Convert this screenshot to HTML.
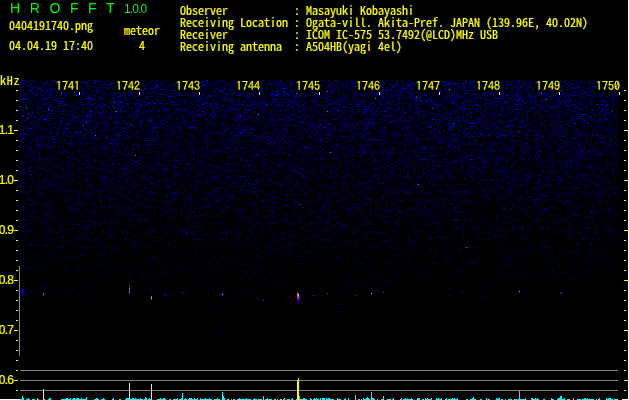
<!DOCTYPE html>
<html><head><meta charset="utf-8"><title>HROFFT 1.0.0</title>
<style>
html,body{margin:0;padding:0;background:#000;}
body{width:629px;height:400px;position:relative;overflow:hidden;color:#ffff00;
font-family:"Noto Sans CJK JP","IPAGothic",monospace;font-feature-settings:"hwid";font-size:12px;line-height:12px;}
div{position:absolute;white-space:pre;transform:translateZ(0);-webkit-text-stroke:0.2px #ffff00;}
.g{color:#00ff00;-webkit-text-stroke:0 #00ff00;font-feature-settings:normal;font-family:"Liberation Sans",sans-serif;}
.t{top:79px;width:24px;height:13px;font-family:"IPAGothic","Noto Sans CJK JP",monospace;font-feature-settings:"hwid";-webkit-text-stroke:0.15px #ffff00;}
.f{left:-1.2px;font-family:"Liberation Sans",sans-serif;font-feature-settings:normal;letter-spacing:-0.75px}
svg{position:absolute;left:0;top:0;}
</style></head><body>
<svg width="629" height="400" viewBox="0 0 629 400" shape-rendering="crispEdges" fill="none" stroke-width="1">
<defs><filter id="b1" filterUnits="userSpaceOnUse" x="0" y="0" width="629" height="400"><feConvolveMatrix order="3" kernelMatrix="0.012 0.038 0.012 0.038 0.8 0.038 0.012 0.038 0.012" divisor="1" edgeMode="none"/></filter><filter id="b2" filterUnits="userSpaceOnUse" x="0" y="0" width="629" height="400"><feConvolveMatrix order="3" kernelMatrix="0.0025 0.0125 0.0025 0.0125 0.94 0.0125 0.0025 0.0125 0.0025" divisor="1" edgeMode="none"/></filter></defs><g transform="translate(0,.5)"><g filter="url(#b1)"><path stroke="rgb(0,0,70)" d="M32 80h1m8 0h1m13 0h1m5 0h1m9 0h1m1 0h2m1 0h1m6 0h1m5 0h1m8 0h2m7 0h1m24 0h1m9 0h1m10 0h5m22 0h1m7 0h1m6 0h1m4 0h1m13 0h1m7 0h1m8 0h1m1 0h1m5 0h1m2 0h1m2 0h1m19 0h1m3 0h2m3 0h1m3 0h1m1 0h1m9 0h1m4 0h1m13 0h1m26 0h1m9 0h1m9 0h1m28 0h2m27 0h1m9 0h1m2 0h1m1 0h1m4 0h2m13 0h1m11 0h2m3 0h1m1 0h1m7 0h1m1 0h1m1 0h1m2 0h1m6 0h1m1 0h1m9 0h1m7 0h1m3 0h1m6 0h1m6 0h1m11 0h1m8 0h2m5 0h1m6 0h1m2 0h1m2 0h1m4 0h1m9 0h1m13 0h1m5 0h1m1 0h1m3 0h1m4 0h2M31 81h1m25 0h1m1 0h1m7 0h1m7 0h1m8 0h1m4 0h1m7 0h2m1 0h1m3 0h1m19 0h1m11 0h2m12 0h1m13 0h1m6 0h1m12 0h1m3 0h1m7 0h1m2 0h1m11 0h1m1 0h1m11 0h1m4 0h1m7 0h1m5 0h1m2 0h1m9 0h1m2 0h1m12 0h1m12 0h3m10 0h1m5 0h1m12 0h1m7 0h1m21 0h1m13 0h1m4 0h1m1 0h1m4 0h1m16 0h1m18 0h2m15 0h2m5 0h1m15 0h1m19 0h1m2 0h1m4 0h1m3 0h1m6 0h1m4 0h1m17 0h1m1 0h1m10 0h1m24 0h1m2 0h1m3 0h2m3 0h2m5 0h1m29 0h1m2 0h1M44 82h1m1 0h1m14 0h1m2 0h1m17 0h1m1 0h1m25 0h2m4 0h1m5 0h1m15 0h1m8 0h1m27 0h1m19 0h1m2 0h1m8 0h1m1 0h1m2 0h1m2 0h1m4 0h2m9 0h2m4 0h1m8 0h1m2 0h1m10 0h1m9 0h1m10 0h1m3 0h1m7 0h1m16 0h1m3 0h1m7 0h1m13 0h1m4 0h1m14 0h1m13 0h1m3 0h1m24 0h1m18 0h1m10 0h1m17 0h1m2 0h1m8 0h1m1 0h1m1 0h1m26 0h1m2 0h1m13 0h1m1 0h1m9 0h1m7 0h1m4 0h2m3 0h1m6 0h2m8 0h1m8 0h1m1 0h1m1 0h1m21 0h1m2 0h1m2 0h1m14 0h1M26 83h1m4 0h1m11 0h1m11 0h1m5 0h1m9 0h1m1 0h1m3 0h1m8 0h1m3 0h1m2 0h1m5 0h2m6 0h1m4 0h1m9 0h1m4 0h1m6 0h1m8 0h1m7 0h1m3 0h2m5 0h2m8 0h3m3 0h1m12 0h1m2 0h1m9 0h1m10 0h1m2 0h1m3 0h1m4 0h2m11 0h1m7 0h2m4 0h1m10 0h1m3 0h1m10 0h1m8 0h1m6 0h1m12 0h1m6 0h1m1 0h1m8 0h1m2 0h1m1 0h2m21 0h1m4 0h1m5 0h1m13 0h2m5 0h2m15 0h1m12 0h1m1 0h1m6 0h1m3 0h2m7 0h1m4 0h1m8 0h1m10 0h1m5 0h1m3 0h3m26 0h1m22 0h1m4 0h1m1 0h1m2 0h1m6 0h1m1 0h1m4 0h1m4 0h1m12 0h1m1 0h1m6 0h1m3 0h1m7 0h1m5 0h2m3 0h1m4 0h1m3 0h1m6 0h1M24 84h2m17 0h3m12 0h1m1 0h2m5 0h1m4 0h1m2 0h1m20 0h1m2 0h1m3 0h1m9 0h1m10 0h1m10 0h1m3 0h1m5 0h1m11 0h2m22 0h1m15 0h1m6 0h3m19 0h1m12 0h1m3 0h1m4 0h1m9 0h1m5 0h2m7 0h1m10 0h1m8 0h1m3 0h1m2 0h2m5 0h1m6 0h1m3 0h1m8 0h1m6 0h1m3 0h1m1 0h1m5 0h2m6 0h2m5 0h1m1 0h1m5 0h1m9 0h1m5 0h1m1 0h2m9 0h1m8 0h1m36 0h1m6 0h1m6 0h1m2 0h1m1 0h1m4 0h2m3 0h1m5 0h2m11 0h1m1 0h2m2 0h1m7 0h1m9 0h2m4 0h1m5 0h1m3 0h2m3 0h1m1 0h1m15 0h1m9 0h1m4 0h1m13 0h1m12 0h2M22 85h1m12 0h1m15 0h1m6 0h2m14 0h1m5 0h1m15 0h1m5 0h1m1 0h1m1 0h2m8 0h2m1 0h1m11 0h1m6 0h1m6 0h1m12 0h1m6 0h1m8 0h1m3 0h1m13 0h1m9 0h1m13 0h1m2 0h1m19 0h1m2 0h1m29 0h1m2 0h1m5 0h1m16 0h1m3 0h1m7 0h2m2 0h3m8 0h1m3 0h1m21 0h1m3 0h2m7 0h1m4 0h1m12 0h1m8 0h1m2 0h1m5 0h2m5 0h1m10 0h1m5 0h1m12 0h1m3 0h1m2 0h1m2 0h1m4 0h3m9 0h1m2 0h1m1 0h1m5 0h2m5 0h1m9 0h1m7 0h1m7 0h1m8 0h1m1 0h2m2 0h1m4 0h1m14 0h1m32 0h1m1 0h1m4 0h1m4 0h1m9 0h1m3 0h1m8 0h1M20 86h1m11 0h1m4 0h1m10 0h1m4 0h1m20 0h1m8 0h1m4 0h2m5 0h1m6 0h2m22 0h1m4 0h1m11 0h1m1 0h1m19 0h1m5 0h1m8 0h1m8 0h1m3 0h1m21 0h1m1 0h1m1 0h1m1 0h1m12 0h1m2 0h1m2 0h1m1 0h1m17 0h1m11 0h1m1 0h1m1 0h1m1 0h3m1 0h1m3 0h1m10 0h1m14 0h1m7 0h1m6 0h1m6 0h1m2 0h1m8 0h1m1 0h1m3 0h1m6 0h2m15 0h1m19 0h1m10 0h1m14 0h1m5 0h1m1 0h1m4 0h3m1 0h1m5 0h1m7 0h3m6 0h1m5 0h1m6 0h1m15 0h1m2 0h1m12 0h2m6 0h1m4 0h1m13 0h2m8 0h1m3 0h1m1 0h1m2 0h1m4 0h1m3 0h1m20 0h1m3 0h1m6 0h2m2 0h1m1 0h1m3 0h1m1 0h1m2 0h1M25 87h1m18 0h1m13 0h2m1 0h1m8 0h1m15 0h2m10 0h1m1 0h1m1 0h1m18 0h1m6 0h1m6 0h1m8 0h1m2 0h1m1 0h1m6 0h1m10 0h1m3 0h1m6 0h1m10 0h1m11 0h1m4 0h1m2 0h1m8 0h1m10 0h1m11 0h1m13 0h1m3 0h1m17 0h1m6 0h1m15 0h1m20 0h1m11 0h2m10 0h1m26 0h1m13 0h1m17 0h2m10 0h1m1 0h1m3 0h1m1 0h1m4 0h1m8 0h2m8 0h1m6 0h1m6 0h1m2 0h1m2 0h1m1 0h1m1 0h1m1 0h1m2 0h1m34 0h1m8 0h1m9 0h1m1 0h1m7 0h1m3 0h1m5 0h1m2 0h1m11 0h1m20 0h1m7 0h1m2 0h1m1 0h1M43 88h2m1 0h1m5 0h1m26 0h3m1 0h2m3 0h1m3 0h1m3 0h1m7 0h1m8 0h1m5 0h1m3 0h1m4 0h1m5 0h1m15 0h1m4 0h1m4 0h1m1 0h2m11 0h1m11 0h1m2 0h1m11 0h1m4 0h1m22 0h2m5 0h1m9 0h1m19 0h1m5 0h1m1 0h1m1 0h1m11 0h1m9 0h1m14 0h1m20 0h1m6 0h1m9 0h1m25 0h1m21 0h1m6 0h2m10 0h2m10 0h1m5 0h1m9 0h2m1 0h2m8 0h1m13 0h1m6 0h1m4 0h1m6 0h1m2 0h1m2 0h1m9 0h1m9 0h1m2 0h1m3 0h1m11 0h1m5 0h1m4 0h1m19 0h1m1 0h1m1 0h2m1 0h1m6 0h1m1 0h1m7 0h1m9 0h1m1 0h2m7 0h2m1 0h1M20 89h1m1 0h1m7 0h1m4 0h1m11 0h1m7 0h1m3 0h3m17 0h1m13 0h1m8 0h1m6 0h1m16 0h1m6 0h1m5 0h1m6 0h1m1 0h1m2 0h1m9 0h1m11 0h1m8 0h1m8 0h2m4 0h1m7 0h1m9 0h1m7 0h1m4 0h1m7 0h2m14 0h1m9 0h1m8 0h1m2 0h1m21 0h1m3 0h1m13 0h1m12 0h1m6 0h1m2 0h1m7 0h1m28 0h1m1 0h2m2 0h1m3 0h1m6 0h1m8 0h2m20 0h1m5 0h1m6 0h1m8 0h1m3 0h1m4 0h1m10 0h1m24 0h1m3 0h1m13 0h1m8 0h1m20 0h1m7 0h1m9 0h1m8 0h2m2 0h1m1 0h1m3 0h1m1 0h1m4 0h1m4 0h1m13 0h2m8 0h1M20 90h3m43 0h1m5 0h1m4 0h1m11 0h2m5 0h1m1 0h1m7 0h1m7 0h1m1 0h1m4 0h1m3 0h1m2 0h1m22 0h1m4 0h1m1 0h1m3 0h1m26 0h1m1 0h1m14 0h1m4 0h1m11 0h1m3 0h1m12 0h2m3 0h1m3 0h2m3 0h1m26 0h2m6 0h2m1 0h1m14 0h1m17 0h1m22 0h1m2 0h1m16 0h2m5 0h1m8 0h2m1 0h2m6 0h1m6 0h2m3 0h1m5 0h1m3 0h1m9 0h1m2 0h2m3 0h1m1 0h1m17 0h1m10 0h1m1 0h1m1 0h1m10 0h1m24 0h2m5 0h1m15 0h1m8 0h1m4 0h1m5 0h1m7 0h1m4 0h1m12 0h1m4 0h1m5 0h1m8 0h1m3 0h1m4 0h1M24 91h1m5 0h1m1 0h1m4 0h2m5 0h1m16 0h2m23 0h1m5 0h1m5 0h1m3 0h1m16 0h1m6 0h1m9 0h1m4 0h1m3 0h1m4 0h1m13 0h1m10 0h1m6 0h1m3 0h1m2 0h1m1 0h1m11 0h1m9 0h1m9 0h1m3 0h1m7 0h1m27 0h1m1 0h1m16 0h2m7 0h1m3 0h1m1 0h1m2 0h1m4 0h1m7 0h1m2 0h1m5 0h1m8 0h1m1 0h1m11 0h1m5 0h1m4 0h1m25 0h1m11 0h1m5 0h1m10 0h1m6 0h1m4 0h2m10 0h1m4 0h1m1 0h3m1 0h1m2 0h1m2 0h1m8 0h2m14 0h3m5 0h2m5 0h1m12 0h1m7 0h1m4 0h1m5 0h1m2 0h1m13 0h1m14 0h2m17 0h1m5 0h2m7 0h1m6 0h1m5 0h1M21 92h1m3 0h1m4 0h1m8 0h1m4 0h1m3 0h1m2 0h1m3 0h2m10 0h1m6 0h1m20 0h1m4 0h1m7 0h2m3 0h1m3 0h1m1 0h1m1 0h1m8 0h1m3 0h1m12 0h2m2 0h1m1 0h1m2 0h1m16 0h1m8 0h1m7 0h1m14 0h1m4 0h1m14 0h1m18 0h1m2 0h1m11 0h1m9 0h2m1 0h2m2 0h1m4 0h2m4 0h1m7 0h1m6 0h2m2 0h1m3 0h1m17 0h1m2 0h1m1 0h1m6 0h1m11 0h1m2 0h2m6 0h1m4 0h1m3 0h1m3 0h1m4 0h1m4 0h1m2 0h1m14 0h1m4 0h1m1 0h3m11 0h1m13 0h1m15 0h1m9 0h1m3 0h1m3 0h1m12 0h1m10 0h3m30 0h3m15 0h2m1 0h1m19 0h1m5 0h1m1 0h1m1 0h2m4 0h2m2 0h1m6 0h2M33 93h1m4 0h1m2 0h1m1 0h1m4 0h1m8 0h3m1 0h2m8 0h1m4 0h1m1 0h1m3 0h1m1 0h1m12 0h1m4 0h1m5 0h2m27 0h3m9 0h1m11 0h1m24 0h2m1 0h1m10 0h2m14 0h1m4 0h1m6 0h1m4 0h1m5 0h1m15 0h1m4 0h1m2 0h1m4 0h1m9 0h1m3 0h1m2 0h1m2 0h1m15 0h1m3 0h1m1 0h2m2 0h1m11 0h1m1 0h1m3 0h1m19 0h1m5 0h1m2 0h1m1 0h1m7 0h1m15 0h2m8 0h1m1 0h2m7 0h1m5 0h1m8 0h2m1 0h1m10 0h1m4 0h1m5 0h2m2 0h1m3 0h1m9 0h1m10 0h1m1 0h1m3 0h1m12 0h1m3 0h1m3 0h2m4 0h1m1 0h1m6 0h2m17 0h1m4 0h1m8 0h1m6 0h1m35 0h1m3 0h1m1 0h1m3 0h1m1 0h1M25 94h1m10 0h1m3 0h1m7 0h1m5 0h1m6 0h1m5 0h1m3 0h1m3 0h1m7 0h1m6 0h1m10 0h1m3 0h1m5 0h1m1 0h1m13 0h1m1 0h1m8 0h1m1 0h1m15 0h1m27 0h1m37 0h1m18 0h1m2 0h1m5 0h1m3 0h1m4 0h2m2 0h1m20 0h1m4 0h1m13 0h1m8 0h1m8 0h1m1 0h1m7 0h1m7 0h1m7 0h1m4 0h1m4 0h1m4 0h1m4 0h1m1 0h1m17 0h1m24 0h1m5 0h1m5 0h1m8 0h1m3 0h2m7 0h1m14 0h1m3 0h1m10 0h1m15 0h1m20 0h2m2 0h1m5 0h1m2 0h1m8 0h1m1 0h1m4 0h1m9 0h1m6 0h1m17 0h1m7 0h1m1 0h1m1 0h1m7 0h2m6 0h1m9 0h1M21 95h1m2 0h1m3 0h1m5 0h1m7 0h1m18 0h1m23 0h1m1 0h1m6 0h1m2 0h2m5 0h3m4 0h1m17 0h1m1 0h2m35 0h3m4 0h1m3 0h1m5 0h1m13 0h1m2 0h1m4 0h1m8 0h1m31 0h1m14 0h1m14 0h1m9 0h1m4 0h2m3 0h1m4 0h1m12 0h1m2 0h1m11 0h1m32 0h1m1 0h1m9 0h1m2 0h1m4 0h1m5 0h1m8 0h1m1 0h1m3 0h1m20 0h1m22 0h1m13 0h1m5 0h1m18 0h1m1 0h1m9 0h1m7 0h1m29 0h1m5 0h2m1 0h1m18 0h1m5 0h1m3 0h1m3 0h1m8 0h1m3 0h1m10 0h1M21 96h2m2 0h1m2 0h1m2 0h1m9 0h1m21 0h1m11 0h1m1 0h1m2 0h1m9 0h1m4 0h1m4 0h1m29 0h1m2 0h1m2 0h1m4 0h1m16 0h1m7 0h1m18 0h1m8 0h3m18 0h1m9 0h1m4 0h1m15 0h1m21 0h2m2 0h1m3 0h2m5 0h1m3 0h1m7 0h1m2 0h1m7 0h1m16 0h1m3 0h1m13 0h1m19 0h1m1 0h1m7 0h1m2 0h1m20 0h1m1 0h1m2 0h1m1 0h1m5 0h1m6 0h1m15 0h1m6 0h1m3 0h1m5 0h1m3 0h1m1 0h1m2 0h1m1 0h1m7 0h1m22 0h1m9 0h1m10 0h1m3 0h1m12 0h1m2 0h1m8 0h1m6 0h2m8 0h1m3 0h2m18 0h1m7 0h1m2 0h1m1 0h2m3 0h1M25 97h1m7 0h1m2 0h1m12 0h2m13 0h1m23 0h1m10 0h1m2 0h1m2 0h1m3 0h1m2 0h1m1 0h1m2 0h1m1 0h1m3 0h1m4 0h1m32 0h2m16 0h1m22 0h2m2 0h1m2 0h3m6 0h1m2 0h1m11 0h1m5 0h1m6 0h1m4 0h1m7 0h2m2 0h1m3 0h1m1 0h1m6 0h1m9 0h1m4 0h2m3 0h2m2 0h1m2 0h1m3 0h1m8 0h1m5 0h1m21 0h1m4 0h1m6 0h1m7 0h1m3 0h1m8 0h1m2 0h1m3 0h1m7 0h1m5 0h1m3 0h1m7 0h1m13 0h1m27 0h1m1 0h1m12 0h1m5 0h1m5 0h1m7 0h1m19 0h1m10 0h1m5 0h1m3 0h1m3 0h1m3 0h1m10 0h1m2 0h1m1 0h1m8 0h1m1 0h1m27 0h2m6 0h1m1 0h1M25 98h1m9 0h1m6 0h1m3 0h1m2 0h1m7 0h1m1 0h1m1 0h1m4 0h1m12 0h1m1 0h1m4 0h1m2 0h1m14 0h1m6 0h1m2 0h1m19 0h2m35 0h1m4 0h2m14 0h2m2 0h1m1 0h1m2 0h1m3 0h1m13 0h1m6 0h1m26 0h1m1 0h1m3 0h1m2 0h1m14 0h1m2 0h2m1 0h1m2 0h2m2 0h1m4 0h1m4 0h1m13 0h1m6 0h1m1 0h1m1 0h2m2 0h1m6 0h3m5 0h1m8 0h1m7 0h1m15 0h1m7 0h1m10 0h1m1 0h1m11 0h1m3 0h1m3 0h1m1 0h2m4 0h1m17 0h1m7 0h1m11 0h1m4 0h2m7 0h1m1 0h1m6 0h2m7 0h1m2 0h1m3 0h1m3 0h1m8 0h1m7 0h1m1 0h1m2 0h1m8 0h1m1 0h1m15 0h1m14 0h1m4 0h1m12 0h1m2 0h1m2 0h1m8 0h1M22 99h1m2 0h2m1 0h1m6 0h1m3 0h1m18 0h2m3 0h1m14 0h1m2 0h1m8 0h1m7 0h1m1 0h1m23 0h1m2 0h1m33 0h1m3 0h1m3 0h1m13 0h1m23 0h1m20 0h1m22 0h1m20 0h1m14 0h1m2 0h4m3 0h2m8 0h1m32 0h1m9 0h1m3 0h1m8 0h1m14 0h1m13 0h1m3 0h1m2 0h1m14 0h1m6 0h1m8 0h1m4 0h1m11 0h1m31 0h1m5 0h1m2 0h1m6 0h1m8 0h1m2 0h1m4 0h1m10 0h2m7 0h2m32 0h1m4 0h1m5 0h1m5 0h1m6 0h1m1 0h1m16 0h2m3 0h1M22 100h1m8 0h1m4 0h2m2 0h2m3 0h1m5 0h1m8 0h1m17 0h1m5 0h1m4 0h1m17 0h1m1 0h1m2 0h1m1 0h1m1 0h1m1 0h1m12 0h1m3 0h2m8 0h1m4 0h1m15 0h1m5 0h1m5 0h1m17 0h2m18 0h1m2 0h1m2 0h1m13 0h1m4 0h1m6 0h1m5 0h1m3 0h1m7 0h2m4 0h1m24 0h1m1 0h1m15 0h1m12 0h2m2 0h1m4 0h1m20 0h1m1 0h1m1 0h1m8 0h1m8 0h1m6 0h1m4 0h1m2 0h1m9 0h2m12 0h1m3 0h3m3 0h1m1 0h2m7 0h2m6 0h1m6 0h2m14 0h1m3 0h1m13 0h1m2 0h1m4 0h1m3 0h1m14 0h1m2 0h1m1 0h1m10 0h1m1 0h1m10 0h1m22 0h1m4 0h1m4 0h1m14 0h1m20 0h1M43 101h1m1 0h1m5 0h1m12 0h1m10 0h1m21 0h1m3 0h1m10 0h1m3 0h1m1 0h1m11 0h1m6 0h1m2 0h1m2 0h1m24 0h1m2 0h1m7 0h1m6 0h1m9 0h1m26 0h1m5 0h1m5 0h1m3 0h1m3 0h1m6 0h1m2 0h1m10 0h2m8 0h1m6 0h1m8 0h1m19 0h2m2 0h1m7 0h1m10 0h1m9 0h1m5 0h1m7 0h1m3 0h1m3 0h1m4 0h1m4 0h1m1 0h1m6 0h1m3 0h1m12 0h1m2 0h1m9 0h1m1 0h1m5 0h1m3 0h1m6 0h1m2 0h1m6 0h1m2 0h1m16 0h1m1 0h1m2 0h1m7 0h1m3 0h1m5 0h1m5 0h1m7 0h1m8 0h1m13 0h2m8 0h1m8 0h1m12 0h1m2 0h1m3 0h1m2 0h1m3 0h2m6 0h1m4 0h1m5 0h1m10 0h1m14 0h3M25 102h2m6 0h1m10 0h1m33 0h1m14 0h1m7 0h1m9 0h1m9 0h2m15 0h1m1 0h1m13 0h1m4 0h1m7 0h1m31 0h1m29 0h1m4 0h1m3 0h2m4 0h1m1 0h1m2 0h1m4 0h1m3 0h1m4 0h1m7 0h1m8 0h1m3 0h1m1 0h1m7 0h1m1 0h1m32 0h1m2 0h1m9 0h1m1 0h1m11 0h1m2 0h1m12 0h1m12 0h1m3 0h1m3 0h1m12 0h1m1 0h2m13 0h1m5 0h1m39 0h1m10 0h1m27 0h1m7 0h1m20 0h1m11 0h1m2 0h2m2 0h1m1 0h1m17 0h1m26 0h1m3 0h1M43 103h2m8 0h1m1 0h1m3 0h1m1 0h1m8 0h2m1 0h1m13 0h1m11 0h2m7 0h1m2 0h1m1 0h1m3 0h1m11 0h1m22 0h1m3 0h2m1 0h1m1 0h1m1 0h1m1 0h1m15 0h1m1 0h1m2 0h1m9 0h1m2 0h1m1 0h1m2 0h1m12 0h1m7 0h1m9 0h1m7 0h1m12 0h1m3 0h3m16 0h1m7 0h1m8 0h2m7 0h1m11 0h1m7 0h1m4 0h1m8 0h1m6 0h1m7 0h1m2 0h1m2 0h1m3 0h2m8 0h1m5 0h1m10 0h1m5 0h1m1 0h2m12 0h1m6 0h1m13 0h1m9 0h1m7 0h1m12 0h1m10 0h1m8 0h1m9 0h1m20 0h1m10 0h1m2 0h1m1 0h1m17 0h1m3 0h2m5 0h1m23 0h1m1 0h1m2 0h1m2 0h1M52 104h1m8 0h1m3 0h2m9 0h2m5 0h1m12 0h1m12 0h1m1 0h1m10 0h2m2 0h1m10 0h1m14 0h1m2 0h1m8 0h1m4 0h1m15 0h1m14 0h1m13 0h1m1 0h1m1 0h2m10 0h1m6 0h2m4 0h1m2 0h4m2 0h1m1 0h2m2 0h1m2 0h1m9 0h1m3 0h1m3 0h1m10 0h1m5 0h3m19 0h1m10 0h1m8 0h1m4 0h1m5 0h1m23 0h1m6 0h1m3 0h1m14 0h1m10 0h2m4 0h1m5 0h2m1 0h1m7 0h1m3 0h1m6 0h1m2 0h1m2 0h2m1 0h1m7 0h1m8 0h1m7 0h1m10 0h2m1 0h1m1 0h1m6 0h1m9 0h2m1 0h1m21 0h1m8 0h1m26 0h1m1 0h2m6 0h1m2 0h1m5 0h1m6 0h1m8 0h1m2 0h1M23 105h1m6 0h1m4 0h1m6 0h1m1 0h2m7 0h1m13 0h2m6 0h2m13 0h1m30 0h1m2 0h1m9 0h1m15 0h1m2 0h1m23 0h2m1 0h1m9 0h1m1 0h1m13 0h1m1 0h1m5 0h3m6 0h1m17 0h1m1 0h1m1 0h1m11 0h1m2 0h1m1 0h2m21 0h1m6 0h1m7 0h2m13 0h1m1 0h2m7 0h1m3 0h1m13 0h2m1 0h1m9 0h1m14 0h1m2 0h1m5 0h2m1 0h1m1 0h1m17 0h1m2 0h1m7 0h2m4 0h1m6 0h1m24 0h1m6 0h1m3 0h1m6 0h1m16 0h1m6 0h1m3 0h1m25 0h1m5 0h1m3 0h1m6 0h1m11 0h1m2 0h1m14 0h1m8 0h1m3 0h1m1 0h1m25 0h1M20 106h1m4 0h1m12 0h3m22 0h1m26 0h1m1 0h1m2 0h1m3 0h1m15 0h1m1 0h1m7 0h1m2 0h1m12 0h1m7 0h1m3 0h1m4 0h1m8 0h1m1 0h1m10 0h1m6 0h1m11 0h1m4 0h1m11 0h1m1 0h1m13 0h1m11 0h1m11 0h1m4 0h1m16 0h3m8 0h1m13 0h1m14 0h1m7 0h2m11 0h1m12 0h1m6 0h2m36 0h1m5 0h1m4 0h1m20 0h1m9 0h1m3 0h2m8 0h1m4 0h1m1 0h1m3 0h2m35 0h2m6 0h1m14 0h2m3 0h1m9 0h1m1 0h1m6 0h1m38 0h1m13 0h1m3 0h1m2 0h1M24 107h1m1 0h1m9 0h2m4 0h1m7 0h1m2 0h1m59 0h1m5 0h2m50 0h1m8 0h1m12 0h1m1 0h1m5 0h1m22 0h1m1 0h1m2 0h1m4 0h1m1 0h1m15 0h1m5 0h2m1 0h1m2 0h1m2 0h1m14 0h1m5 0h1m9 0h1m5 0h1m1 0h1m7 0h1m7 0h1m1 0h1m6 0h1m2 0h1m4 0h1m1 0h1m12 0h1m2 0h1m5 0h2m17 0h2m7 0h1m4 0h2m14 0h1m3 0h1m8 0h1m10 0h1m31 0h2m3 0h1m10 0h1m4 0h2m6 0h1m13 0h1m3 0h1m9 0h1m33 0h1m11 0h1m2 0h1m6 0h1m1 0h1m18 0h1m4 0h1m3 0h1M27 108h2m2 0h1m3 0h1m13 0h3m8 0h1m1 0h1m10 0h1m1 0h1m5 0h1m6 0h1m4 0h1m2 0h1m9 0h1m3 0h1m3 0h1m5 0h1m1 0h1m4 0h1m2 0h1m31 0h1m3 0h1m4 0h1m5 0h1m5 0h2m1 0h1m12 0h1m1 0h2m10 0h1m2 0h1m15 0h2m28 0h1m8 0h1m6 0h1m7 0h2m14 0h1m5 0h1m11 0h1m10 0h1m4 0h1m6 0h1m6 0h1m26 0h2m4 0h1m3 0h1m9 0h1m12 0h1m15 0h1m3 0h1m4 0h1m11 0h1m11 0h1m5 0h1m6 0h1m1 0h1m1 0h1m10 0h1m15 0h1m13 0h1m6 0h1m14 0h1m2 0h1m4 0h1m3 0h2m10 0h1m7 0h1m10 0h1m21 0h1m7 0h1M38 109h1m2 0h1m2 0h1m2 0h1m8 0h1m20 0h1m3 0h1m4 0h1m10 0h1m34 0h1m5 0h1m6 0h1m6 0h2m3 0h2m4 0h1m2 0h1m4 0h1m2 0h1m5 0h1m10 0h1m1 0h1m6 0h1m10 0h2m7 0h1m9 0h1m19 0h1m6 0h1m1 0h1m2 0h1m9 0h1m1 0h1m21 0h1m10 0h1m2 0h1m1 0h1m2 0h2m7 0h1m10 0h1m16 0h1m3 0h1m5 0h1m6 0h1m5 0h1m2 0h1m14 0h1m7 0h1m6 0h1m5 0h1m4 0h1m6 0h1m5 0h1m1 0h1m2 0h1m11 0h1m5 0h2m5 0h1m4 0h1m1 0h1m4 0h1m19 0h1m13 0h1m5 0h3m1 0h2m6 0h1m13 0h2m2 0h1m5 0h1m15 0h2m4 0h2m4 0h2m3 0h1m1 0h1M35 110h1m6 0h3m45 0h1m4 0h1m1 0h1m11 0h1m4 0h1m4 0h1m4 0h1m13 0h1m13 0h2m2 0h1m11 0h2m5 0h1m7 0h2m9 0h1m1 0h1m16 0h1m8 0h1m4 0h1m17 0h1m8 0h1m4 0h1m9 0h1m2 0h1m20 0h1m9 0h1m25 0h1m1 0h1m12 0h2m36 0h1m13 0h1m6 0h1m6 0h1m10 0h2m30 0h3m5 0h1m17 0h1m2 0h1m28 0h1m8 0h1m8 0h2m5 0h1m17 0h1m2 0h1m20 0h1m8 0h1m2 0h1m2 0h1m2 0h1M21 111h1m9 0h1m7 0h2m2 0h1m1 0h1m9 0h1m6 0h1m11 0h1m1 0h1m16 0h1m6 0h1m1 0h1m1 0h1m13 0h1m15 0h1m29 0h1m3 0h2m10 0h1m3 0h1m3 0h1m1 0h1m4 0h1m5 0h1m2 0h1m18 0h1m6 0h1m16 0h1m1 0h1m5 0h1m7 0h1m2 0h1m15 0h1m6 0h2m4 0h1m15 0h1m37 0h1m44 0h2m5 0h1m9 0h1m3 0h1m10 0h1m10 0h1m12 0h1m1 0h1m19 0h1m24 0h1m7 0h1m21 0h1m16 0h1m26 0h1m31 0h1m8 0h1M23 112h1m1 0h1m2 0h1m7 0h1m1 0h1m2 0h1m12 0h1m4 0h1m5 0h1m1 0h1m21 0h1m9 0h1m2 0h1m2 0h1m7 0h1m2 0h1m3 0h1m10 0h1m9 0h1m11 0h2m8 0h1m13 0h1m11 0h1m2 0h1m6 0h1m1 0h1m2 0h1m25 0h1m25 0h1m6 0h2m3 0h1m16 0h1m1 0h1m1 0h1m26 0h1m1 0h1m7 0h1m17 0h1m1 0h1m1 0h1m3 0h1m4 0h1m25 0h1m2 0h1m8 0h1m1 0h1m1 0h1m11 0h1m9 0h1m18 0h1m4 0h1m19 0h2m23 0h1m22 0h2m1 0h1m4 0h1m4 0h1m7 0h1m21 0h1m2 0h1m1 0h1m13 0h1m5 0h1m17 0h1m2 0h1m5 0h1M27 113h2m2 0h1m13 0h1m13 0h1m15 0h1m4 0h1m7 0h1m5 0h1m12 0h1m3 0h1m1 0h1m1 0h1m1 0h1m1 0h1m2 0h1m11 0h3m2 0h1m8 0h1m19 0h1m2 0h1m3 0h2m4 0h1m3 0h1m6 0h1m2 0h2m1 0h2m15 0h1m4 0h1m4 0h1m3 0h1m5 0h1m6 0h1m16 0h1m3 0h1m10 0h1m26 0h1m16 0h2m21 0h1m12 0h1m10 0h1m4 0h1m3 0h1m3 0h3m14 0h2m7 0h2m1 0h1m8 0h1m7 0h1m8 0h1m2 0h1m2 0h1m8 0h1m6 0h1m13 0h1m1 0h2m2 0h1m1 0h1m1 0h1m2 0h1m10 0h1m2 0h1m18 0h1m25 0h1m11 0h1m7 0h1m6 0h1m3 0h1m6 0h1m10 0h1m13 0h2m2 0h1M24 114h1m8 0h1m19 0h2m1 0h2m1 0h1m9 0h1m2 0h2m5 0h1m7 0h1m4 0h1m14 0h1m7 0h2m12 0h2m11 0h1m1 0h1m7 0h1m3 0h1m7 0h1m2 0h1m2 0h1m8 0h1m14 0h1m26 0h2m6 0h1m2 0h1m4 0h1m15 0h1m8 0h1m5 0h1m9 0h1m3 0h1m12 0h1m9 0h1m7 0h1m3 0h1m8 0h1m12 0h2m12 0h2m5 0h1m11 0h1m16 0h1m1 0h1m2 0h1m20 0h1m4 0h1m15 0h2m12 0h1m5 0h1m2 0h1m4 0h2m16 0h1m3 0h1m7 0h1m5 0h1m4 0h1m11 0h2m6 0h1m8 0h1m3 0h1m23 0h1m2 0h1m17 0h1m8 0h2m8 0h1m6 0h1m3 0h1M22 115h1m21 0h1m4 0h1m1 0h1m4 0h1m21 0h1m2 0h1m6 0h1m1 0h1m3 0h1m5 0h1m5 0h1m2 0h2m4 0h1m1 0h2m6 0h1m6 0h1m4 0h2m1 0h1m3 0h1m13 0h1m5 0h3m12 0h1m2 0h1m7 0h1m7 0h2m3 0h1m13 0h1m3 0h1m2 0h1m11 0h1m1 0h1m8 0h1m16 0h1m4 0h1m13 0h2m5 0h1m10 0h1m29 0h1m10 0h1m3 0h1m6 0h1m10 0h1m1 0h1m16 0h1m4 0h3m4 0h2m13 0h1m6 0h1m4 0h1m12 0h1m20 0h1m3 0h1m1 0h1m12 0h1m8 0h1m6 0h2m4 0h1m2 0h1m4 0h1m15 0h1m4 0h2m12 0h2m1 0h1m15 0h1m2 0h2m7 0h1m2 0h1m7 0h1m20 0h1m10 0h1M20 116h1m13 0h1m5 0h1m5 0h1m5 0h3m18 0h1m3 0h1m1 0h1m11 0h1m10 0h1m3 0h1m3 0h1m3 0h1m12 0h1m2 0h1m6 0h1m1 0h1m7 0h1m9 0h1m4 0h2m1 0h1m9 0h1m17 0h1m3 0h1m12 0h1m15 0h1m5 0h2m2 0h3m8 0h2m2 0h1m4 0h1m8 0h1m4 0h1m3 0h1m13 0h2m8 0h1m4 0h1m12 0h1m3 0h1m2 0h1m21 0h1m2 0h1m2 0h1m3 0h1m1 0h1m5 0h2m2 0h1m4 0h1m16 0h2m15 0h1m5 0h1m5 0h1m4 0h2m15 0h1m12 0h1m3 0h1m11 0h1m10 0h1m10 0h1m4 0h3m22 0h1m9 0h1m8 0h1m5 0h1m18 0h1m5 0h1m4 0h1m5 0h2m12 0h1M44 117h1m1 0h2m2 0h1m30 0h1m11 0h1m2 0h1m5 0h1m1 0h2m2 0h5m1 0h1m7 0h1m7 0h1m8 0h1m22 0h1m20 0h2m2 0h2m2 0h1m3 0h1m10 0h1m7 0h1m13 0h1m2 0h1m8 0h1m1 0h1m9 0h1m4 0h1m21 0h1m8 0h1m1 0h1m1 0h1m18 0h1m3 0h1m4 0h1m2 0h1m1 0h1m11 0h1m11 0h1m2 0h1m12 0h1m11 0h1m43 0h1m26 0h1m2 0h1m3 0h1m5 0h1m7 0h1m4 0h1m2 0h1m3 0h1m5 0h1m6 0h1m11 0h2m1 0h1m14 0h1m2 0h1m6 0h1m24 0h2m8 0h2m5 0h1m2 0h1m7 0h1m20 0h2m5 0h1M20 118h1m17 0h1m3 0h2m3 0h1m3 0h1m10 0h1m2 0h1m4 0h1m24 0h1m6 0h1m7 0h1m4 0h1m2 0h1m2 0h1m3 0h2m1 0h1m2 0h1m5 0h1m4 0h1m5 0h1m7 0h1m11 0h1m7 0h1m5 0h1m8 0h1m1 0h2m12 0h1m16 0h1m5 0h1m11 0h1m2 0h1m6 0h1m3 0h2m12 0h1m7 0h1m2 0h2m2 0h1m6 0h2m6 0h1m7 0h1m2 0h1m2 0h2m2 0h2m13 0h2m2 0h1m8 0h1m1 0h1m6 0h1m15 0h1m2 0h1m2 0h1m2 0h1m21 0h1m4 0h2m6 0h1m1 0h1m12 0h1m1 0h1m21 0h1m9 0h1m23 0h1m12 0h1m8 0h1m15 0h1m2 0h1m10 0h1m6 0h1m13 0h1m7 0h1m11 0h1m2 0h1m21 0h1M29 119h1m7 0h1m3 0h1m9 0h1m1 0h1m14 0h1m1 0h1m1 0h1m4 0h1m4 0h3m9 0h2m3 0h1m15 0h2m10 0h1m1 0h1m9 0h1m3 0h1m2 0h2m13 0h3m1 0h3m16 0h2m10 0h1m5 0h1m11 0h1m17 0h1m17 0h1m7 0h2m4 0h1m8 0h1m9 0h1m2 0h1m7 0h1m5 0h2m4 0h1m15 0h1m2 0h1m11 0h1m5 0h1m10 0h2m7 0h1m4 0h1m6 0h1m2 0h1m9 0h3m3 0h1m39 0h1m9 0h1m7 0h1m2 0h1m4 0h1m8 0h1m12 0h1m2 0h1m2 0h1m12 0h1m1 0h1m8 0h1m3 0h3m3 0h2m2 0h1m12 0h1m8 0h1m9 0h2m38 0h1m5 0h1m9 0h1m2 0h1M28 120h1m4 0h1m7 0h1m4 0h1m4 0h2m5 0h1m20 0h1m2 0h1m3 0h1m7 0h1m9 0h1m1 0h2m1 0h1m5 0h1m2 0h1m3 0h1m1 0h1m8 0h2m3 0h1m6 0h1m3 0h1m12 0h2m3 0h1m19 0h1m3 0h1m2 0h1m1 0h1m3 0h1m5 0h1m5 0h1m6 0h1m5 0h1m16 0h1m9 0h1m2 0h1m6 0h1m5 0h2m6 0h1m12 0h1m2 0h1m42 0h1m6 0h1m13 0h1m2 0h1m3 0h1m6 0h1m10 0h1m13 0h2m1 0h1m8 0h2m3 0h1m23 0h1m2 0h1m1 0h1m3 0h1m2 0h1m2 0h1m2 0h1m1 0h1m11 0h1m9 0h1m1 0h2m7 0h1m1 0h1m5 0h1m21 0h1m6 0h1m6 0h1m5 0h1m7 0h2m3 0h1m19 0h1m5 0h1m3 0h1m1 0h2m16 0h1m1 0h1M20 121h1m2 0h1m2 0h1m9 0h1m7 0h1m1 0h1m20 0h2m1 0h1m1 0h1m3 0h1m4 0h1m1 0h1m1 0h1m14 0h1m4 0h1m3 0h1m15 0h1m6 0h1m17 0h2m20 0h2m1 0h1m4 0h1m8 0h1m3 0h3m18 0h1m8 0h1m11 0h1m5 0h1m4 0h1m4 0h2m3 0h1m2 0h1m4 0h2m5 0h1m3 0h1m7 0h1m3 0h1m12 0h1m14 0h1m2 0h2m1 0h1m12 0h1m16 0h1m5 0h1m2 0h1m4 0h1m4 0h1m27 0h1m17 0h1m10 0h1m8 0h1m6 0h1m16 0h1m5 0h1m2 0h1m8 0h1m11 0h1m14 0h1m1 0h1m21 0h1m10 0h1m4 0h1m3 0h1m4 0h3m23 0h2m11 0h1m3 0h1m5 0h1m2 0h1m6 0h1M20 122h1m2 0h1m16 0h1m1 0h1m22 0h2m5 0h1m9 0h1m8 0h1m12 0h3m13 0h1m5 0h2m13 0h1m7 0h1m3 0h1m4 0h1m2 0h1m4 0h1m6 0h1m1 0h1m6 0h1m3 0h1m14 0h1m6 0h1m2 0h1m7 0h1m12 0h1m3 0h1m7 0h1m7 0h1m20 0h1m17 0h1m11 0h2m14 0h3m3 0h1m12 0h1m2 0h1m24 0h1m2 0h1m13 0h1m17 0h3m5 0h1m16 0h1m5 0h1m2 0h2m7 0h1m7 0h1m2 0h1m3 0h1m14 0h1m19 0h1m7 0h1m14 0h1m1 0h1m6 0h1m3 0h1m20 0h1m2 0h2m9 0h1m4 0h1m4 0h1m2 0h1m2 0h2m2 0h1m9 0h1m6 0h1m1 0h1m3 0h1m1 0h1M34 123h1m17 0h1m7 0h1m7 0h1m16 0h1m2 0h1m9 0h1m1 0h1m5 0h1m10 0h1m1 0h2m14 0h1m14 0h1m2 0h1m19 0h1m3 0h4m1 0h1m6 0h1m6 0h1m15 0h1m4 0h3m4 0h2m4 0h1m7 0h1m12 0h1m20 0h2m9 0h1m6 0h1m8 0h1m3 0h1m27 0h1m13 0h1m6 0h1m7 0h1m1 0h1m8 0h1m10 0h2m2 0h1m1 0h1m6 0h1m8 0h1m7 0h1m4 0h1m29 0h1m3 0h2m36 0h4m1 0h1m21 0h1m4 0h1m5 0h1m3 0h1m6 0h1m3 0h1m5 0h1m3 0h2m7 0h1m8 0h1m4 0h1m10 0h1m17 0h1m12 0h1M38 124h3m10 0h1m10 0h1m11 0h1m12 0h1m20 0h2m6 0h1m3 0h1m5 0h1m14 0h1m1 0h1m3 0h1m2 0h1m4 0h1m15 0h1m5 0h2m1 0h1m27 0h1m6 0h1m14 0h1m9 0h2m5 0h2m11 0h1m20 0h1m28 0h1m12 0h1m6 0h1m7 0h1m4 0h2m2 0h2m3 0h2m3 0h1m12 0h1m5 0h1m13 0h1m17 0h1m2 0h1m2 0h1m12 0h1m8 0h1m3 0h1m3 0h1m1 0h1m2 0h1m4 0h1m4 0h1m5 0h2m27 0h2m2 0h1m4 0h1m2 0h1m7 0h1m2 0h1m3 0h1m11 0h1m19 0h1m7 0h1m5 0h3m12 0h1m1 0h1m1 0h1m12 0h1m16 0h1M20 125h1m2 0h2m3 0h1m4 0h1m6 0h1m1 0h1m2 0h1m2 0h1m2 0h1m1 0h1m7 0h1m3 0h1m20 0h1m29 0h1m11 0h1m7 0h1m2 0h2m40 0h1m17 0h1m31 0h1m3 0h1m9 0h1m18 0h1m15 0h1m1 0h1m1 0h3m14 0h1m6 0h4m8 0h1m3 0h1m3 0h1m1 0h1m1 0h1m7 0h1m4 0h1m8 0h1m2 0h1m10 0h1m19 0h1m5 0h1m9 0h1m15 0h1m5 0h1m10 0h1m5 0h1m7 0h1m15 0h1m7 0h1m6 0h1m3 0h2m6 0h2m1 0h1m1 0h1m10 0h1m14 0h1m43 0h1m16 0h1m3 0h1M27 126h1m8 0h1m8 0h1m19 0h1m1 0h1m5 0h1m10 0h1m2 0h1m9 0h1m12 0h1m3 0h1m6 0h1m2 0h1m15 0h1m4 0h1m3 0h1m1 0h1m5 0h1m5 0h2m8 0h1m2 0h1m2 0h2m1 0h1m3 0h1m17 0h1m4 0h2m1 0h1m1 0h1m12 0h1m10 0h1m6 0h1m2 0h1m12 0h1m3 0h1m3 0h2m1 0h1m10 0h1m2 0h1m2 0h1m7 0h1m21 0h1m3 0h1m11 0h1m4 0h1m9 0h1m4 0h1m10 0h1m1 0h1m11 0h1m2 0h1m10 0h1m4 0h1m8 0h2m9 0h1m6 0h1m3 0h1m11 0h1m1 0h1m15 0h1m2 0h1m4 0h1m3 0h2m3 0h1m1 0h1m2 0h1m1 0h1m4 0h1m2 0h2m9 0h1m6 0h1m6 0h1m2 0h1m8 0h1m17 0h2m9 0h1m16 0h1m7 0h1m1 0h1m5 0h1m6 0h3m7 0h1m7 0h1M28 127h1m4 0h2m8 0h1m15 0h1m3 0h1m14 0h1m4 0h1m10 0h1m1 0h1m6 0h2m8 0h1m2 0h2m3 0h1m2 0h1m4 0h1m2 0h1m11 0h1m4 0h1m2 0h2m12 0h1m11 0h1m13 0h1m8 0h1m2 0h1m18 0h1m3 0h1m8 0h1m6 0h1m1 0h1m2 0h1m1 0h1m14 0h1m1 0h1m13 0h1m12 0h1m4 0h1m12 0h1m18 0h1m6 0h1m5 0h1m2 0h1m3 0h1m24 0h1m1 0h1m1 0h1m2 0h1m11 0h1m5 0h1m21 0h1m14 0h1m3 0h1m10 0h1m15 0h1m1 0h1m6 0h1m4 0h1m1 0h1m3 0h1m3 0h1m9 0h1m1 0h1m7 0h1m8 0h1m2 0h1m19 0h1m6 0h2m1 0h1m1 0h1m2 0h1m35 0h1m1 0h1m5 0h1m8 0h1M23 128h1m32 0h1m11 0h1m24 0h1m7 0h1m7 0h1m4 0h1m12 0h1m3 0h1m1 0h1m1 0h1m6 0h1m1 0h1m6 0h2m2 0h1m5 0h2m2 0h1m5 0h2m1 0h1m2 0h2m1 0h1m1 0h1m2 0h1m2 0h1m16 0h2m14 0h1m6 0h2m5 0h4m2 0h1m1 0h1m6 0h1m1 0h2m6 0h1m12 0h1m3 0h2m16 0h1m11 0h2m9 0h1m1 0h2m12 0h1m23 0h1m15 0h1m5 0h1m1 0h1m3 0h1m14 0h2m7 0h1m16 0h1m9 0h1m2 0h1m6 0h1m4 0h1m22 0h1m5 0h1m6 0h1m9 0h1m12 0h1m16 0h1m9 0h2m17 0h1m5 0h2m39 0h1m4 0h1m1 0h1m5 0h1M25 129h2m16 0h1m2 0h1m6 0h1m1 0h1m8 0h1m9 0h1m4 0h1m2 0h1m1 0h1m9 0h1m8 0h1m17 0h1m9 0h1m6 0h2m10 0h1m2 0h1m9 0h1m2 0h1m1 0h1m8 0h1m12 0h1m6 0h1m5 0h1m1 0h1m4 0h1m12 0h1m3 0h1m12 0h1m5 0h1m2 0h1m3 0h1m8 0h1m3 0h1m11 0h1m2 0h1m1 0h1m8 0h2m2 0h1m7 0h1m1 0h1m11 0h1m4 0h1m6 0h3m7 0h1m5 0h1m18 0h1m5 0h1m9 0h1m2 0h2m16 0h2m2 0h1m2 0h1m7 0h2m8 0h1m5 0h1m5 0h1m3 0h2m2 0h1m5 0h1m9 0h1m6 0h1m1 0h1m2 0h1m4 0h2m4 0h1m8 0h1m14 0h1m14 0h1m32 0h1m17 0h1m19 0h1m3 0h1m3 0h1m5 0h1M26 130h1m10 0h1m2 0h1m5 0h1m1 0h1m9 0h1m28 0h2m9 0h1m1 0h2m23 0h1m2 0h1m1 0h1m14 0h2m4 0h1m14 0h1m1 0h1m2 0h1m1 0h1m22 0h1m22 0h1m3 0h1m5 0h1m8 0h1m1 0h1m31 0h1m5 0h1m5 0h1m26 0h1m4 0h1m5 0h1m1 0h1m17 0h1m18 0h1m12 0h1m3 0h1m1 0h1m2 0h2m6 0h1m10 0h1m5 0h1m10 0h1m33 0h1m5 0h1m11 0h1m17 0h1m37 0h1m8 0h1m6 0h1m2 0h1m20 0h1m3 0h1m4 0h1m13 0h1m3 0h1m7 0h1m2 0h1m1 0h2m3 0h1m1 0h1M24 131h2m2 0h1m2 0h1m5 0h2m10 0h1m1 0h1m6 0h1m10 0h1m7 0h1m3 0h1m6 0h1m2 0h1m1 0h1m6 0h1m1 0h1m6 0h1m32 0h1m1 0h1m22 0h1m8 0h1m2 0h1m12 0h1m4 0h2m11 0h1m2 0h1m6 0h1m11 0h1m1 0h1m2 0h1m33 0h2m11 0h1m15 0h1m3 0h2m1 0h1m7 0h2m1 0h2m1 0h1m12 0h1m3 0h1m5 0h1m1 0h1m3 0h1m15 0h1m5 0h1m2 0h1m15 0h1m13 0h1m6 0h1m8 0h1m11 0h2m27 0h1m1 0h2m4 0h1m6 0h1m3 0h1m1 0h1m5 0h1m6 0h1m18 0h3m2 0h1m4 0h1m4 0h1m1 0h2m1 0h1m8 0h1m13 0h1m11 0h1m2 0h1m5 0h1m5 0h1m6 0h1m4 0h2m17 0h1M22 132h1m14 0h1m11 0h1m7 0h2m4 0h2m3 0h1m46 0h1m8 0h1m1 0h1m4 0h2m9 0h1m10 0h1m2 0h1m3 0h2m4 0h1m2 0h1m2 0h1m2 0h1m5 0h1m20 0h1m18 0h1m2 0h2m1 0h1m4 0h1m10 0h1m4 0h1m5 0h1m2 0h1m3 0h1m6 0h1m5 0h1m2 0h1m1 0h1m2 0h1m6 0h1m2 0h1m1 0h1m6 0h1m11 0h1m1 0h1m1 0h1m6 0h3m1 0h1m2 0h1m11 0h1m11 0h1m4 0h1m1 0h1m5 0h1m9 0h1m12 0h2m4 0h1m5 0h1m5 0h1m4 0h1m13 0h1m16 0h2m5 0h1m9 0h1m10 0h1m16 0h1m8 0h1m3 0h1m1 0h1m1 0h1m7 0h1m24 0h1m7 0h1m2 0h1m1 0h1m1 0h1m6 0h3m11 0h1m3 0h1m7 0h1m11 0h2M21 133h1m15 0h1m4 0h2m1 0h1m1 0h1m2 0h1m2 0h1m4 0h1m4 0h1m25 0h1m12 0h1m2 0h1m3 0h1m2 0h1m5 0h1m4 0h1m12 0h1m9 0h1m2 0h1m11 0h1m2 0h1m6 0h1m2 0h2m21 0h1m6 0h1m7 0h1m5 0h1m3 0h1m7 0h1m1 0h1m3 0h1m13 0h1m1 0h1m16 0h2m2 0h1m4 0h1m5 0h1m1 0h1m2 0h1m5 0h1m10 0h2m2 0h1m5 0h1m4 0h2m6 0h1m19 0h1m1 0h1m8 0h1m14 0h1m1 0h1m4 0h1m9 0h1m2 0h1m17 0h1m3 0h1m21 0h1m6 0h1m8 0h1m5 0h1m1 0h2m26 0h1m7 0h3m9 0h1m1 0h1m3 0h2m2 0h1m14 0h3m9 0h1m9 0h1m22 0h2m19 0h1m5 0h1m2 0h1m4 0h1M25 134h1m3 0h1m14 0h2m8 0h1m7 0h1m4 0h2m11 0h1m8 0h1m1 0h1m6 0h1m1 0h2m1 0h1m2 0h2m1 0h1m8 0h1m3 0h1m1 0h1m20 0h2m13 0h1m26 0h1m3 0h1m12 0h1m5 0h1m9 0h1m5 0h1m12 0h1m7 0h1m11 0h1m23 0h1m9 0h1m19 0h1m1 0h1m4 0h2m1 0h1m4 0h1m15 0h1m45 0h2m10 0h1m3 0h1m13 0h4m2 0h1m2 0h1m5 0h1m3 0h1m11 0h1m13 0h1m3 0h1m7 0h1m9 0h1m3 0h1m6 0h1m2 0h2m14 0h1m2 0h2m9 0h1m2 0h1m14 0h1m8 0h2m1 0h1m3 0h1m16 0h1m15 0h1m9 0h1m1 0h1m2 0h1m2 0h1M20 135h1m12 0h1m1 0h1m2 0h2m2 0h1m7 0h1m16 0h1m1 0h1m2 0h1m12 0h1m4 0h1m4 0h1m14 0h1m5 0h1m1 0h1m11 0h2m9 0h1m17 0h1m4 0h1m1 0h4m1 0h1m51 0h1m14 0h1m1 0h1m3 0h1m3 0h1m5 0h1m1 0h3m5 0h1m8 0h1m9 0h2m5 0h1m3 0h1m13 0h1m5 0h1m7 0h1m17 0h1m6 0h1m3 0h1m1 0h1m2 0h1m5 0h1m19 0h2m5 0h1m11 0h1m5 0h2m5 0h1m17 0h1m1 0h1m5 0h1m1 0h1m3 0h1m7 0h1m7 0h1m1 0h1m5 0h1m8 0h2m1 0h1m3 0h1m13 0h1m2 0h1m5 0h1m2 0h1m15 0h1m3 0h1m4 0h1m5 0h1m21 0h1m5 0h1m4 0h1m2 0h3m2 0h1m3 0h1m9 0h1m3 0h1m1 0h1m8 0h1m3 0h1M21 136h1m16 0h1m2 0h3m5 0h2m6 0h1m11 0h1m10 0h1m4 0h1m30 0h1m4 0h1m9 0h1m15 0h1m10 0h1m10 0h1m11 0h1m1 0h1m4 0h1m2 0h1m1 0h3m1 0h1m5 0h2m1 0h1m13 0h1m14 0h1m8 0h1m4 0h1m9 0h1m6 0h1m12 0h1m5 0h1m4 0h1m7 0h1m8 0h2m25 0h1m20 0h1m7 0h1m1 0h1m12 0h1m2 0h1m1 0h1m14 0h2m5 0h1m13 0h1m15 0h2m3 0h1m3 0h1m4 0h1m1 0h1m7 0h1m16 0h2m5 0h1m54 0h1m2 0h1m4 0h1m4 0h1m4 0h1m17 0h1m1 0h1m1 0h1m12 0h1m5 0h1m4 0h1m5 0h1m5 0h2M28 137h1m14 0h1m10 0h1m6 0h1m1 0h1m2 0h1m9 0h1m1 0h1m6 0h2m2 0h1m2 0h1m6 0h1m2 0h1m2 0h1m12 0h1m3 0h1m7 0h1m5 0h1m5 0h1m2 0h1m7 0h1m25 0h1m23 0h2m1 0h1m2 0h1m9 0h1m2 0h1m4 0h2m6 0h1m1 0h1m2 0h1m18 0h1m2 0h2m4 0h1m12 0h1m2 0h1m3 0h2m2 0h1m6 0h1m1 0h1m14 0h1m10 0h1m1 0h1m1 0h2m6 0h4m7 0h3m9 0h1m2 0h1m7 0h1m11 0h1m5 0h1m6 0h2m9 0h1m6 0h1m15 0h1m1 0h1m1 0h1m4 0h1m1 0h1m3 0h1m23 0h1m2 0h1m1 0h2m4 0h1m6 0h1m1 0h1m1 0h1m2 0h1m3 0h1m18 0h1m7 0h1m4 0h2m19 0h1m3 0h1m14 0h2m5 0h1m2 0h1m4 0h1m4 0h1m7 0h1m9 0h1m3 0h1M22 138h1m7 0h1m7 0h1m6 0h1m5 0h1m4 0h1m2 0h1m4 0h1m25 0h1m10 0h1m3 0h2m3 0h2m11 0h1m3 0h1m18 0h1m6 0h1m1 0h1m1 0h1m4 0h1m2 0h1m2 0h1m13 0h1m10 0h1m15 0h1m5 0h1m5 0h1m5 0h1m8 0h2m3 0h1m5 0h1m9 0h1m28 0h1m2 0h1m10 0h1m11 0h1m6 0h3m8 0h1m9 0h1m10 0h1m17 0h1m5 0h1m10 0h1m9 0h1m9 0h1m2 0h2m17 0h1m3 0h1m6 0h1m8 0h1m1 0h1m2 0h1m1 0h2m10 0h1m6 0h2m7 0h1m1 0h1m5 0h1m5 0h1m15 0h1m29 0h1m9 0h1m9 0h1m1 0h1m7 0h1m3 0h2m4 0h1m2 0h1m3 0h1m15 0h1M23 139h2m18 0h1m2 0h1m8 0h2m2 0h1m8 0h1m11 0h1m11 0h1m5 0h1m1 0h1m6 0h1m1 0h1m2 0h1m2 0h1m11 0h1m1 0h1m1 0h1m9 0h1m5 0h1m5 0h2m32 0h1m6 0h1m2 0h1m4 0h1m4 0h1m16 0h2m9 0h1m16 0h1m3 0h1m2 0h1m8 0h1m5 0h1m10 0h3m1 0h1m5 0h1m2 0h2m15 0h1m3 0h1m4 0h1m25 0h1m18 0h3m1 0h2m11 0h3m4 0h2m1 0h1m9 0h1m4 0h1m4 0h1m7 0h2m10 0h2m2 0h1m9 0h2m2 0h1m2 0h1m23 0h1m10 0h1m48 0h2m2 0h2m16 0h1m4 0h1m22 0h1m3 0h1m3 0h1m9 0h1m4 0h1M54 140h1m10 0h1m11 0h4m4 0h1m1 0h1m2 0h1m9 0h2m9 0h1m8 0h1m52 0h1m18 0h1m7 0h1m11 0h1m5 0h1m11 0h2m7 0h1m14 0h1m8 0h1m1 0h1m3 0h1m14 0h1m17 0h1m11 0h3m3 0h1m11 0h1m10 0h1m6 0h2m3 0h1m11 0h1m4 0h2m8 0h1m13 0h1m5 0h1m4 0h1m37 0h1m2 0h1m3 0h1m10 0h1m4 0h1m1 0h1m2 0h1m9 0h1m9 0h1m7 0h1m2 0h1m2 0h2m20 0h1m2 0h1m15 0h2m2 0h1m5 0h3m3 0h1m2 0h1m1 0h1m23 0h1m2 0h1m2 0h1m9 0h1m1 0h2m3 0h1M28 141h1m3 0h1m2 0h1m3 0h2m1 0h1m8 0h1m8 0h1m4 0h1m1 0h1m1 0h1m6 0h1m10 0h1m5 0h1m3 0h2m6 0h1m17 0h2m10 0h1m11 0h1m14 0h1m1 0h1m6 0h1m8 0h1m6 0h3m3 0h1m14 0h1m1 0h1m5 0h1m35 0h3m2 0h1m1 0h1m10 0h1m4 0h1m1 0h1m6 0h2m15 0h1m1 0h1m7 0h1m6 0h1m1 0h1m16 0h1m12 0h1m4 0h1m3 0h1m1 0h1m1 0h1m27 0h1m4 0h1m8 0h1m2 0h1m3 0h2m5 0h1m13 0h1m2 0h3m21 0h1m3 0h1m2 0h1m5 0h2m12 0h1m1 0h1m3 0h1m4 0h1m7 0h1m1 0h1m1 0h1m34 0h1m9 0h1m7 0h1m1 0h1m10 0h2m6 0h1m11 0h1m8 0h1m8 0h2M42 142h1m3 0h1m5 0h1m27 0h2m4 0h1m6 0h1m9 0h1m3 0h2m3 0h1m3 0h1m1 0h1m3 0h1m15 0h1m2 0h1m7 0h1m1 0h2m3 0h1m2 0h1m7 0h1m1 0h2m13 0h2m7 0h2m2 0h1m2 0h1m4 0h2m1 0h1m6 0h1m5 0h1m2 0h1m6 0h1m1 0h1m1 0h1m6 0h1m2 0h1m10 0h2m7 0h1m1 0h1m6 0h1m3 0h1m4 0h1m9 0h1m20 0h1m4 0h1m2 0h1m14 0h1m1 0h1m4 0h1m5 0h1m10 0h1m1 0h1m8 0h1m8 0h1m2 0h1m9 0h1m2 0h1m4 0h1m5 0h1m5 0h2m3 0h1m11 0h1m2 0h1m3 0h1m8 0h1m2 0h1m9 0h1m3 0h1m1 0h1m3 0h1m4 0h1m4 0h2m1 0h1m5 0h1m35 0h1m10 0h1m7 0h1m6 0h1m12 0h1m1 0h1m14 0h1m2 0h1m10 0h3m14 0h1m1 0h2M25 143h1m2 0h1m5 0h1m10 0h1m7 0h1m4 0h1m7 0h1m4 0h1m10 0h1m6 0h1m9 0h1m8 0h1m16 0h1m3 0h1m5 0h1m12 0h1m1 0h1m24 0h1m2 0h1m1 0h1m8 0h1m14 0h1m6 0h1m8 0h2m7 0h1m2 0h1m2 0h1m15 0h1m5 0h1m17 0h1m3 0h1m7 0h1m4 0h1m5 0h1m1 0h2m13 0h2m28 0h1m2 0h1m8 0h1m2 0h1m4 0h1m7 0h1m7 0h2m5 0h1m7 0h1m1 0h1m2 0h1m3 0h1m6 0h1m10 0h1m4 0h1m15 0h2m3 0h1m2 0h1m8 0h1m16 0h1m9 0h1m8 0h1m7 0h1m9 0h2m8 0h3m8 0h1m7 0h1m8 0h1m11 0h2m9 0h1m1 0h1m6 0h1m1 0h1m5 0h1m6 0h1m7 0h1m2 0h1m3 0h1M20 144h1m2 0h1m22 0h2m1 0h1m5 0h1m6 0h1m7 0h1m1 0h1m4 0h1m4 0h1m9 0h1m2 0h1m31 0h1m20 0h2m2 0h1m3 0h1m25 0h1m2 0h1m23 0h1m19 0h1m16 0h1m4 0h1m1 0h1m2 0h1m2 0h1m12 0h1m40 0h1m9 0h1m5 0h1m15 0h1m11 0h1m11 0h1m12 0h2m17 0h1m1 0h4m4 0h1m4 0h2m8 0h1m18 0h1m6 0h2m3 0h1m10 0h1m5 0h1m41 0h1m2 0h1m3 0h1m13 0h2m5 0h2m1 0h1m2 0h1m11 0h1m3 0h1m3 0h1m5 0h1m9 0h2m8 0h1m4 0h1M28 145h1m1 0h1m12 0h1m4 0h1m6 0h1m12 0h1m21 0h1m4 0h1m16 0h1m3 0h1m3 0h1m5 0h1m3 0h1m5 0h1m5 0h2m4 0h1m6 0h1m8 0h1m2 0h1m7 0h1m2 0h1m15 0h1m4 0h1m24 0h1m36 0h1m2 0h1m1 0h1m7 0h1m5 0h1m2 0h1m2 0h1m2 0h1m3 0h1m22 0h1m2 0h1m8 0h2m3 0h2m3 0h1m10 0h1m19 0h1m15 0h2m11 0h1m3 0h1m25 0h1m3 0h1m6 0h2m6 0h1m7 0h1m4 0h1m4 0h1m4 0h1m2 0h1m11 0h1m4 0h1m2 0h1m4 0h1m5 0h1m1 0h1m2 0h1m20 0h1m25 0h1m4 0h1m3 0h1m4 0h2m17 0h1m1 0h1m2 0h1m8 0h1m6 0h3m1 0h1M21 146h1m16 0h2m6 0h1m16 0h1m2 0h1m5 0h1m2 0h1m9 0h1m26 0h1m6 0h1m6 0h1m4 0h1m26 0h1m1 0h1m6 0h1m2 0h1m11 0h1m5 0h2m12 0h1m4 0h1m2 0h1m10 0h1m4 0h2m2 0h1m12 0h1m4 0h1m5 0h1m2 0h1m1 0h1m12 0h1m18 0h1m10 0h1m2 0h1m1 0h1m1 0h1m27 0h1m4 0h1m11 0h1m10 0h1m2 0h1m2 0h1m11 0h1m5 0h1m3 0h1m4 0h1m6 0h1m14 0h3m2 0h2m7 0h1m3 0h1m1 0h1m4 0h1m8 0h1m2 0h1m2 0h1m2 0h1m26 0h1m3 0h1m2 0h1m3 0h1m3 0h1m6 0h2m3 0h1m13 0h1m1 0h1m14 0h1m6 0h1m4 0h1m3 0h1m15 0h2m10 0h1m16 0h1M28 147h1m4 0h1m8 0h1m3 0h1m6 0h1m1 0h1m1 0h1m2 0h1m2 0h1m2 0h1m15 0h1m4 0h1m5 0h1m2 0h1m4 0h2m12 0h1m10 0h1m2 0h1m9 0h1m5 0h1m1 0h1m16 0h1m27 0h1m11 0h1m2 0h1m15 0h1m4 0h1m5 0h1m18 0h1m2 0h1m15 0h1m9 0h1m2 0h1m17 0h1m1 0h1m17 0h1m4 0h1m8 0h1m5 0h1m7 0h2m4 0h1m26 0h1m5 0h1m23 0h1m5 0h1m1 0h1m8 0h1m7 0h1m2 0h1m25 0h1m16 0h1m3 0h3m1 0h1m8 0h1m2 0h1m9 0h1m11 0h1m8 0h1m17 0h1m2 0h1m1 0h1m11 0h1m9 0h2m11 0h1m2 0h1m2 0h1m8 0h1m3 0h1M26 148h2m3 0h1m3 0h4m9 0h1m11 0h1m4 0h1m4 0h1m11 0h1m5 0h1m11 0h1m5 0h1m2 0h1m2 0h1m10 0h1m24 0h1m4 0h1m1 0h1m11 0h1m35 0h1m1 0h1m11 0h1m7 0h1m1 0h1m3 0h1m20 0h2m8 0h1m2 0h1m12 0h1m12 0h1m5 0h1m7 0h1m1 0h1m7 0h1m13 0h1m3 0h1m18 0h1m1 0h1m2 0h1m10 0h1m4 0h1m2 0h1m3 0h1m23 0h1m5 0h1m6 0h1m8 0h2m3 0h1m2 0h1m1 0h1m2 0h1m13 0h1m11 0h1m7 0h1m10 0h2m4 0h1m2 0h1m2 0h1m4 0h1m10 0h2m1 0h1m8 0h1m6 0h3m3 0h1m19 0h1m1 0h1m15 0h1m16 0h1m15 0h1m5 0h1M24 149h2m1 0h1m3 0h1m7 0h2m3 0h2m6 0h1m4 0h2m7 0h1m31 0h1m10 0h1m1 0h1m9 0h1m19 0h1m5 0h1m20 0h1m1 0h2m19 0h1m10 0h1m2 0h1m1 0h1m14 0h1m5 0h1m1 0h1m2 0h1m2 0h1m36 0h1m14 0h1m1 0h1m6 0h1m5 0h1m2 0h1m8 0h1m2 0h1m3 0h2m12 0h1m10 0h1m1 0h2m30 0h2m2 0h2m34 0h1m12 0h2m3 0h2m4 0h1m18 0h2m15 0h1m7 0h1m2 0h2m7 0h1m6 0h1m15 0h1m6 0h1m1 0h1m2 0h1m1 0h1m1 0h1m1 0h3m17 0h1m15 0h1m1 0h2m29 0h1m4 0h1M29 150h1m2 0h1m2 0h1m12 0h1m2 0h1m7 0h1m21 0h2m8 0h1m14 0h1m14 0h1m3 0h1m1 0h1m24 0h1m5 0h1m7 0h1m4 0h1m19 0h1m1 0h1m8 0h1m6 0h1m4 0h1m2 0h1m4 0h1m2 0h1m9 0h1m20 0h1m7 0h1m21 0h1m12 0h1m10 0h1m1 0h1m3 0h1m19 0h2m14 0h1m17 0h3m5 0h1m3 0h1m1 0h2m14 0h1m1 0h1m2 0h1m3 0h1m1 0h1m8 0h1m3 0h2m2 0h1m25 0h1m20 0h2m3 0h1m3 0h1m7 0h2m1 0h1m4 0h1m8 0h1m1 0h1m6 0h1m2 0h1m1 0h1m5 0h1m17 0h2m10 0h1m20 0h1m1 0h1m3 0h2m11 0h1m7 0h1m4 0h1m2 0h1M28 151h1m1 0h1m2 0h1m1 0h1m1 0h1m14 0h1m13 0h1m8 0h1m2 0h1m10 0h1m2 0h1m14 0h1m16 0h1m12 0h2m16 0h1m2 0h1m2 0h1m8 0h1m2 0h1m1 0h2m3 0h1m43 0h1m6 0h1m28 0h2m16 0h1m10 0h1m1 0h1m6 0h1m20 0h1m18 0h1m4 0h1m11 0h1m8 0h1m9 0h1m4 0h1m4 0h1m11 0h1m8 0h1m4 0h1m14 0h1m5 0h1m2 0h1m12 0h1m9 0h2m1 0h1m1 0h1m9 0h2m3 0h1m12 0h1m8 0h1m15 0h1m43 0h1m3 0h1m3 0h1m5 0h1m2 0h1m5 0h1m6 0h1m18 0h1m1 0h1m3 0h1M23 152h1m10 0h1m2 0h1m12 0h1m2 0h1m5 0h1m2 0h1m8 0h1m7 0h1m7 0h1m5 0h1m9 0h1m3 0h1m11 0h1m19 0h3m4 0h1m4 0h2m5 0h1m4 0h1m8 0h1m4 0h1m34 0h1m12 0h4m18 0h1m3 0h1m3 0h1m16 0h1m39 0h2m5 0h1m1 0h1m4 0h1m15 0h1m1 0h1m3 0h1m3 0h1m3 0h1m1 0h1m10 0h1m1 0h1m12 0h1m3 0h1m9 0h1m10 0h1m36 0h1m4 0h1m1 0h1m4 0h1m18 0h1m1 0h2m1 0h1m3 0h1m9 0h1m2 0h1m1 0h1m10 0h1m13 0h1m4 0h1m4 0h1m32 0h1m7 0h2m5 0h1m9 0h1M28 153h1m20 0h1m31 0h2m3 0h1m5 0h1m3 0h1m7 0h1m6 0h1m8 0h1m7 0h1m6 0h1m8 0h1m3 0h1m2 0h1m3 0h1m1 0h1m1 0h1m4 0h1m16 0h1m13 0h1m5 0h1m4 0h1m11 0h1m4 0h2m3 0h1m11 0h1m2 0h1m8 0h1m3 0h1m2 0h1m11 0h1m2 0h1m1 0h2m11 0h1m6 0h1m17 0h1m4 0h1m4 0h1m14 0h1m1 0h1m4 0h2m3 0h1m6 0h2m2 0h1m11 0h1m5 0h1m4 0h1m1 0h1m4 0h1m1 0h1m5 0h1m3 0h1m2 0h1m19 0h1m3 0h1m7 0h1m5 0h1m16 0h1m26 0h2m2 0h1m11 0h1m3 0h1m8 0h1m2 0h1m6 0h2m2 0h1m6 0h1m24 0h1m3 0h1m5 0h1m6 0h2m4 0h2m1 0h1m23 0h1M58 154h1m13 0h1m10 0h1m27 0h2m11 0h1m1 0h1m3 0h1m18 0h1m13 0h1m2 0h1m3 0h1m4 0h3m15 0h1m5 0h1m45 0h1m2 0h1m17 0h1m6 0h1m4 0h1m5 0h1m36 0h1m22 0h1m15 0h1m9 0h1m1 0h1m5 0h1m15 0h1m21 0h1m3 0h1m22 0h1m17 0h1m2 0h2m16 0h1m1 0h1m15 0h1m4 0h2m2 0h1m17 0h1m11 0h1m6 0h1m12 0h1m22 0h1m7 0h1m9 0h1m1 0h1m2 0h1m5 0h1M27 155h1m2 0h1m4 0h1m2 0h1m20 0h1m6 0h1m11 0h1m9 0h1m8 0h1m10 0h2m6 0h2m21 0h1m13 0h1m5 0h1m6 0h1m3 0h1m2 0h1m2 0h1m7 0h1m24 0h1m2 0h1m2 0h1m6 0h1m3 0h1m3 0h1m3 0h1m8 0h1m1 0h1m12 0h1m3 0h1m26 0h1m11 0h1m8 0h1m2 0h1m19 0h1m6 0h2m18 0h2m1 0h1m16 0h1m28 0h1m14 0h1m1 0h1m1 0h1m1 0h1m8 0h1m14 0h2m13 0h1m11 0h1m10 0h1m16 0h1m23 0h1m19 0h1m8 0h1m17 0h1m12 0h1m7 0h2m2 0h1m8 0h1M20 156h1m7 0h1m5 0h1m2 0h1m2 0h1m3 0h1m9 0h1m9 0h1m2 0h1m46 0h1m9 0h1m12 0h1m3 0h1m17 0h1m3 0h1m2 0h1m1 0h1m4 0h1m16 0h1m21 0h1m4 0h1m24 0h1m8 0h2m8 0h1m1 0h1m5 0h1m38 0h1m6 0h1m7 0h1m12 0h1m43 0h1m18 0h2m1 0h2m10 0h1m1 0h2m7 0h1m16 0h1m16 0h1m2 0h1m1 0h1m2 0h1m1 0h1m4 0h1m1 0h1m8 0h1m5 0h1m5 0h1m5 0h1m5 0h1m9 0h1m8 0h1m20 0h1m7 0h1m3 0h1m3 0h1m31 0h1m15 0h1m1 0h1M32 157h1m2 0h1m6 0h1m2 0h1m2 0h1m10 0h1m6 0h3m1 0h1m13 0h1m8 0h1m4 0h2m8 0h1m2 0h1m12 0h1m13 0h1m3 0h1m4 0h1m1 0h1m1 0h1m2 0h1m4 0h1m14 0h1m3 0h1m3 0h1m13 0h1m3 0h2m7 0h1m17 0h1m2 0h2m16 0h2m6 0h1m4 0h2m12 0h1m31 0h1m3 0h1m5 0h1m2 0h1m23 0h1m3 0h1m11 0h1m4 0h1m2 0h1m12 0h1m3 0h1m9 0h1m4 0h1m6 0h1m25 0h1m5 0h1m3 0h1m18 0h2m1 0h1m3 0h1m6 0h1m7 0h1m9 0h3m1 0h1m7 0h1m20 0h1m3 0h1m14 0h1m16 0h1m6 0h1m3 0h1m3 0h1m38 0h1M36 158h1m12 0h1m6 0h1m6 0h1m6 0h1m17 0h1m4 0h2m13 0h2m12 0h1m8 0h1m3 0h1m1 0h1m4 0h1m13 0h1m14 0h1m5 0h1m2 0h1m18 0h1m4 0h1m5 0h1m9 0h1m8 0h1m6 0h1m11 0h1m6 0h1m9 0h1m6 0h1m10 0h1m1 0h1m3 0h1m6 0h1m11 0h1m6 0h1m5 0h1m2 0h1m8 0h1m6 0h1m26 0h1m20 0h1m1 0h1m11 0h1m4 0h1m17 0h1m6 0h1m9 0h1m3 0h1m12 0h1m4 0h1m5 0h1m7 0h2m1 0h1m10 0h3m18 0h1m9 0h1m1 0h1m19 0h1m2 0h2m9 0h1m1 0h1m13 0h1m2 0h1m2 0h1m6 0h1m3 0h1m19 0h1M22 159h1m8 0h1m4 0h1m12 0h1m9 0h1m10 0h1m2 0h2m17 0h1m8 0h1m8 0h1m1 0h1m11 0h1m1 0h1m2 0h2m11 0h1m18 0h1m1 0h1m5 0h1m5 0h1m14 0h1m4 0h1m1 0h1m10 0h1m20 0h1m15 0h1m5 0h1m8 0h1m2 0h1m1 0h1m9 0h1m11 0h1m1 0h1m10 0h1m1 0h1m2 0h1m10 0h1m4 0h1m1 0h1m15 0h1m5 0h1m3 0h1m4 0h1m2 0h1m5 0h1m6 0h1m2 0h2m11 0h1m1 0h1m8 0h1m8 0h3m1 0h1m5 0h1m10 0h2m9 0h1m14 0h1m8 0h1m1 0h1m22 0h1m1 0h2m7 0h1m6 0h1m14 0h1m4 0h1m3 0h1m8 0h1m2 0h1m1 0h2m7 0h1m8 0h1m4 0h2m4 0h1m3 0h1m3 0h1m7 0h1m1 0h1m10 0h1m9 0h1M28 160h1m11 0h1m2 0h1m11 0h1m11 0h1m9 0h1m8 0h2m5 0h2m21 0h1m3 0h1m3 0h1m7 0h1m4 0h3m1 0h1m7 0h1m6 0h1m12 0h1m8 0h1m30 0h1m6 0h1m2 0h1m20 0h1m4 0h1m5 0h2m4 0h1m2 0h1m8 0h1m18 0h1m12 0h1m1 0h1m5 0h1m1 0h2m21 0h1m3 0h1m4 0h1m6 0h1m10 0h1m1 0h1m4 0h1m15 0h1m11 0h1m6 0h1m21 0h1m8 0h1m4 0h2m5 0h1m5 0h1m4 0h1m3 0h2m19 0h1m2 0h1m5 0h1m1 0h1m13 0h1m2 0h2m3 0h1m34 0h1m23 0h1m1 0h1m6 0h2m2 0h1m10 0h1m5 0h1M20 161h1m11 0h1m6 0h1m3 0h1m2 0h1m20 0h1m3 0h1m7 0h1m8 0h1m12 0h2m10 0h1m1 0h1m7 0h1m19 0h1m24 0h1m1 0h1m19 0h1m6 0h1m2 0h1m1 0h1m2 0h1m15 0h1m19 0h1m7 0h1m4 0h1m13 0h1m12 0h1m21 0h1m7 0h1m11 0h2m8 0h1m12 0h1m10 0h1m11 0h1m13 0h1m15 0h2m7 0h1m4 0h1m4 0h1m3 0h1m1 0h1m5 0h1m19 0h2m1 0h1m2 0h1m5 0h1m17 0h1m5 0h1m8 0h1m8 0h1m11 0h1m7 0h2m7 0h1m8 0h1m12 0h1m1 0h1m2 0h1m9 0h1m12 0h1m11 0h1M25 162h1m13 0h1m32 0h1m12 0h1m9 0h4m4 0h1m1 0h2m18 0h1m10 0h1m22 0h1m14 0h1m1 0h2m4 0h1m8 0h1m28 0h1m7 0h1m4 0h1m15 0h1m2 0h2m4 0h1m7 0h1m2 0h1m1 0h1m3 0h1m1 0h1m11 0h1m7 0h1m11 0h1m5 0h1m9 0h2m6 0h1m1 0h1m8 0h1m5 0h1m3 0h1m1 0h1m1 0h1m4 0h1m5 0h1m4 0h1m9 0h1m18 0h1m4 0h1m30 0h1m26 0h1m2 0h1m32 0h1m9 0h1m4 0h1m15 0h1m11 0h1m3 0h1m6 0h1m1 0h1m5 0h1m15 0h1m2 0h1M25 163h1m9 0h1m7 0h1m1 0h1m1 0h1m10 0h1m11 0h1m14 0h1m12 0h1m11 0h1m3 0h1m3 0h2m11 0h1m26 0h1m2 0h1m3 0h2m2 0h1m11 0h1m6 0h1m12 0h1m10 0h1m14 0h1m6 0h2m3 0h2m1 0h1m26 0h1m15 0h1m39 0h1m1 0h1m3 0h1m9 0h1m9 0h1m17 0h1m20 0h1m6 0h1m17 0h1m26 0h1m11 0h1m5 0h2m17 0h1m11 0h1m4 0h1m15 0h1m9 0h1m4 0h1m5 0h1m7 0h1m1 0h1m2 0h1m8 0h1m5 0h1m28 0h3m1 0h1M28 164h1m15 0h2m13 0h1m9 0h1m2 0h1m6 0h1m2 0h1m14 0h1m10 0h1m1 0h1m1 0h1m12 0h1m12 0h2m5 0h1m12 0h1m9 0h1m1 0h1m8 0h1m8 0h2m5 0h1m5 0h1m9 0h1m12 0h1m2 0h1m2 0h1m1 0h1m19 0h1m20 0h1m3 0h2m12 0h1m6 0h1m5 0h2m3 0h1m63 0h1m5 0h1m25 0h1m10 0h1m9 0h2m1 0h2m19 0h1m10 0h1m8 0h1m9 0h1m27 0h1m2 0h1m7 0h1m4 0h2m9 0h1m13 0h1m5 0h1m1 0h1m12 0h1m1 0h1m10 0h1m7 0h1m12 0h1m9 0h1M54 165h1m11 0h1m8 0h2m7 0h1m19 0h1m8 0h1m1 0h1m3 0h1m3 0h1m4 0h1m5 0h1m1 0h2m7 0h1m27 0h2m10 0h1m25 0h1m4 0h1m1 0h1m2 0h1m3 0h2m11 0h2m23 0h1m6 0h1m19 0h1m18 0h1m12 0h1m1 0h1m6 0h1m7 0h2m21 0h1m4 0h1m9 0h1m25 0h1m24 0h1m4 0h1m3 0h1m2 0h2m6 0h1m19 0h1m1 0h1m31 0h1m1 0h1m6 0h1m7 0h1m16 0h1m33 0h1m6 0h1m8 0h1m6 0h1M26 166h1m2 0h1m36 0h1m24 0h1m15 0h1m16 0h1m6 0h1m10 0h1m1 0h1m10 0h1m7 0h1m54 0h2m3 0h1m3 0h1m21 0h1m9 0h1m30 0h1m19 0h1m1 0h1m14 0h1m2 0h1m2 0h1m4 0h1m5 0h1m13 0h1m16 0h1m3 0h1m2 0h1m10 0h1m7 0h1m4 0h1m1 0h2m12 0h1m14 0h1m22 0h2m8 0h1m8 0h1m4 0h1m4 0h2m5 0h1m11 0h1m8 0h2m18 0h1m3 0h1m2 0h1m21 0h1m2 0h1m2 0h1m6 0h1m7 0h1m7 0h1m1 0h1m8 0h1m9 0h2M22 167h1m2 0h1m8 0h1m3 0h2m4 0h1m25 0h1m12 0h1m6 0h1m1 0h1m21 0h1m7 0h1m5 0h1m2 0h1m14 0h2m15 0h1m12 0h1m13 0h1m3 0h1m2 0h1m3 0h1m3 0h1m16 0h1m3 0h1m7 0h1m8 0h2m13 0h1m15 0h2m12 0h1m20 0h1m4 0h1m25 0h1m11 0h1m18 0h2m19 0h1m13 0h1m10 0h1m20 0h1m12 0h1m3 0h1m14 0h1m4 0h1m2 0h2m3 0h1m11 0h1m48 0h1m3 0h1m9 0h1m21 0h1m3 0h1m6 0h2m4 0h1m7 0h1M30 168h1m4 0h2m33 0h1m8 0h1m21 0h1m8 0h1m10 0h2m21 0h1m6 0h1m3 0h1m34 0h1m21 0h1m4 0h1m23 0h1m28 0h1m14 0h1m44 0h1m6 0h1m9 0h2m5 0h1m28 0h1m12 0h1m4 0h1m4 0h1m5 0h1m27 0h1m29 0h1m29 0h1m13 0h1m11 0h1m14 0h1m22 0h1m6 0h1m11 0h1m26 0h1m1 0h1m4 0h1M42 169h1m1 0h1m5 0h1m28 0h1m13 0h1m11 0h1m2 0h1m24 0h1m6 0h2m20 0h1m5 0h1m9 0h1m6 0h1m25 0h1m7 0h1m33 0h1m10 0h1m16 0h1m1 0h1m1 0h1m3 0h2m11 0h1m26 0h1m4 0h1m21 0h1m2 0h1m20 0h1m4 0h1m6 0h1m5 0h1m15 0h1m13 0h1m3 0h1m9 0h1m1 0h1m11 0h1m12 0h2m11 0h1m35 0h1m5 0h1m3 0h1m11 0h1m1 0h1m4 0h1m15 0h1m12 0h1m4 0h1m8 0h1m1 0h1m6 0h2m1 0h1m3 0h1M25 170h1m32 0h1m4 0h1m95 0h1m68 0h1m3 0h1m2 0h1m15 0h1m12 0h1m4 0h1m13 0h1m5 0h1m5 0h1m7 0h1m10 0h1m19 0h1m6 0h1m24 0h1m8 0h1m22 0h1m29 0h1m7 0h1m7 0h1m3 0h1m24 0h1m28 0h1m18 0h1m2 0h1m26 0h1m45 0h1M52 171h1m8 0h1m2 0h1m7 0h1m4 0h1m26 0h1m7 0h1m64 0h1m7 0h1m38 0h1m1 0h1m17 0h2m8 0h1m4 0h1m17 0h1m7 0h1m59 0h1m16 0h1m44 0h1m6 0h1m105 0h1m43 0h2m8 0h1m39 0h1M32 172h1m9 0h1m67 0h1m15 0h1m18 0h1m18 0h1m19 0h1m11 0h1m4 0h1m13 0h2m31 0h1m135 0h1m6 0h1m7 0h1m6 0h1m42 0h1m26 0h1m7 0h2m16 0h1m9 0h1m9 0h1m1 0h1m48 0h1m3 0h1m31 0h1M26 173h1m35 0h1m34 0h1m49 0h1m30 0h1m1 0h1m9 0h1m5 0h1m5 0h2m11 0h1m2 0h1m7 0h1m21 0h1m7 0h1m53 0h1m14 0h1m22 0h1m13 0h1m16 0h1m58 0h1m57 0h1m4 0h1m29 0h1m8 0h1M47 174h1m26 0h1m45 0h1m37 0h1m6 0h1m22 0h1m97 0h1m14 0h1m70 0h1m12 0h1m115 0h1m4 0h1m33 0h2M39 175h1m35 0h1m8 0h1m51 0h1m9 0h1m30 0h1m9 0h1m115 0h1m44 0h1m29 0h1m13 0h1m219 0h1M90 176h1m6 0h1m75 0h1m35 0h1m23 0h1m11 0h1m73 0h1m21 0h1m165 0h1m2 0h1m13 0h1m50 0h1M86 177h1m165 0h1m98 0h1m50 0h1m6 0h1m40 0h1m41 0h1m120 0h1M30 178h1m234 0h1m210 0h1m55 0h1m51 0h1"/><path stroke="rgb(0,0,81)" d="M25 80h2m2 0h1m4 0h1m15 0h1m2 0h2m26 0h1m3 0h1m5 0h1m19 0h1m13 0h1m4 0h1m5 0h2m23 0h1m17 0h1m4 0h1m53 0h1m5 0h1m8 0h1m1 0h1m8 0h1m3 0h1m3 0h1m12 0h1m5 0h1m1 0h1m8 0h1m14 0h1m4 0h1m2 0h1m2 0h1m18 0h1m2 0h1m15 0h1m6 0h1m2 0h1m7 0h1m17 0h1m5 0h1m8 0h1m4 0h1m3 0h1m1 0h1m15 0h1m22 0h1m5 0h1m5 0h1m8 0h1m40 0h2m17 0h1m4 0h1m7 0h1m10 0h1m3 0h1m6 0h1m5 0h1m3 0h1m11 0h1m5 0h1M40 81h1m15 0h1m1 0h1m3 0h1m8 0h1m2 0h1m7 0h1m19 0h1m8 0h1m8 0h1m7 0h2m3 0h1m5 0h1m2 0h1m2 0h1m1 0h1m18 0h1m5 0h1m3 0h1m4 0h1m1 0h1m3 0h1m15 0h1m8 0h1m20 0h1m5 0h1m2 0h1m3 0h1m29 0h1m1 0h1m19 0h1m4 0h1m13 0h1m4 0h2m4 0h1m4 0h1m5 0h1m5 0h1m12 0h1m7 0h1m3 0h1m5 0h1m5 0h1m12 0h1m1 0h1m3 0h1m10 0h1m4 0h1m1 0h1m5 0h1m4 0h1m9 0h2m4 0h1m6 0h1m11 0h1m11 0h1m8 0h1m5 0h1m6 0h1m3 0h1m18 0h1m11 0h1m4 0h1m7 0h1m7 0h1m4 0h1m14 0h1m4 0h1m9 0h1m4 0h1m14 0h1m6 0h1M20 82h1m1 0h1m5 0h2m2 0h1m3 0h1m5 0h1m7 0h1m16 0h1m4 0h2m21 0h1m2 0h1m19 0h1m16 0h1m8 0h1m10 0h1m8 0h1m14 0h2m4 0h1m4 0h1m8 0h1m4 0h1m6 0h1m11 0h1m1 0h1m8 0h1m12 0h1m14 0h1m8 0h1m15 0h1m3 0h2m4 0h2m9 0h1m7 0h1m10 0h1m4 0h1m5 0h3m13 0h2m7 0h1m5 0h1m7 0h1m35 0h1m8 0h1m4 0h1m8 0h1m12 0h1m2 0h2m19 0h1m5 0h1m6 0h1m1 0h1m5 0h2m5 0h1m11 0h1m6 0h1m1 0h1m5 0h1m6 0h1m4 0h1m12 0h1m2 0h1m4 0h1m13 0h1m37 0h1m3 0h1M23 83h1m3 0h1m7 0h1m1 0h1m10 0h1m21 0h1m1 0h1m9 0h1m1 0h2m8 0h2m8 0h1m20 0h2m5 0h1m6 0h2m13 0h1m14 0h1m1 0h1m10 0h1m17 0h1m6 0h1m24 0h1m13 0h1m6 0h1m2 0h1m14 0h2m5 0h1m12 0h2m8 0h1m17 0h1m9 0h1m1 0h1m6 0h1m4 0h1m39 0h2m5 0h1m6 0h1m7 0h1m15 0h1m14 0h1m13 0h1m3 0h1m1 0h1m14 0h1m11 0h1m2 0h1m1 0h1m7 0h1m4 0h1m6 0h1m4 0h1m1 0h1m7 0h1m1 0h1m12 0h1m12 0h1m14 0h1m9 0h1m3 0h1m2 0h1m8 0h1m14 0h1m4 0h1M30 84h2m1 0h1m17 0h1m1 0h1m14 0h1m1 0h1m3 0h1m4 0h1m4 0h1m4 0h1m10 0h1m29 0h1m18 0h1m3 0h1m1 0h1m9 0h1m4 0h2m2 0h1m9 0h1m23 0h1m8 0h1m3 0h1m3 0h1m5 0h1m2 0h1m2 0h1m7 0h1m6 0h2m20 0h1m5 0h1m2 0h1m8 0h1m2 0h1m10 0h1m5 0h1m12 0h1m2 0h1m2 0h1m12 0h1m6 0h1m4 0h1m25 0h1m16 0h1m10 0h1m19 0h1m2 0h2m12 0h1m2 0h1m21 0h1m5 0h1m5 0h2m4 0h1m12 0h1m3 0h1m1 0h1m1 0h1m11 0h1m12 0h1m6 0h1m2 0h1m2 0h1m1 0h1m5 0h1m6 0h1m26 0h2m19 0h1M32 85h1m8 0h1m1 0h1m3 0h1m18 0h2m4 0h1m13 0h1m14 0h1m10 0h1m2 0h1m6 0h1m1 0h1m10 0h1m12 0h1m15 0h1m3 0h1m12 0h1m6 0h1m21 0h1m9 0h2m1 0h2m6 0h1m2 0h1m3 0h1m46 0h3m4 0h1m1 0h1m5 0h1m4 0h1m3 0h1m2 0h1m4 0h1m17 0h1m11 0h1m6 0h1m2 0h2m19 0h3m3 0h1m26 0h1m15 0h1m38 0h1m24 0h1m5 0h1m7 0h1m3 0h1m1 0h1m1 0h1m12 0h2m7 0h4m14 0h1m35 0h2m6 0h1m5 0h1m6 0h1m5 0h2M33 86h1m10 0h1m11 0h1m9 0h1m3 0h1m22 0h1m18 0h1m9 0h1m11 0h1m2 0h1m15 0h1m1 0h1m8 0h1m12 0h1m14 0h1m5 0h1m4 0h1m25 0h1m15 0h1m10 0h1m4 0h1m22 0h1m15 0h1m13 0h2m6 0h2m2 0h1m2 0h1m5 0h1m4 0h1m24 0h1m6 0h1m4 0h1m2 0h1m6 0h1m16 0h1m3 0h1m6 0h1m11 0h1m10 0h1m1 0h1m18 0h1m19 0h1m5 0h1m12 0h1m48 0h1m6 0h1m20 0h1m1 0h4m35 0h1M23 87h1m7 0h2m6 0h1m10 0h1m15 0h1m1 0h1m7 0h1m3 0h1m2 0h1m12 0h1m10 0h1m22 0h1m3 0h1m3 0h1m6 0h1m4 0h2m13 0h1m2 0h1m8 0h1m1 0h1m12 0h1m27 0h1m5 0h1m4 0h1m10 0h1m3 0h1m7 0h1m25 0h1m2 0h1m23 0h1m3 0h1m1 0h1m1 0h3m1 0h1m6 0h2m10 0h1m1 0h1m10 0h1m2 0h1m4 0h1m4 0h2m13 0h1m2 0h1m19 0h1m5 0h2m11 0h1m14 0h1m9 0h1m9 0h1m4 0h1m7 0h1m5 0h1m5 0h2m12 0h1m14 0h1m8 0h1m51 0h1m27 0h1m13 0h1M32 88h2m2 0h1m8 0h1m4 0h1m5 0h1m15 0h1m4 0h1m4 0h1m14 0h1m3 0h1m7 0h1m4 0h1m22 0h1m34 0h1m18 0h1m3 0h2m29 0h1m9 0h1m3 0h2m24 0h1m26 0h1m19 0h1m9 0h1m2 0h1m9 0h1m18 0h1m2 0h1m15 0h3m7 0h1m19 0h1m6 0h1m1 0h2m2 0h1m18 0h1m1 0h1m17 0h1m30 0h1m22 0h1m3 0h1m18 0h1m8 0h2m4 0h1m3 0h1m14 0h1m11 0h2m19 0h2M38 89h1m6 0h1m7 0h1m13 0h1m13 0h1m1 0h1m2 0h1m20 0h1m6 0h1m22 0h2m3 0h1m7 0h1m17 0h1m3 0h1m3 0h1m10 0h1m25 0h1m8 0h1m22 0h1m9 0h1m4 0h1m5 0h1m15 0h1m22 0h1m10 0h1m9 0h1m2 0h1m2 0h1m8 0h2m11 0h1m3 0h1m5 0h1m8 0h1m5 0h1m15 0h1m1 0h1m16 0h1m9 0h1m18 0h1m16 0h1m5 0h1m6 0h1m17 0h1m16 0h1m4 0h1m24 0h1m1 0h1m5 0h1m19 0h1m2 0h1m5 0h1m14 0h1m7 0h1m8 0h1m6 0h1m1 0h1M27 90h1m3 0h1m3 0h1m43 0h1m3 0h1m7 0h1m23 0h1m2 0h1m1 0h1m5 0h1m3 0h1m2 0h1m9 0h1m8 0h1m7 0h1m2 0h1m1 0h1m18 0h1m7 0h1m5 0h1m9 0h1m4 0h1m4 0h1m5 0h1m5 0h1m15 0h1m5 0h1m3 0h1m2 0h1m8 0h1m5 0h1m10 0h1m12 0h1m7 0h1m1 0h1m12 0h1m1 0h1m11 0h1m1 0h1m2 0h1m6 0h1m13 0h1m12 0h1m4 0h1m1 0h1m12 0h1m10 0h1m9 0h1m5 0h1m1 0h1m8 0h1m1 0h1m5 0h1m23 0h1m4 0h1m7 0h1m2 0h1m2 0h1m1 0h1m1 0h1m1 0h1m1 0h1m2 0h1m2 0h1m11 0h1m8 0h1m2 0h1m3 0h1m2 0h1m8 0h1m4 0h1m2 0h1m20 0h1m12 0h1m2 0h1m6 0h2m1 0h1m16 0h1m7 0h1M26 91h1m20 0h1m17 0h1m8 0h1m2 0h2m2 0h1m1 0h1m12 0h1m6 0h1m20 0h1m13 0h1m15 0h2m1 0h1m5 0h1m5 0h1m8 0h2m8 0h1m1 0h1m20 0h1m3 0h1m6 0h1m15 0h1m2 0h1m4 0h1m2 0h1m5 0h1m14 0h1m4 0h1m5 0h1m4 0h1m2 0h1m6 0h1m29 0h1m14 0h1m4 0h1m12 0h1m20 0h2m5 0h1m11 0h1m7 0h1m1 0h1m22 0h1m12 0h1m8 0h1m42 0h1m5 0h1m18 0h1m21 0h1m20 0h1m4 0h1m8 0h1m4 0h1m7 0h1m14 0h1M32 92h1m20 0h1m15 0h1m13 0h1m2 0h1m17 0h1m11 0h1m8 0h1m5 0h1m3 0h1m3 0h1m10 0h1m11 0h1m14 0h1m29 0h1m5 0h1m1 0h1m13 0h1m4 0h1m4 0h1m11 0h1m42 0h1m2 0h1m21 0h1m15 0h1m2 0h2m5 0h1m1 0h1m21 0h1m12 0h1m10 0h1m2 0h1m13 0h1m4 0h1m37 0h1m4 0h1m7 0h1m5 0h1m8 0h1m8 0h1m13 0h1m35 0h2m3 0h2m5 0h1m10 0h1m19 0h1m2 0h1m2 0h1m19 0h1m3 0h3M21 93h1m4 0h2m4 0h1m16 0h1m18 0h1m4 0h1m6 0h1m2 0h1m38 0h1m2 0h1m5 0h1m13 0h1m2 0h1m1 0h1m3 0h1m7 0h1m6 0h1m1 0h1m2 0h2m1 0h1m1 0h1m12 0h1m9 0h1m6 0h1m28 0h1m1 0h2m5 0h1m22 0h1m8 0h1m1 0h1m4 0h1m30 0h1m1 0h1m2 0h1m34 0h1m6 0h1m5 0h1m2 0h1m4 0h2m11 0h1m2 0h1m7 0h1m4 0h1m8 0h1m23 0h1m2 0h1m1 0h1m22 0h1m13 0h1m2 0h1m11 0h1m1 0h1m6 0h1m2 0h1m4 0h1m6 0h1m2 0h1m2 0h1m4 0h1m14 0h1m14 0h3m1 0h1m21 0h1m13 0h1m7 0h1m5 0h2M31 94h1m2 0h1m10 0h1m5 0h1m4 0h1m8 0h1m3 0h1m15 0h1m2 0h1m2 0h1m3 0h1m21 0h1m21 0h1m3 0h2m1 0h1m1 0h1m8 0h1m1 0h2m5 0h1m2 0h1m20 0h1m5 0h1m16 0h1m12 0h1m5 0h1m3 0h1m8 0h1m7 0h1m8 0h1m23 0h1m11 0h1m8 0h1m21 0h1m44 0h1m2 0h1m2 0h1m17 0h1m3 0h1m10 0h1m9 0h1m8 0h1m6 0h1m16 0h2m9 0h2m18 0h1m7 0h1m7 0h1m2 0h1m22 0h1m15 0h1m9 0h1m7 0h1m7 0h1m6 0h1m3 0h1m16 0h2m1 0h1m4 0h1m5 0h1M20 95h1m4 0h1m14 0h1m2 0h1m14 0h1m7 0h1m15 0h1m5 0h1m13 0h1m24 0h1m9 0h1m3 0h1m11 0h1m19 0h1m8 0h1m7 0h1m4 0h1m2 0h1m1 0h2m3 0h1m3 0h1m8 0h2m9 0h1m9 0h1m5 0h1m12 0h1m6 0h2m3 0h2m19 0h1m9 0h1m22 0h1m1 0h1m15 0h1m3 0h1m4 0h1m3 0h2m12 0h1m7 0h1m9 0h1m3 0h1m17 0h2m1 0h1m4 0h2m52 0h1m10 0h1m8 0h1m6 0h1m19 0h1m4 0h1m22 0h1m4 0h1m11 0h1m4 0h1m21 0h1m10 0h1M33 96h1m17 0h1m5 0h1m1 0h1m1 0h1m11 0h1m9 0h2m4 0h1m1 0h1m23 0h1m5 0h1m3 0h1m8 0h1m5 0h1m7 0h1m1 0h1m1 0h1m56 0h2m6 0h1m2 0h1m3 0h1m14 0h1m1 0h1m11 0h3m4 0h2m34 0h1m3 0h1m16 0h1m19 0h1m2 0h1m15 0h1m8 0h1m2 0h1m15 0h1m3 0h1m22 0h1m8 0h1m5 0h1m3 0h1m14 0h1m4 0h1m9 0h1m16 0h1m8 0h1m10 0h1m8 0h1m38 0h1m4 0h1m26 0h1m4 0h1m2 0h1m1 0h1m10 0h1m11 0h1m5 0h1M24 97h1m17 0h1m9 0h2m7 0h1m3 0h1m2 0h1m23 0h1m14 0h2m15 0h2m6 0h1m6 0h1m9 0h1m7 0h1m11 0h1m45 0h1m14 0h1m5 0h2m3 0h1m2 0h1m12 0h1m3 0h1m9 0h1m8 0h1m17 0h1m9 0h1m8 0h1m10 0h2m10 0h1m12 0h1m11 0h1m7 0h1m12 0h1m22 0h1m1 0h1m17 0h1m10 0h1m6 0h1m3 0h1m1 0h1m7 0h1m4 0h1m8 0h2m27 0h1m17 0h2m19 0h1m2 0h1m18 0h1m6 0h1m8 0h1m2 0h1m2 0h1m9 0h2m1 0h1m9 0h1m1 0h1m1 0h1M20 98h1m37 0h1m4 0h1m28 0h1m6 0h1m18 0h1m14 0h1m7 0h1m43 0h1m14 0h1m3 0h1m1 0h1m1 0h1m3 0h1m8 0h1m6 0h1m2 0h1m17 0h3m9 0h1m1 0h1m1 0h1m7 0h1m36 0h1m5 0h1m10 0h2m16 0h1m4 0h1m1 0h1m9 0h1m45 0h1m10 0h1m8 0h1m3 0h1m6 0h1m3 0h1m4 0h1m5 0h2m4 0h1m2 0h1m9 0h1m21 0h1m4 0h1m14 0h1m34 0h1m2 0h1m3 0h1m10 0h1m5 0h2m1 0h1m4 0h2m25 0h1m4 0h2M21 99h1m10 0h2m48 0h1m1 0h1m10 0h2m14 0h1m26 0h3m30 0h1m6 0h1m6 0h2m31 0h2m1 0h1m11 0h1m15 0h1m19 0h1m1 0h1m4 0h1m2 0h1m1 0h1m19 0h1m19 0h1m3 0h1m1 0h1m7 0h1m12 0h1m3 0h1m2 0h1m1 0h2m8 0h1m2 0h1m11 0h1m5 0h1m13 0h1m13 0h1m26 0h1m8 0h3m5 0h1m7 0h1m32 0h1m11 0h1m3 0h1m4 0h1m7 0h1m12 0h2m20 0h1m3 0h1m11 0h1m2 0h1m1 0h2m9 0h1m3 0h1m14 0h2M33 100h1m1 0h1m6 0h1m1 0h1m4 0h1m11 0h1m10 0h1m14 0h1m4 0h1m7 0h1m20 0h1m8 0h1m3 0h1m16 0h1m24 0h1m14 0h2m10 0h1m4 0h1m9 0h1m4 0h1m11 0h1m9 0h1m10 0h1m5 0h1m17 0h1m2 0h1m5 0h1m3 0h1m1 0h1m6 0h2m8 0h2m3 0h1m7 0h1m4 0h1m5 0h1m3 0h1m7 0h1m7 0h1m4 0h1m14 0h1m1 0h1m3 0h1m11 0h1m2 0h1m16 0h1m2 0h1m3 0h1m13 0h1m28 0h1m2 0h1m2 0h1m42 0h1m4 0h1m9 0h1m9 0h1m12 0h1m1 0h1m2 0h1m3 0h1m1 0h1m7 0h1m12 0h1m1 0h1m4 0h1m7 0h1m13 0h1M27 101h1m1 0h1m16 0h1m11 0h2m17 0h1m1 0h1m4 0h1m13 0h1m1 0h1m4 0h1m38 0h1m9 0h1m15 0h1m5 0h1m11 0h1m1 0h1m16 0h1m22 0h1m6 0h1m6 0h1m18 0h1m8 0h1m4 0h1m1 0h2m6 0h1m7 0h1m4 0h1m14 0h1m40 0h1m5 0h1m16 0h2m5 0h1m5 0h1m16 0h1m5 0h1m9 0h1m1 0h1m3 0h1m10 0h1m18 0h2m6 0h1m5 0h1m15 0h1m4 0h1m2 0h1m6 0h1m3 0h1m8 0h3m8 0h1m9 0h1m12 0h1m12 0h1m5 0h1m1 0h1m23 0h1m1 0h1m6 0h1M22 102h1m19 0h1m9 0h1m16 0h1m4 0h1m2 0h1m2 0h2m2 0h1m4 0h1m17 0h1m16 0h2m3 0h1m26 0h1m12 0h2m3 0h1m6 0h2m10 0h2m9 0h1m1 0h1m8 0h1m2 0h1m4 0h1m19 0h1m12 0h1m2 0h1m2 0h1m2 0h2m3 0h1m3 0h1m13 0h1m10 0h1m1 0h1m5 0h1m4 0h2m1 0h2m2 0h1m41 0h1m7 0h1m8 0h1m19 0h1m32 0h2m1 0h1m8 0h1m1 0h1m6 0h1m1 0h1m16 0h2m4 0h1m6 0h1m7 0h1m1 0h1m9 0h1m2 0h1m6 0h1m11 0h1m2 0h1m3 0h1m1 0h1m5 0h1m1 0h2m22 0h2m1 0h1m9 0h1m7 0h1m11 0h1m15 0h1M21 103h1m17 0h1m20 0h1m11 0h1m4 0h1m3 0h1m28 0h1m9 0h1m10 0h1m3 0h2m4 0h1m20 0h1m26 0h2m11 0h2m3 0h1m25 0h2m3 0h1m7 0h1m5 0h1m13 0h1m19 0h1m1 0h1m1 0h1m3 0h1m8 0h1m17 0h1m10 0h1m5 0h1m8 0h1m4 0h1m3 0h1m22 0h1m3 0h1m12 0h1m6 0h1m11 0h1m7 0h1m8 0h1m15 0h1m7 0h1m1 0h1m1 0h1m13 0h1m18 0h1m3 0h1m2 0h1m5 0h1m5 0h1m21 0h1m2 0h1m1 0h1m1 0h1m25 0h3m19 0h1m2 0h1m16 0h1m4 0h1M26 104h3m3 0h1m13 0h2m15 0h1m6 0h1m9 0h1m4 0h1m2 0h1m8 0h2m15 0h1m47 0h2m3 0h1m4 0h1m3 0h1m7 0h1m16 0h1m7 0h2m6 0h1m7 0h1m6 0h1m6 0h2m12 0h1m2 0h1m15 0h1m21 0h1m12 0h1m8 0h1m4 0h1m3 0h1m14 0h1m7 0h1m5 0h4m7 0h1m8 0h1m23 0h1m1 0h1m7 0h1m9 0h1m15 0h1m1 0h1m6 0h1m10 0h1m1 0h1m24 0h1m3 0h1m13 0h1m10 0h1m2 0h1m1 0h1m1 0h1m2 0h1m11 0h1m19 0h2m2 0h1m6 0h2m3 0h1m12 0h1m8 0h1m11 0h1m6 0h1M43 105h1m10 0h1m6 0h1m1 0h1m34 0h1m3 0h1m9 0h1m5 0h1m1 0h1m1 0h2m1 0h1m2 0h1m12 0h1m13 0h1m8 0h1m1 0h1m5 0h1m8 0h1m14 0h1m13 0h1m1 0h1m4 0h1m20 0h1m7 0h1m24 0h1m5 0h2m1 0h1m1 0h1m3 0h1m4 0h1m20 0h2m9 0h1m7 0h1m1 0h1m15 0h1m20 0h1m5 0h1m8 0h1m22 0h1m13 0h2m11 0h1m2 0h2m21 0h1m16 0h1m14 0h2m14 0h1m1 0h1m4 0h1m4 0h1m5 0h1m6 0h1m5 0h2m4 0h1m2 0h1m11 0h1m8 0h1m5 0h1m14 0h1m4 0h1m7 0h2m2 0h1M22 106h2m8 0h1m4 0h1m21 0h1m9 0h1m2 0h1m1 0h1m4 0h1m16 0h2m8 0h1m7 0h1m9 0h1m11 0h1m22 0h1m3 0h1m1 0h1m9 0h1m1 0h1m7 0h1m24 0h1m8 0h1m1 0h1m20 0h1m3 0h1m17 0h1m9 0h1m12 0h1m2 0h2m3 0h1m14 0h1m2 0h1m8 0h2m9 0h1m2 0h1m5 0h1m8 0h1m9 0h1m8 0h1m1 0h1m25 0h1m13 0h1m7 0h1m13 0h1m10 0h1m50 0h1m2 0h2m2 0h1m1 0h2m21 0h1m2 0h1m15 0h1m2 0h1m1 0h1m6 0h2m9 0h1m13 0h1m9 0h1m5 0h1M20 107h1m28 0h1m1 0h1m22 0h1m8 0h2m9 0h1m4 0h1m2 0h1m5 0h1m3 0h1m12 0h1m1 0h1m2 0h1m1 0h2m27 0h1m12 0h1m27 0h1m7 0h1m3 0h1m10 0h1m17 0h1m2 0h1m8 0h1m1 0h1m2 0h1m12 0h1m3 0h1m14 0h1m26 0h1m7 0h1m1 0h1m10 0h1m2 0h1m2 0h1m1 0h2m1 0h3m14 0h1m18 0h2m3 0h1m10 0h2m4 0h2m18 0h1m1 0h1m8 0h1m8 0h1m20 0h2m5 0h1m7 0h1m7 0h1m1 0h1m12 0h1m22 0h1m19 0h2m17 0h1m16 0h1M20 108h1m1 0h1m2 0h2m42 0h1m17 0h1m37 0h1m9 0h2m2 0h1m1 0h1m11 0h1m5 0h1m8 0h2m28 0h1m24 0h1m4 0h1m16 0h1m15 0h1m6 0h1m27 0h1m7 0h1m34 0h1m12 0h1m10 0h1m2 0h1m1 0h3m1 0h1m15 0h1m12 0h1m23 0h1m17 0h1m16 0h1m1 0h1m10 0h1m1 0h1m24 0h1m5 0h2m3 0h1m9 0h1m3 0h1m20 0h1m9 0h1m3 0h1m7 0h1m7 0h1m10 0h1m5 0h1m1 0h1M34 109h1m2 0h1m11 0h1m19 0h1m5 0h1m6 0h1m4 0h1m2 0h1m3 0h1m6 0h1m16 0h1m10 0h1m31 0h1m7 0h1m12 0h1m4 0h1m2 0h1m10 0h1m12 0h1m2 0h1m1 0h1m3 0h1m1 0h2m5 0h1m18 0h1m11 0h1m7 0h1m3 0h1m1 0h1m9 0h1m1 0h1m1 0h1m10 0h1m6 0h1m31 0h2m6 0h1m15 0h1m4 0h1m18 0h1m2 0h1m9 0h1m3 0h1m31 0h1m14 0h1m14 0h1m9 0h1m6 0h1m13 0h1m3 0h1m6 0h2m5 0h1m2 0h1m2 0h1m19 0h1m7 0h1m12 0h2m3 0h1m11 0h2m7 0h1m1 0h1m3 0h1m5 0h1M22 110h1m18 0h1m5 0h1m16 0h1m4 0h1m4 0h1m5 0h1m6 0h2m11 0h2m25 0h1m7 0h1m1 0h1m9 0h1m12 0h1m1 0h1m14 0h1m9 0h1m1 0h1m35 0h2m3 0h1m4 0h1m1 0h1m8 0h1m27 0h1m16 0h1m8 0h1m14 0h1m20 0h1m3 0h1m18 0h1m8 0h1m1 0h2m9 0h1m11 0h1m11 0h1m5 0h1m4 0h1m1 0h1m1 0h1m6 0h1m2 0h1m9 0h1m10 0h1m8 0h1m2 0h1m12 0h1m13 0h1m8 0h1m6 0h1m1 0h1m3 0h1m20 0h1m1 0h1m1 0h1m1 0h1m1 0h1m2 0h1m3 0h1m2 0h1m7 0h1m6 0h1m2 0h1m1 0h1m2 0h3m4 0h1m19 0h1m14 0h1M22 111h1m2 0h1m1 0h1m5 0h1m7 0h1m12 0h1m17 0h1m4 0h1m5 0h1m5 0h1m2 0h1m21 0h1m2 0h1m2 0h1m3 0h1m5 0h1m2 0h1m11 0h1m2 0h1m8 0h1m24 0h1m2 0h1m6 0h1m10 0h1m22 0h1m6 0h1m19 0h2m5 0h1m11 0h1m3 0h1m3 0h1m25 0h1m1 0h1m8 0h3m8 0h1m11 0h1m3 0h1m23 0h2m2 0h1m3 0h1m2 0h1m6 0h1m15 0h1m7 0h1m5 0h1m6 0h2m4 0h1m8 0h1m4 0h1m2 0h1m8 0h1m12 0h2m4 0h1m7 0h1m5 0h1m4 0h1m23 0h2m14 0h1m4 0h1m3 0h1m12 0h1m6 0h1m24 0h1m4 0h1m7 0h1m1 0h1M69 112h1m9 0h1m26 0h1m4 0h1m14 0h1m18 0h1m20 0h1m2 0h1m10 0h1m4 0h1m4 0h1m17 0h2m4 0h2m35 0h1m14 0h1m3 0h1m4 0h2m21 0h1m48 0h1m13 0h1m12 0h1m14 0h1m10 0h1m9 0h1m12 0h1m1 0h1m2 0h2m21 0h1m6 0h1m3 0h2m7 0h1m11 0h1m10 0h2m4 0h1m9 0h1m24 0h2m1 0h1m7 0h1m2 0h1m10 0h1m5 0h1m1 0h2m15 0h1m7 0h3m2 0h1m1 0h1M23 113h1m15 0h1m13 0h1m12 0h1m9 0h1m7 0h1m1 0h2m2 0h1m6 0h2m3 0h1m7 0h1m1 0h1m27 0h1m3 0h1m12 0h1m2 0h1m6 0h1m10 0h2m6 0h1m16 0h1m5 0h1m27 0h1m9 0h1m1 0h1m3 0h1m3 0h1m38 0h1m8 0h1m22 0h1m3 0h1m10 0h1m22 0h1m24 0h1m2 0h1m4 0h1m1 0h1m4 0h1m4 0h1m11 0h1m4 0h1m11 0h1m13 0h1m13 0h1m1 0h1m15 0h1m12 0h1m10 0h1m9 0h2m30 0h1m10 0h1m2 0h1m19 0h1m1 0h1m4 0h3m4 0h1M21 114h1m12 0h1m5 0h1m1 0h1m4 0h1m16 0h1m5 0h1m9 0h1m9 0h1m10 0h1m9 0h1m7 0h1m2 0h1m5 0h1m2 0h1m13 0h1m7 0h1m41 0h1m2 0h2m9 0h1m13 0h2m13 0h1m11 0h1m9 0h1m5 0h1m9 0h1m3 0h1m5 0h2m5 0h2m6 0h1m10 0h1m32 0h2m9 0h1m36 0h1m23 0h2m4 0h1m6 0h1m17 0h2m40 0h1m1 0h1m8 0h1m2 0h1m6 0h1m3 0h2m2 0h1m1 0h1m1 0h1m3 0h1m14 0h1m8 0h1m11 0h2m2 0h1m12 0h1m7 0h1m5 0h1m1 0h1m2 0h1m7 0h2m1 0h1m1 0h1m3 0h1M20 115h1m4 0h1m20 0h1m1 0h1m5 0h2m3 0h1m2 0h1m1 0h1m3 0h1m16 0h1m6 0h1m4 0h1m6 0h1m2 0h1m3 0h1m11 0h1m6 0h1m2 0h1m2 0h1m10 0h1m1 0h1m30 0h1m13 0h3m7 0h1m13 0h1m6 0h1m22 0h2m21 0h1m2 0h1m4 0h1m1 0h1m20 0h1m1 0h1m5 0h1m5 0h1m5 0h1m2 0h1m7 0h1m1 0h1m9 0h1m5 0h1m20 0h1m3 0h1m5 0h1m36 0h1m13 0h1m7 0h1m27 0h1m58 0h1m4 0h1m3 0h1m8 0h1m7 0h1m3 0h1m11 0h1m15 0h1m2 0h1m14 0h1m2 0h1m2 0h1m4 0h2M23 116h1m2 0h1m14 0h1m30 0h1m20 0h1m5 0h1m12 0h1m20 0h2m14 0h1m38 0h1m6 0h1m4 0h1m4 0h1m6 0h2m3 0h1m2 0h4m16 0h2m57 0h1m12 0h1m23 0h1m1 0h1m39 0h1m3 0h1m14 0h1m15 0h1m19 0h1m2 0h1m9 0h1m12 0h1m8 0h1m6 0h1m12 0h1m10 0h1m1 0h1m15 0h1m1 0h1m6 0h1m35 0h1m9 0h1m15 0h1m14 0h1m12 0h1M22 117h1m5 0h1m3 0h1m4 0h1m15 0h1m11 0h1m1 0h1m21 0h1m2 0h1m7 0h1m14 0h1m9 0h1m17 0h1m13 0h1m10 0h1m2 0h1m5 0h1m18 0h1m8 0h1m11 0h1m6 0h1m10 0h1m30 0h1m7 0h1m24 0h1m5 0h1m2 0h1m3 0h1m9 0h1m1 0h1m2 0h1m17 0h1m4 0h1m10 0h1m1 0h1m3 0h1m4 0h1m8 0h1m2 0h1m7 0h1m12 0h1m13 0h2m35 0h1m2 0h1m16 0h1m1 0h1m3 0h3m6 0h1m24 0h1m5 0h1m22 0h1m9 0h1m2 0h1m2 0h1m9 0h3m3 0h1m15 0h1m10 0h1m9 0h1m1 0h1M21 118h1m24 0h1m19 0h1m18 0h1m1 0h1m5 0h1m9 0h1m1 0h1m1 0h1m1 0h1m31 0h1m4 0h1m2 0h1m8 0h1m7 0h1m11 0h1m4 0h2m19 0h1m18 0h1m2 0h1m11 0h1m4 0h1m14 0h3m2 0h1m1 0h1m18 0h1m1 0h1m1 0h1m2 0h1m7 0h1m1 0h1m19 0h1m4 0h1m13 0h2m3 0h1m1 0h1m1 0h1m7 0h1m3 0h2m1 0h2m46 0h1m6 0h1m2 0h1m8 0h1m8 0h1m46 0h1m3 0h1m13 0h1m2 0h1m7 0h1m10 0h1m3 0h2m24 0h1m27 0h1m7 0h1m7 0h1M24 119h1m13 0h1m19 0h1m3 0h2m41 0h1m11 0h1m15 0h1m1 0h1m19 0h1m12 0h1m7 0h1m10 0h1m13 0h1m5 0h1m2 0h2m3 0h1m14 0h1m2 0h1m42 0h1m13 0h1m19 0h1m4 0h1m3 0h1m14 0h1m1 0h1m1 0h1m5 0h1m2 0h1m1 0h1m1 0h2m28 0h1m64 0h1m7 0h1m3 0h1m19 0h1m11 0h1m1 0h2m56 0h1m19 0h2m11 0h1m1 0h2M32 120h1m9 0h2m15 0h1m2 0h1m10 0h2m10 0h1m15 0h1m19 0h1m6 0h1m13 0h1m9 0h1m2 0h1m18 0h1m7 0h1m12 0h1m30 0h1m18 0h1m1 0h2m7 0h2m1 0h1m14 0h1m6 0h1m4 0h1m7 0h1m5 0h2m31 0h1m12 0h1m10 0h1m2 0h1m16 0h1m7 0h1m1 0h1m4 0h1m1 0h1m2 0h1m3 0h1m27 0h1m17 0h1m1 0h1m2 0h1m8 0h2m8 0h1m3 0h1m11 0h1m7 0h1m21 0h1m26 0h1m1 0h1m9 0h1m4 0h1m1 0h2m6 0h1m20 0h1m7 0h1M32 121h1m1 0h1m23 0h1m21 0h1m3 0h1m10 0h1m2 0h1m7 0h1m24 0h1m11 0h1m1 0h1m15 0h1m40 0h1m12 0h1m29 0h1m7 0h1m1 0h1m2 0h1m3 0h1m19 0h1m5 0h1m9 0h1m7 0h1m22 0h1m13 0h1m9 0h1m8 0h1m5 0h1m4 0h1m7 0h1m10 0h2m5 0h1m1 0h1m4 0h1m1 0h1m6 0h1m5 0h1m13 0h1m14 0h1m6 0h1m22 0h1m2 0h2m9 0h1m8 0h1m8 0h1m4 0h2m3 0h1m11 0h1m2 0h1m12 0h1m2 0h1m6 0h1m2 0h1m6 0h1m8 0h1m16 0h1m3 0h2m13 0h1M33 122h1m1 0h1m10 0h1m13 0h1m2 0h1m10 0h2m5 0h1m6 0h2m4 0h1m7 0h1m22 0h1m7 0h1m8 0h1m16 0h1m8 0h2m13 0h1m4 0h1m7 0h1m2 0h1m10 0h1m4 0h1m4 0h1m21 0h1m8 0h1m15 0h1m1 0h2m8 0h1m9 0h1m6 0h2m7 0h1m6 0h1m29 0h1m7 0h1m2 0h1m2 0h1m1 0h1m13 0h1m2 0h1m3 0h1m16 0h1m3 0h1m6 0h1m12 0h1m1 0h1m22 0h1m29 0h1m6 0h1m14 0h1m1 0h1m7 0h1m1 0h1m5 0h1m9 0h1m14 0h2m42 0h1m8 0h1m3 0h1m14 0h1M48 123h1m7 0h1m6 0h1m2 0h1m23 0h1m11 0h1m10 0h1m1 0h1m8 0h1m13 0h1m25 0h1m2 0h1m8 0h1m18 0h1m13 0h1m13 0h1m30 0h1m2 0h1m12 0h2m4 0h1m25 0h1m7 0h1m8 0h1m7 0h3m5 0h1m8 0h1m2 0h1m13 0h1m1 0h1m3 0h1m11 0h1m18 0h1m6 0h1m15 0h1m5 0h1m7 0h1m2 0h2m9 0h1m7 0h1m4 0h1m3 0h1m5 0h1m7 0h1m17 0h1m8 0h1m20 0h1m8 0h1m3 0h1m16 0h1m6 0h1m1 0h1m5 0h1m31 0h2M34 124h1m25 0h1m8 0h1m13 0h1m1 0h1m8 0h1m17 0h1m8 0h1m1 0h1m9 0h1m6 0h1m21 0h1m5 0h1m6 0h1m20 0h2m9 0h1m1 0h1m10 0h2m11 0h2m16 0h1m4 0h1m6 0h1m26 0h1m15 0h2m13 0h1m4 0h1m9 0h1m4 0h2m7 0h1m10 0h1m1 0h1m27 0h1m3 0h3m5 0h1m11 0h2m15 0h1m18 0h1m1 0h1m19 0h1m3 0h1m10 0h1m1 0h1m37 0h1m11 0h2m3 0h1m4 0h1m46 0h1M29 125h1m4 0h1m6 0h1m15 0h1m12 0h2m8 0h1m17 0h1m5 0h1m1 0h1m1 0h1m6 0h1m13 0h1m13 0h1m13 0h1m2 0h1m9 0h1m1 0h1m2 0h1m4 0h1m30 0h1m2 0h1m2 0h1m7 0h1m2 0h1m4 0h1m5 0h1m2 0h1m6 0h1m11 0h2m4 0h3m5 0h1m7 0h1m5 0h1m13 0h1m3 0h1m11 0h1m9 0h1m12 0h1m5 0h1m4 0h1m7 0h2m23 0h1m5 0h1m20 0h1m3 0h1m3 0h1m8 0h1m16 0h1m10 0h1m13 0h3m15 0h1m33 0h1m1 0h1m14 0h1m18 0h1m21 0h1m5 0h1m7 0h3m12 0h1m5 0h1M26 126h1m7 0h2m16 0h2m7 0h1m10 0h1m8 0h1m43 0h1m1 0h1m26 0h1m5 0h1m8 0h1m7 0h1m11 0h1m1 0h1m2 0h1m1 0h1m2 0h1m6 0h1m9 0h1m8 0h1m15 0h1m33 0h1m1 0h1m1 0h1m4 0h1m2 0h2m9 0h1m2 0h1m11 0h1m4 0h1m6 0h1m3 0h1m4 0h1m13 0h1m3 0h1m11 0h1m5 0h1m10 0h1m47 0h1m16 0h1m27 0h1m15 0h1m22 0h1m12 0h1m1 0h1m7 0h1m12 0h1m11 0h1m1 0h1m3 0h1m10 0h1m18 0h1m16 0h1M27 127h1m26 0h1m2 0h1m11 0h1m21 0h1m1 0h1m4 0h1m12 0h1m3 0h1m4 0h1m7 0h1m4 0h1m6 0h1m16 0h2m9 0h1m2 0h1m23 0h1m2 0h1m8 0h1m4 0h1m11 0h1m7 0h1m22 0h1m4 0h1m3 0h1m21 0h1m8 0h1m12 0h2m1 0h1m4 0h1m1 0h1m10 0h1m3 0h1m1 0h1m9 0h1m3 0h1m2 0h1m19 0h1m12 0h1m3 0h1m12 0h3m1 0h1m6 0h1m4 0h2m6 0h2m45 0h1m1 0h1m14 0h1m20 0h2m4 0h1m1 0h1m3 0h1m17 0h1m2 0h1m13 0h1m5 0h1m9 0h1m6 0h1m7 0h1m11 0h1m3 0h2M28 128h1m7 0h1m2 0h1m6 0h1m3 0h1m7 0h1m1 0h1m2 0h1m8 0h1m4 0h1m5 0h1m18 0h1m5 0h1m6 0h1m6 0h1m1 0h1m15 0h1m12 0h1m16 0h1m4 0h1m15 0h1m1 0h1m2 0h1m4 0h1m2 0h1m18 0h1m25 0h1m24 0h1m8 0h1m4 0h1m9 0h1m16 0h1m10 0h2m12 0h1m3 0h2m8 0h1m1 0h1m3 0h1m3 0h1m3 0h1m4 0h1m1 0h1m9 0h1m9 0h1m1 0h1m1 0h1m3 0h1m9 0h1m6 0h1m18 0h1m23 0h1m9 0h1m13 0h1m9 0h1m5 0h1m2 0h1m16 0h1m2 0h1m23 0h1m3 0h1m13 0h1m7 0h1m8 0h1m29 0h1M23 129h1m12 0h1m2 0h1m4 0h1m2 0h1m2 0h1m1 0h1m13 0h1m8 0h1m11 0h2m23 0h2m13 0h1m41 0h1m10 0h1m17 0h1m12 0h3m1 0h1m2 0h1m15 0h1m16 0h1m21 0h1m13 0h1m13 0h2m7 0h1m3 0h2m4 0h1m5 0h1m6 0h1m1 0h1m16 0h2m12 0h2m12 0h1m5 0h1m8 0h1m5 0h1m19 0h1m38 0h1m4 0h1m19 0h1m1 0h4m9 0h1m8 0h1m11 0h2m9 0h1m15 0h1m11 0h1m3 0h1m12 0h1m3 0h1m6 0h1M20 130h1m12 0h1m18 0h1m11 0h2m11 0h1m17 0h1m11 0h1m1 0h1m5 0h1m13 0h1m7 0h1m10 0h1m3 0h1m1 0h1m17 0h1m5 0h1m2 0h1m4 0h1m28 0h1m11 0h1m15 0h1m1 0h1m28 0h1m11 0h2m8 0h2m6 0h1m2 0h1m4 0h1m35 0h1m6 0h1m26 0h1m30 0h1m1 0h1m14 0h1m3 0h1m2 0h1m10 0h1m16 0h1m8 0h1m22 0h1m6 0h2m10 0h1m6 0h1m4 0h1m3 0h1m4 0h1m6 0h1m6 0h1m6 0h1m3 0h1m2 0h1m2 0h1m6 0h1m2 0h1m10 0h1m6 0h1m3 0h1m2 0h1M30 131h1m37 0h1m14 0h1m27 0h1m15 0h1m1 0h1m7 0h1m9 0h1m2 0h1m5 0h1m4 0h1m15 0h1m38 0h1m2 0h1m4 0h1m10 0h1m5 0h2m8 0h1m3 0h1m20 0h1m1 0h1m10 0h1m3 0h1m5 0h1m29 0h1m9 0h1m2 0h1m2 0h1m19 0h1m12 0h1m3 0h1m4 0h1m40 0h1m6 0h1m5 0h1m18 0h1m5 0h2m19 0h1m4 0h1m7 0h1m1 0h1m5 0h1m27 0h1m3 0h2m15 0h1m4 0h1m2 0h1m16 0h1m24 0h2m2 0h1M23 132h1m17 0h1m1 0h1m4 0h1m12 0h1m8 0h1m6 0h1m15 0h1m35 0h1m6 0h1m1 0h1m4 0h1m23 0h1m6 0h1m5 0h1m7 0h1m6 0h1m4 0h1m7 0h1m21 0h1m11 0h1m6 0h1m10 0h1m9 0h1m10 0h1m5 0h1m3 0h1m20 0h1m3 0h1m15 0h1m23 0h1m15 0h1m6 0h1m8 0h2m3 0h1m13 0h1m10 0h3m8 0h1m11 0h1m12 0h1m8 0h1m25 0h1m8 0h1m10 0h1m8 0h1m8 0h1m8 0h1m12 0h1m2 0h1m6 0h1m10 0h1m2 0h2m7 0h1m16 0h1m12 0h1M22 133h1m4 0h1m2 0h1m24 0h1m3 0h1m9 0h1m25 0h1m28 0h1m22 0h1m36 0h1m6 0h1m13 0h1m9 0h1m1 0h1m3 0h1m52 0h1m2 0h1m13 0h1m5 0h1m19 0h1m8 0h1m6 0h1m3 0h1m18 0h1m5 0h2m6 0h2m28 0h1m8 0h2m4 0h1m9 0h1m3 0h3m1 0h1m6 0h1m13 0h1m4 0h1m9 0h1m5 0h1m11 0h1m21 0h1m9 0h1m9 0h1m3 0h1m26 0h1m6 0h1m11 0h1m17 0h1M57 134h1m26 0h1m9 0h1m1 0h1m20 0h1m1 0h1m15 0h1m14 0h1m8 0h1m3 0h1m6 0h1m21 0h1m2 0h1m2 0h1m8 0h2m7 0h1m2 0h1m2 0h1m11 0h1m1 0h1m1 0h1m3 0h1m5 0h1m11 0h1m33 0h1m7 0h1m19 0h1m4 0h1m2 0h1m2 0h1m8 0h2m6 0h1m13 0h1m1 0h1m11 0h1m36 0h1m3 0h1m4 0h1m24 0h2m1 0h1m17 0h2m34 0h1m31 0h1m9 0h1m3 0h1m9 0h1m4 0h1m21 0h1m25 0h1M21 135h1m5 0h2m23 0h1m11 0h1m1 0h1m7 0h1m18 0h2m2 0h1m2 0h2m18 0h1m5 0h1m5 0h1m20 0h1m4 0h1m13 0h1m6 0h1m11 0h1m3 0h1m17 0h1m25 0h1m5 0h2m2 0h1m1 0h1m7 0h1m14 0h2m1 0h2m3 0h1m30 0h1m4 0h2m7 0h1m2 0h1m10 0h1m35 0h1m6 0h1m10 0h1m9 0h1m21 0h1m15 0h1m13 0h1m15 0h1m23 0h1m1 0h1m10 0h1m4 0h1m1 0h1m5 0h1m11 0h1m5 0h1m21 0h1m25 0h2m9 0h1M68 136h1m1 0h1m19 0h1m15 0h1m4 0h1m6 0h1m6 0h1m8 0h1m1 0h1m1 0h1m3 0h1m7 0h2m4 0h2m24 0h1m6 0h1m2 0h1m12 0h1m4 0h1m16 0h1m9 0h1m10 0h1m5 0h1m2 0h1m4 0h1m2 0h1m3 0h1m13 0h2m3 0h1m6 0h1m3 0h1m11 0h1m30 0h1m2 0h1m1 0h1m4 0h1m6 0h1m7 0h1m2 0h1m9 0h1m7 0h1m8 0h1m5 0h1m7 0h1m20 0h1m25 0h1m11 0h1m27 0h1m1 0h1m1 0h1m3 0h1m2 0h1m29 0h1m18 0h1m1 0h1m16 0h1m26 0h1m4 0h1m1 0h1M37 137h1m17 0h1m11 0h1m5 0h1m22 0h2m21 0h1m1 0h1m11 0h1m4 0h1m10 0h1m2 0h1m2 0h1m3 0h1m6 0h1m1 0h1m2 0h1m4 0h1m15 0h1m9 0h1m9 0h1m17 0h1m2 0h1m13 0h1m16 0h1m1 0h1m2 0h1m12 0h1m7 0h1m2 0h1m6 0h1m6 0h2m3 0h1m32 0h1m10 0h1m39 0h1m9 0h1m12 0h1m6 0h2m3 0h1m6 0h1m11 0h2m4 0h1m2 0h1m27 0h1m18 0h1m16 0h1m1 0h2m9 0h1m43 0h1m10 0h1m13 0h1M27 138h1m42 0h1m3 0h1m1 0h1m5 0h1m11 0h1m1 0h1m24 0h1m2 0h1m8 0h1m9 0h1m3 0h1m6 0h1m14 0h1m6 0h1m10 0h1m14 0h1m10 0h1m9 0h1m6 0h1m18 0h1m5 0h1m2 0h1m17 0h1m3 0h3m13 0h1m12 0h1m5 0h1m8 0h1m1 0h1m21 0h1m3 0h1m1 0h1m1 0h1m7 0h1m13 0h1m5 0h1m20 0h1m18 0h1m2 0h1m2 0h1m13 0h1m4 0h1m37 0h1m18 0h1m2 0h1m32 0h1m33 0h1m7 0h1m14 0h1m1 0h2m6 0h1m3 0h1M31 139h1m4 0h1m2 0h2m16 0h1m3 0h1m10 0h1m10 0h1m3 0h1m22 0h1m13 0h2m6 0h2m6 0h1m26 0h1m11 0h1m26 0h1m4 0h1m11 0h1m4 0h1m1 0h1m5 0h1m16 0h2m14 0h1m1 0h1m1 0h1m7 0h1m9 0h1m4 0h1m4 0h1m20 0h1m6 0h1m25 0h1m1 0h2m2 0h1m2 0h1m12 0h1m2 0h1m3 0h1m4 0h1m11 0h1m3 0h1m14 0h1m17 0h1m7 0h1m53 0h1m2 0h1m28 0h1m11 0h1m2 0h1m1 0h1m4 0h1m5 0h1m5 0h1m17 0h1m21 0h1m5 0h1M26 140h1m2 0h1m10 0h1m8 0h1m11 0h1m29 0h1m2 0h1m12 0h1m27 0h1m5 0h1m27 0h2m1 0h1m5 0h1m28 0h1m16 0h1m1 0h1m9 0h1m9 0h1m5 0h1m17 0h1m3 0h1m4 0h1m2 0h1m14 0h1m32 0h1m7 0h1m27 0h1m1 0h1m8 0h1m2 0h1m25 0h1m16 0h1m12 0h1m18 0h1m31 0h1m3 0h1m7 0h1m18 0h1m6 0h1m2 0h1m5 0h1m2 0h1m27 0h1m9 0h1m9 0h1M20 141h1m6 0h1m1 0h1m3 0h1m4 0h1m18 0h2m16 0h1m2 0h1m5 0h1m10 0h1m37 0h1m6 0h1m5 0h1m10 0h1m40 0h1m24 0h1m4 0h1m2 0h1m14 0h1m11 0h1m12 0h1m1 0h1m5 0h1m12 0h1m17 0h1m2 0h1m1 0h1m65 0h1m2 0h1m9 0h1m11 0h1m33 0h1m11 0h1m58 0h1m2 0h1m31 0h1m6 0h1m14 0h1m6 0h1m13 0h1m14 0h1M21 142h1m7 0h1m11 0h1m6 0h1m5 0h1m13 0h1m2 0h1m10 0h1m2 0h1m3 0h1m10 0h1m8 0h1m4 0h1m5 0h1m7 0h1m8 0h1m5 0h2m13 0h1m7 0h1m12 0h1m6 0h1m2 0h1m23 0h1m6 0h1m40 0h2m6 0h1m2 0h1m17 0h1m9 0h1m41 0h1m10 0h1m13 0h1m20 0h1m15 0h1m5 0h1m32 0h1m15 0h1m1 0h1m15 0h2m3 0h1m19 0h1m24 0h1m4 0h1m26 0h1m40 0h2M29 143h2m1 0h1m5 0h1m33 0h1m2 0h1m4 0h1m14 0h1m14 0h1m7 0h1m17 0h1m34 0h1m23 0h1m18 0h2m14 0h1m21 0h1m2 0h1m9 0h1m7 0h1m8 0h2m1 0h1m8 0h1m12 0h1m5 0h1m20 0h2m2 0h1m4 0h1m22 0h1m4 0h2m1 0h2m2 0h1m13 0h1m9 0h1m6 0h1m54 0h1m6 0h1m13 0h2m5 0h1m9 0h1m4 0h1m14 0h1m1 0h1m7 0h1m6 0h1m23 0h1m4 0h1m11 0h1m2 0h1m4 0h1M32 144h1m34 0h1m3 0h1m3 0h1m4 0h1m4 0h1m10 0h1m15 0h1m9 0h1m6 0h1m4 0h1m9 0h1m5 0h1m3 0h1m7 0h1m8 0h1m8 0h1m11 0h1m17 0h1m11 0h1m69 0h1m8 0h2m35 0h2m3 0h1m4 0h1m1 0h2m20 0h1m26 0h1m31 0h1m32 0h1m13 0h1m18 0h1m8 0h1m19 0h1m3 0h1m15 0h1m9 0h1m8 0h1m34 0h1m5 0h1m1 0h1m3 0h1m3 0h1M39 145h1m9 0h1m2 0h1m1 0h1m3 0h1m11 0h1m2 0h1m24 0h1m2 0h1m2 0h1m17 0h1m6 0h1m7 0h1m27 0h1m3 0h1m1 0h1m26 0h1m9 0h1m19 0h1m1 0h1m1 0h1m11 0h1m10 0h1m4 0h1m17 0h1m8 0h2m1 0h1m13 0h1m2 0h1m37 0h1m11 0h1m3 0h1m4 0h1m6 0h1m3 0h1m39 0h1m30 0h2m27 0h1m1 0h1m3 0h1m3 0h1m29 0h1m11 0h1m11 0h1m17 0h1m7 0h1m10 0h1m1 0h1m35 0h1M24 146h1m4 0h1m12 0h1m5 0h2m6 0h1m1 0h1m20 0h2m1 0h1m11 0h1m8 0h1m3 0h1m9 0h1m4 0h1m2 0h1m1 0h1m4 0h1m13 0h1m16 0h1m1 0h1m5 0h2m30 0h1m5 0h1m3 0h1m1 0h1m6 0h1m14 0h1m1 0h1m13 0h1m4 0h1m9 0h1m1 0h1m35 0h1m4 0h1m4 0h1m3 0h1m6 0h1m18 0h1m14 0h1m4 0h1m3 0h1m28 0h1m3 0h1m13 0h1m12 0h1m16 0h1m7 0h2m10 0h1m14 0h1m13 0h1m22 0h1m6 0h1m22 0h1m1 0h1m11 0h1m12 0h1m16 0h1m3 0h1M21 147h1m16 0h1m9 0h1m3 0h1m57 0h1m1 0h1m7 0h1m3 0h1m3 0h1m9 0h1m5 0h1m17 0h1m11 0h1m6 0h1m5 0h1m29 0h1m3 0h1m2 0h1m46 0h1m5 0h1m1 0h1m10 0h1m1 0h1m17 0h1m10 0h1m24 0h1m2 0h1m35 0h1m18 0h1m10 0h1m29 0h1m2 0h1m7 0h1m14 0h1m3 0h1m23 0h1m4 0h1m23 0h1m1 0h1m53 0h2m1 0h1m14 0h1m5 0h1m2 0h1m4 0h1M28 148h1m1 0h1m8 0h1m11 0h1m22 0h1m4 0h1m22 0h1m7 0h1m5 0h2m28 0h1m12 0h1m18 0h1m7 0h1m11 0h1m45 0h1m24 0h1m4 0h1m15 0h1m3 0h1m11 0h1m6 0h1m7 0h1m9 0h1m30 0h1m25 0h1m5 0h1m5 0h1m32 0h1m20 0h1m28 0h1m10 0h1m5 0h1m25 0h1m7 0h1m11 0h1m5 0h1m5 0h1m3 0h1m11 0h1m24 0h1m1 0h2m8 0h1M37 149h1m23 0h1m17 0h1m5 0h1m17 0h1m13 0h1m30 0h1m9 0h1m6 0h1m3 0h1m27 0h1m3 0h1m62 0h2m1 0h1m8 0h1m2 0h1m4 0h1m43 0h1m10 0h1m31 0h1m15 0h1m12 0h1m11 0h1m34 0h1m8 0h1m3 0h1m1 0h1m6 0h1m7 0h2m7 0h1m1 0h1m28 0h1m5 0h1m4 0h1m8 0h1m10 0h1m5 0h1m3 0h1m11 0h1m21 0h1m2 0h2M39 150h1m27 0h1m1 0h1m3 0h1m27 0h1m32 0h1m16 0h1m17 0h1m4 0h1m3 0h1m11 0h1m3 0h2m1 0h2m21 0h1m5 0h1m10 0h1m25 0h1m4 0h1m9 0h1m9 0h1m11 0h1m28 0h1m4 0h1m11 0h1m14 0h1m13 0h1m76 0h1m8 0h1m16 0h1m6 0h1m8 0h1m11 0h1m15 0h1m2 0h2m5 0h1m2 0h1m5 0h1m9 0h1m1 0h1m8 0h1m13 0h1m15 0h1m2 0h1m2 0h1m2 0h1M73 151h1m9 0h2m8 0h1m24 0h1m9 0h1m22 0h1m17 0h1m2 0h1m9 0h2m4 0h1m9 0h1m8 0h1m4 0h2m1 0h1m2 0h1m2 0h2m10 0h1m3 0h1m19 0h1m6 0h1m12 0h1m4 0h1m2 0h1m17 0h1m6 0h1m3 0h1m5 0h2m10 0h1m60 0h1m9 0h1m4 0h1m3 0h1m2 0h1m3 0h1m1 0h1m7 0h1m14 0h1m34 0h1m2 0h2m1 0h1m6 0h1m4 0h1m3 0h1m15 0h1m1 0h1m10 0h1m8 0h1m56 0h2m2 0h1M20 152h1m33 0h1m28 0h1m10 0h1m19 0h1m1 0h1m1 0h1m40 0h1m4 0h1m17 0h1m2 0h2m30 0h1m23 0h1m6 0h1m4 0h1m12 0h1m9 0h1m4 0h1m24 0h1m7 0h1m3 0h1m9 0h1m1 0h1m12 0h1m2 0h1m15 0h1m3 0h1m35 0h1m9 0h1m10 0h1m5 0h1m17 0h1m16 0h1m32 0h1m12 0h1m53 0h1m2 0h1m4 0h1m9 0h1m6 0h1m3 0h1m14 0h2M32 153h1m1 0h1m1 0h1m23 0h1m2 0h1m13 0h1m15 0h1m30 0h1m8 0h1m7 0h1m1 0h1m10 0h1m16 0h1m2 0h1m18 0h1m4 0h1m11 0h1m2 0h1m24 0h1m30 0h1m2 0h1m11 0h1m6 0h1m13 0h1m4 0h1m20 0h1m6 0h1m21 0h1m11 0h2m14 0h1m10 0h1m14 0h1m1 0h1m3 0h1m13 0h1m6 0h1m2 0h1m28 0h1m1 0h1m20 0h1m17 0h1m2 0h1m7 0h1m10 0h1m4 0h1m18 0h1m24 0h1m10 0h1m7 0h1m3 0h2M27 154h1m2 0h1m20 0h1m15 0h1m20 0h1m4 0h1m20 0h1m10 0h1m32 0h1m9 0h1m46 0h1m58 0h1m13 0h1m1 0h1m7 0h1m2 0h1m4 0h1m22 0h1m41 0h1m10 0h1m5 0h1m12 0h1m2 0h1m3 0h1m3 0h1m4 0h2m2 0h1m13 0h2m8 0h1m7 0h1m5 0h1m14 0h1m5 0h1m2 0h1m8 0h1m26 0h1m2 0h1m13 0h1m4 0h1m13 0h1m11 0h1m4 0h1m3 0h1m3 0h1M50 155h1m48 0h2m27 0h1m3 0h1m4 0h1m3 0h1m1 0h1m1 0h1m1 0h1m4 0h1m32 0h1m11 0h1m3 0h1m6 0h1m31 0h1m15 0h1m3 0h1m17 0h1m5 0h1m5 0h1m17 0h2m20 0h1m7 0h1m6 0h1m8 0h1m3 0h1m17 0h1m7 0h1m3 0h1m28 0h2m3 0h1m9 0h1m1 0h1m13 0h1m4 0h1m7 0h1m5 0h1m6 0h1m8 0h2m6 0h1m9 0h1m12 0h1m3 0h1m2 0h1m12 0h1m10 0h1m3 0h1m10 0h1m4 0h1m16 0h1m4 0h1m21 0h2M52 156h1m17 0h1m1 0h1m1 0h1m3 0h1m3 0h1m20 0h3m11 0h1m1 0h1m27 0h1m5 0h1m10 0h2m3 0h1m36 0h1m2 0h1m18 0h2m7 0h1m10 0h2m6 0h1m11 0h1m23 0h1m25 0h1m2 0h1m30 0h1m7 0h2m25 0h1m10 0h1m8 0h2m18 0h1m21 0h1m6 0h1m6 0h1m14 0h1m7 0h1m6 0h1m13 0h1m5 0h1m21 0h1m18 0h1m11 0h2m10 0h1m2 0h4m17 0h2m7 0h1m2 0h1M38 157h1m23 0h1m27 0h1m14 0h1m40 0h1m3 0h1m24 0h1m5 0h1m6 0h1m15 0h1m23 0h1m10 0h1m1 0h1m13 0h1m11 0h1m23 0h1m1 0h1m1 0h1m9 0h1m20 0h1m34 0h1m13 0h1m3 0h1m6 0h1m3 0h1m3 0h1m18 0h2m10 0h1m3 0h1m17 0h1m2 0h1m28 0h1m32 0h1m16 0h1m39 0h1m3 0h1M45 158h2m3 0h1m3 0h1m19 0h1m2 0h1m3 0h1m39 0h1m1 0h1m15 0h1m83 0h1m3 0h1m11 0h1m22 0h1m8 0h1m21 0h1m9 0h1m3 0h1m1 0h1m21 0h1m37 0h2m25 0h1m16 0h1m7 0h1m33 0h1m17 0h1m2 0h1m19 0h1m1 0h3m37 0h1m2 0h1m4 0h1m69 0h2M21 159h1m5 0h1m11 0h1m6 0h1m7 0h1m21 0h2m9 0h1m17 0h1m46 0h1m5 0h1m6 0h1m5 0h3m18 0h1m16 0h1m20 0h1m21 0h1m32 0h1m34 0h1m1 0h1m11 0h1m2 0h1m14 0h2m26 0h1m28 0h1m8 0h1m2 0h1m1 0h1m18 0h1m22 0h1m15 0h1m2 0h1m1 0h1m1 0h1m6 0h1m4 0h1m5 0h1m10 0h1m18 0h1m16 0h2m4 0h1m11 0h1m3 0h1m8 0h1m1 0h1m6 0h1m1 0h1m3 0h1m5 0h1m9 0h1M34 160h1m10 0h2m14 0h1m8 0h1m14 0h1m14 0h1m27 0h1m26 0h1m5 0h1m8 0h2m5 0h1m3 0h1m2 0h1m62 0h1m1 0h1m27 0h1m4 0h1m4 0h1m5 0h2m4 0h1m2 0h1m15 0h1m3 0h1m22 0h1m30 0h1m2 0h1m22 0h1m5 0h1m6 0h1m8 0h1m12 0h1m6 0h1m23 0h2m16 0h1m1 0h1m6 0h1m25 0h1m3 0h1m3 0h1m4 0h2m15 0h2m11 0h1m42 0h1m9 0h1M64 161h1m1 0h1m33 0h1m32 0h1m3 0h2m16 0h1m1 0h2m2 0h1m5 0h1m35 0h1m16 0h1m22 0h1m25 0h1m25 0h1m10 0h1m10 0h1m9 0h1m38 0h1m13 0h1m4 0h1m3 0h1m1 0h1m12 0h1m6 0h1m9 0h1m1 0h1m3 0h1m30 0h1m1 0h1m14 0h1m2 0h1m19 0h1m14 0h1m6 0h1m8 0h1m13 0h1m1 0h1m18 0h1m2 0h1m10 0h1m12 0h1m22 0h1M28 162h1m3 0h1m4 0h1m24 0h1m4 0h1m13 0h2m24 0h1m4 0h1m15 0h1m11 0h1m12 0h1m10 0h1m4 0h1m59 0h1m1 0h1m5 0h1m26 0h2m7 0h1m2 0h1m7 0h1m27 0h1m1 0h1m1 0h1m17 0h1m7 0h1m5 0h1m2 0h1m1 0h1m10 0h1m2 0h1m11 0h1m7 0h1m6 0h1m1 0h1m5 0h1m4 0h1m15 0h1m2 0h1m2 0h1m27 0h1m12 0h1m2 0h1m3 0h1m28 0h1m18 0h1m14 0h1m1 0h1m4 0h1m11 0h1m6 0h1m2 0h1m6 0h1m1 0h1m10 0h2M21 163h1m9 0h1m7 0h1m23 0h1m4 0h1m10 0h1m2 0h1m28 0h1m8 0h2m10 0h1m13 0h1m31 0h1m7 0h1m12 0h1m3 0h1m22 0h1m1 0h1m12 0h1m5 0h1m2 0h1m9 0h1m3 0h1m3 0h1m8 0h1m31 0h1m6 0h1m21 0h2m5 0h1m3 0h1m3 0h1m7 0h1m4 0h1m9 0h1m9 0h1m14 0h1m9 0h1m1 0h1m21 0h1m7 0h1m1 0h1m13 0h1m14 0h1m6 0h1m1 0h1m13 0h1m4 0h1m3 0h1m53 0h1m44 0h1m7 0h1M27 164h1m8 0h1m33 0h1m2 0h1m14 0h1m3 0h1m18 0h1m15 0h1m8 0h1m6 0h1m8 0h1m3 0h1m29 0h1m7 0h1m17 0h1m5 0h1m4 0h1m2 0h1m1 0h1m8 0h1m18 0h1m8 0h2m12 0h2m2 0h1m1 0h1m1 0h1m1 0h2m6 0h1m10 0h1m6 0h1m9 0h1m12 0h1m6 0h1m1 0h1m8 0h1m12 0h1m10 0h1m2 0h1m18 0h1m6 0h1m1 0h1m1 0h1m1 0h1m21 0h1m2 0h1m13 0h1m8 0h1m31 0h2m1 0h1m13 0h1m10 0h1m2 0h1m1 0h1m4 0h1m16 0h1m14 0h1m33 0h1m1 0h1m13 0h1M37 165h1m4 0h1m5 0h1m18 0h1m18 0h1m3 0h2m7 0h1m5 0h1m2 0h1m9 0h1m14 0h1m8 0h2m8 0h1m11 0h1m16 0h1m18 0h1m3 0h1m24 0h1m20 0h1m28 0h1m1 0h1m12 0h1m1 0h1m5 0h1m17 0h1m14 0h1m1 0h2m4 0h1m1 0h1m3 0h1m15 0h1m2 0h1m22 0h1m2 0h1m13 0h1m1 0h1m8 0h1m15 0h1m2 0h1m4 0h1m61 0h1m15 0h1m1 0h1m1 0h1m4 0h1m23 0h1m14 0h1m1 0h1m16 0h2m4 0h1m12 0h1M39 166h1m4 0h1m10 0h1m2 0h1m3 0h1m2 0h1m12 0h1m2 0h1m3 0h1m4 0h1m30 0h1m4 0h2m8 0h1m33 0h1m3 0h1m8 0h1m26 0h1m9 0h1m4 0h1m3 0h2m11 0h1m5 0h1m17 0h1m16 0h1m14 0h2m1 0h2m21 0h1m26 0h1m58 0h1m4 0h1m18 0h1m4 0h1m7 0h1m3 0h1m15 0h1m6 0h1m3 0h1m3 0h2m2 0h1m49 0h1m5 0h2m4 0h1m4 0h1m10 0h1m2 0h1m20 0h1m1 0h1M30 167h1m1 0h1m21 0h1m5 0h1m11 0h1m1 0h1m19 0h1m16 0h1m7 0h1m1 0h1m4 0h1m8 0h1m16 0h1m21 0h1m2 0h1m20 0h1m7 0h1m6 0h1m2 0h1m16 0h1m8 0h1m10 0h1m16 0h1m9 0h1m25 0h1m15 0h1m9 0h1m6 0h1m2 0h1m12 0h1m5 0h1m40 0h1m8 0h1m13 0h1m18 0h1m17 0h1m17 0h1m3 0h1m16 0h1m19 0h1m1 0h1m7 0h1m3 0h1m2 0h1m2 0h1m1 0h1m2 0h1m6 0h1m12 0h1m5 0h1m16 0h1m5 0h1m4 0h1M62 168h1m2 0h1m38 0h1m4 0h1m3 0h1m12 0h1m7 0h1m3 0h2m2 0h2m10 0h1m2 0h1m11 0h1m11 0h1m9 0h1m2 0h1m2 0h1m1 0h1m16 0h1m1 0h1m20 0h1m5 0h1m21 0h1m1 0h1m3 0h1m26 0h3m10 0h1m6 0h1m32 0h1m4 0h1m2 0h1m17 0h2m13 0h1m19 0h1m8 0h1m5 0h2m23 0h1m16 0h1m13 0h1m8 0h1m7 0h1m5 0h1m4 0h1m11 0h1m1 0h1m45 0h1m15 0h1m1 0h1m4 0h1m1 0h1m1 0h1m3 0h2m5 0h1m2 0h1M51 169h1m7 0h1m2 0h1m13 0h1m3 0h1m15 0h2m31 0h1m2 0h1m25 0h1m36 0h1m7 0h1m3 0h1m17 0h1m22 0h1m3 0h1m6 0h1m27 0h1m8 0h2m1 0h3m37 0h1m1 0h1m2 0h1m18 0h1m10 0h1m13 0h1m14 0h1m13 0h1m18 0h1m15 0h1m20 0h2m10 0h1m1 0h1m10 0h1m1 0h1m3 0h1m16 0h1m26 0h1m5 0h1m1 0h1m11 0h1m8 0h1m5 0h1m19 0h1M38 170h1m5 0h3m4 0h2m11 0h2m13 0h1m11 0h1m1 0h1m4 0h1m8 0h1m8 0h1m9 0h1m3 0h1m23 0h1m14 0h1m4 0h1m3 0h1m12 0h1m9 0h1m22 0h1m12 0h2m8 0h1m8 0h1m2 0h2m4 0h1m8 0h1m11 0h1m17 0h1m2 0h1m4 0h1m7 0h1m7 0h1m7 0h1m1 0h1m23 0h1m11 0h1m4 0h1m2 0h1m32 0h1m6 0h1m2 0h1m5 0h1m45 0h1m1 0h1m6 0h1m11 0h1m11 0h1m18 0h1m23 0h1m15 0h1m7 0h1m16 0h1m10 0h1m7 0h1m3 0h1M35 171h2m9 0h1m34 0h2m19 0h1m6 0h1m7 0h1m3 0h1m6 0h1m5 0h1m3 0h1m6 0h1m2 0h1m12 0h1m2 0h1m2 0h1m32 0h1m2 0h1m2 0h1m4 0h3m6 0h1m6 0h1m1 0h1m13 0h1m28 0h1m1 0h1m5 0h1m2 0h1m6 0h1m3 0h1m1 0h1m9 0h1m2 0h1m2 0h1m7 0h2m8 0h1m28 0h1m6 0h1m6 0h1m6 0h1m1 0h1m5 0h1m6 0h1m3 0h1m19 0h1m3 0h1m2 0h1m10 0h1m32 0h2m1 0h1m6 0h1m4 0h2m5 0h1m8 0h1m3 0h2m9 0h1m14 0h2m9 0h1m1 0h1m11 0h1m5 0h1m8 0h1m10 0h1m7 0h1m2 0h1m7 0h1m7 0h1m7 0h1M21 172h1m2 0h2m1 0h1m5 0h1m1 0h1m1 0h1m31 0h1m1 0h1m11 0h1m15 0h1m21 0h1m6 0h1m8 0h1m41 0h1m6 0h1m11 0h2m5 0h1m6 0h1m11 0h1m26 0h1m10 0h2m7 0h1m9 0h1m11 0h1m4 0h1m6 0h1m3 0h1m3 0h1m16 0h1m4 0h1m10 0h1m43 0h1m4 0h1m25 0h1m8 0h1m1 0h2m9 0h1m2 0h2m17 0h1m5 0h1m9 0h1m6 0h1m16 0h1m1 0h1m6 0h1m12 0h1m20 0h2m25 0h1m24 0h1m12 0h1m1 0h1M58 173h1m23 0h1m17 0h1m18 0h1m3 0h1m1 0h1m4 0h1m13 0h1m1 0h1m10 0h1m6 0h1m5 0h1m29 0h1m8 0h1m13 0h1m3 0h1m5 0h1m9 0h1m13 0h1m8 0h1m2 0h1m24 0h1m4 0h1m2 0h2m5 0h1m29 0h1m14 0h1m3 0h1m6 0h2m3 0h1m4 0h1m23 0h1m9 0h1m5 0h1m1 0h1m5 0h1m11 0h1m1 0h1m1 0h1m2 0h1m7 0h1m15 0h1m1 0h1m5 0h1m7 0h1m4 0h1m6 0h1m11 0h1m10 0h1m11 0h2m19 0h1m10 0h1m4 0h1m14 0h3m1 0h1m15 0h1m1 0h1m7 0h2M23 174h1m2 0h1m8 0h1m4 0h2m17 0h1m1 0h1m1 0h1m2 0h1m13 0h1m15 0h1m16 0h1m3 0h1m9 0h1m15 0h1m10 0h1m17 0h1m5 0h1m14 0h1m3 0h1m22 0h1m9 0h1m10 0h1m3 0h1m16 0h1m9 0h1m2 0h2m17 0h1m11 0h1m3 0h1m20 0h1m1 0h1m14 0h1m4 0h1m7 0h1m3 0h1m8 0h1m1 0h1m9 0h1m14 0h1m2 0h1m1 0h1m7 0h1m9 0h1m4 0h1m2 0h1m1 0h1m4 0h1m1 0h1m6 0h1m3 0h1m2 0h1m33 0h1m12 0h1m9 0h1m1 0h1m1 0h1m19 0h1m20 0h1m18 0h1m3 0h1m5 0h2M20 175h2m1 0h1m5 0h1m4 0h1m8 0h1m8 0h1m9 0h2m1 0h1m21 0h1m7 0h1m4 0h1m11 0h1m12 0h1m13 0h1m13 0h2m10 0h1m2 0h1m9 0h1m9 0h2m7 0h1m2 0h2m8 0h2m25 0h1m9 0h1m6 0h1m15 0h1m7 0h1m2 0h1m6 0h1m7 0h1m2 0h1m5 0h1m7 0h1m21 0h1m2 0h1m5 0h1m12 0h1m3 0h1m3 0h1m8 0h1m13 0h2m16 0h1m1 0h1m11 0h1m1 0h1m40 0h1m2 0h1m3 0h1m7 0h1m3 0h1m14 0h1m5 0h1m4 0h1m7 0h1m7 0h1m9 0h1m5 0h1m7 0h1m24 0h1m1 0h1m1 0h1m2 0h2m1 0h1m1 0h1m31 0h1M32 176h2m12 0h1m7 0h1m8 0h1m2 0h1m1 0h1m2 0h1m15 0h1m5 0h1m1 0h1m5 0h1m4 0h1m10 0h2m1 0h1m14 0h1m2 0h1m5 0h1m5 0h1m26 0h1m5 0h1m8 0h1m17 0h1m1 0h1m1 0h1m7 0h1m2 0h2m1 0h1m6 0h1m15 0h1m3 0h1m6 0h1m10 0h1m22 0h1m5 0h1m2 0h2m1 0h1m35 0h1m6 0h1m8 0h1m9 0h1m3 0h1m2 0h1m9 0h2m6 0h1m5 0h1m2 0h1m2 0h1m2 0h1m5 0h1m35 0h1m5 0h1m30 0h1m12 0h1m1 0h1m25 0h2m1 0h1m3 0h1m6 0h1m1 0h1m2 0h1m4 0h1m13 0h1m14 0h1m14 0h1m16 0h1M30 177h1m12 0h1m2 0h1m7 0h1m5 0h3m8 0h1m7 0h1m9 0h1m17 0h1m4 0h1m3 0h1m7 0h1m9 0h1m3 0h1m2 0h2m13 0h1m10 0h1m10 0h1m5 0h1m18 0h1m8 0h1m1 0h1m4 0h1m7 0h1m12 0h1m6 0h1m1 0h1m8 0h1m7 0h1m37 0h1m23 0h1m3 0h1m4 0h1m4 0h1m1 0h1m18 0h1m19 0h1m5 0h1m21 0h1m6 0h1m3 0h1m9 0h1m4 0h1m3 0h1m1 0h1m7 0h1m14 0h1m11 0h1m14 0h2m2 0h1m13 0h1m9 0h1m6 0h1m2 0h1m1 0h1m1 0h1m3 0h1m2 0h1m8 0h1m4 0h1m9 0h1m6 0h1m5 0h1m3 0h1m2 0h1m6 0h1m1 0h1m1 0h2m4 0h1m1 0h1m9 0h1m1 0h1M31 178h1m11 0h1m7 0h1m8 0h1m2 0h1m5 0h1m4 0h2m1 0h1m1 0h1m3 0h1m4 0h1m11 0h2m3 0h1m2 0h2m1 0h1m3 0h1m11 0h2m8 0h1m9 0h1m2 0h1m2 0h1m8 0h1m24 0h1m13 0h1m2 0h1m1 0h1m3 0h1m15 0h1m12 0h1m11 0h1m11 0h1m2 0h1m6 0h1m14 0h1m2 0h1m17 0h1m5 0h1m21 0h1m5 0h1m8 0h1m10 0h1m7 0h1m6 0h1m2 0h1m11 0h1m2 0h1m1 0h1m12 0h1m10 0h1m3 0h1m7 0h1m4 0h1m15 0h1m5 0h1m3 0h1m31 0h1m4 0h1m4 0h2m3 0h1m1 0h1m5 0h1m3 0h1m5 0h1m5 0h1m3 0h1m6 0h1m7 0h1m15 0h1m1 0h1m23 0h1m19 0h1M20 179h1m8 0h1m11 0h1m2 0h2m2 0h1m3 0h1m7 0h1m10 0h1m23 0h1m8 0h1m5 0h1m1 0h1m7 0h1m19 0h1m7 0h2m2 0h1m12 0h1m4 0h1m4 0h1m1 0h1m3 0h1m6 0h1m5 0h1m11 0h2m9 0h1m5 0h1m6 0h1m5 0h1m4 0h1m17 0h1m15 0h1m2 0h1m1 0h1m27 0h1m25 0h1m9 0h1m33 0h1m8 0h1m2 0h1m28 0h1m10 0h1m6 0h2m4 0h1m1 0h1m10 0h1m7 0h1m10 0h1m1 0h1m2 0h1m2 0h3m5 0h1m4 0h1m6 0h1m20 0h1m25 0h1m4 0h1m2 0h1m1 0h1m16 0h1m2 0h1m4 0h1m1 0h2m5 0h1m6 0h1m7 0h1M20 180h1m15 0h1m3 0h2m3 0h1m11 0h1m8 0h2m6 0h1m11 0h1m13 0h2m7 0h1m7 0h1m25 0h2m7 0h1m1 0h1m4 0h1m27 0h1m3 0h1m3 0h3m20 0h1m2 0h1m1 0h1m1 0h1m1 0h1m2 0h1m1 0h1m1 0h1m18 0h1m14 0h1m4 0h1m10 0h1m9 0h1m8 0h1m12 0h1m7 0h2m14 0h1m16 0h1m1 0h1m9 0h2m3 0h2m2 0h1m6 0h1m13 0h1m27 0h1m1 0h2m5 0h1m13 0h1m8 0h1m21 0h1m1 0h1m8 0h1m19 0h1m1 0h1m7 0h1m1 0h1m2 0h1m3 0h1m6 0h1m18 0h1m5 0h1m17 0h1m1 0h1m5 0h2m12 0h1m1 0h1M40 181h1m7 0h1m15 0h1m4 0h1m1 0h1m1 0h1m11 0h1m7 0h1m5 0h1m8 0h1m10 0h1m6 0h1m6 0h1m6 0h1m5 0h1m1 0h1m8 0h1m14 0h1m18 0h1m2 0h1m10 0h1m18 0h1m29 0h1m26 0h1m4 0h1m29 0h1m14 0h1m2 0h2m11 0h1m20 0h1m1 0h2m3 0h1m10 0h1m5 0h1m2 0h1m18 0h1m8 0h1m10 0h1m10 0h1m24 0h1m15 0h1m17 0h1m4 0h1m4 0h1m28 0h1m8 0h1m8 0h1m1 0h1m7 0h1m3 0h1m8 0h1m5 0h1m2 0h1m8 0h1m2 0h1M24 182h1m19 0h1m1 0h1m9 0h1m1 0h1m3 0h2m12 0h1m7 0h1m21 0h1m5 0h1m9 0h1m4 0h1m5 0h2m15 0h1m25 0h1m6 0h1m15 0h1m3 0h2m11 0h1m1 0h1m11 0h1m1 0h2m2 0h1m13 0h1m14 0h1m2 0h1m1 0h1m1 0h1m6 0h1m16 0h1m1 0h1m32 0h1m11 0h1m13 0h1m24 0h3m14 0h1m5 0h1m17 0h1m49 0h1m3 0h1m3 0h1m4 0h1m12 0h1m3 0h1m12 0h2m11 0h2m5 0h1m17 0h1m3 0h1m6 0h1m3 0h1m1 0h1m11 0h1m4 0h2m2 0h3m1 0h1m10 0h1m3 0h1M35 183h1m1 0h2m2 0h1m2 0h1m21 0h1m24 0h1m5 0h1m6 0h1m1 0h1m5 0h1m1 0h1m20 0h1m16 0h2m1 0h1m12 0h1m15 0h1m2 0h1m2 0h1m2 0h1m4 0h1m3 0h1m3 0h1m7 0h1m4 0h1m2 0h1m3 0h1m7 0h1m14 0h1m19 0h1m5 0h1m4 0h1m13 0h1m12 0h1m23 0h1m3 0h1m1 0h1m12 0h2m7 0h1m5 0h2m33 0h1m3 0h1m18 0h2m3 0h2m2 0h1m11 0h1m22 0h1m11 0h1m1 0h1m18 0h1m8 0h2m27 0h1m12 0h1m6 0h1m2 0h1m9 0h1m6 0h1m14 0h1m21 0h1m1 0h1M45 184h1m2 0h1m1 0h1m7 0h1m3 0h1m1 0h1m8 0h1m9 0h1m1 0h1m7 0h1m7 0h1m4 0h2m10 0h1m17 0h2m31 0h1m3 0h1m70 0h2m5 0h3m20 0h1m6 0h1m12 0h1m10 0h1m13 0h1m6 0h1m30 0h1m2 0h1m22 0h1m17 0h1m19 0h1m4 0h1m5 0h2m7 0h1m1 0h2m1 0h1m9 0h1m5 0h2m5 0h1m17 0h1m22 0h1m2 0h2m33 0h1m20 0h1m9 0h1m4 0h1m10 0h1m13 0h1M31 185h1m1 0h1m12 0h1m7 0h1m1 0h1m24 0h1m4 0h1m19 0h1m9 0h2m4 0h1m4 0h1m1 0h1m31 0h1m18 0h1m11 0h2m1 0h1m14 0h1m12 0h1m6 0h1m12 0h1m7 0h1m8 0h2m2 0h1m1 0h1m4 0h1m14 0h1m8 0h1m8 0h1m5 0h1m20 0h1m9 0h1m4 0h1m2 0h1m4 0h1m1 0h1m19 0h1m10 0h1m3 0h2m1 0h1m3 0h1m18 0h1m30 0h1m12 0h1m15 0h1m3 0h1m2 0h1m4 0h1m3 0h1m2 0h1m2 0h1m10 0h1m9 0h2m22 0h1m1 0h1m32 0h1m5 0h1m2 0h1m17 0h2m8 0h1M25 186h1m1 0h1m11 0h1m2 0h3m8 0h2m1 0h1m2 0h1m6 0h1m30 0h3m19 0h1m2 0h2m6 0h1m8 0h1m5 0h1m6 0h1m2 0h1m1 0h1m12 0h1m2 0h1m22 0h1m6 0h1m1 0h1m30 0h1m7 0h3m2 0h1m27 0h1m16 0h1m1 0h1m9 0h2m1 0h1m13 0h1m3 0h1m2 0h1m7 0h1m7 0h1m15 0h1m2 0h1m2 0h1m3 0h1m5 0h1m6 0h1m1 0h1m22 0h1m5 0h1m33 0h1m7 0h1m9 0h1m37 0h1m10 0h1m1 0h1m12 0h1m8 0h1m8 0h1m3 0h1m23 0h1m11 0h1m14 0h1M24 187h1m4 0h1m8 0h1m13 0h1m5 0h1m2 0h2m22 0h1m15 0h1m8 0h1m12 0h1m12 0h2m9 0h1m5 0h1m2 0h1m7 0h1m5 0h1m2 0h1m6 0h1m7 0h1m14 0h1m7 0h1m9 0h1m6 0h1m12 0h1m9 0h2m20 0h1m3 0h1m8 0h1m6 0h1m3 0h1m3 0h1m18 0h1m1 0h1m20 0h1m40 0h1m17 0h1m2 0h1m9 0h2m20 0h1m36 0h1m15 0h1m9 0h1m25 0h1m2 0h1m2 0h1m2 0h1m7 0h1m4 0h1m5 0h1m9 0h1m5 0h1m26 0h1M28 188h2m5 0h1m4 0h1m10 0h1m33 0h1m5 0h1m8 0h1m7 0h1m9 0h1m24 0h1m5 0h1m3 0h1m22 0h1m5 0h1m9 0h1m21 0h1m5 0h1m1 0h1m5 0h1m7 0h1m1 0h1m12 0h1m2 0h1m7 0h2m24 0h1m2 0h1m5 0h1m2 0h1m40 0h2m4 0h1m1 0h1m17 0h1m21 0h1m19 0h1m3 0h1m28 0h1m4 0h1m13 0h1m5 0h1m4 0h1m3 0h1m3 0h2m13 0h1m22 0h1m5 0h1m10 0h1m9 0h1m9 0h1m38 0h1m19 0h1m2 0h1M35 189h1m28 0h1m6 0h1m11 0h1m17 0h1m40 0h1m4 0h1m1 0h1m12 0h1m10 0h1m10 0h1m20 0h1m1 0h1m42 0h1m4 0h1m18 0h1m9 0h1m6 0h1m7 0h1m12 0h1m15 0h1m8 0h1m4 0h1m15 0h1m10 0h2m3 0h1m7 0h1m8 0h1m16 0h1m11 0h1m7 0h1m11 0h1m7 0h1m15 0h1m12 0h1m2 0h1m11 0h1m15 0h1m8 0h1m4 0h1m13 0h1m37 0h1m2 0h1m20 0h1m3 0h1m4 0h1M23 190h1m14 0h1m2 0h1m30 0h1m20 0h1m2 0h1m36 0h1m27 0h1m8 0h1m14 0h1m11 0h1m49 0h1m33 0h3m2 0h1m5 0h1m13 0h1m50 0h1m30 0h1m19 0h1m27 0h1m15 0h1m7 0h1m6 0h1m15 0h1m4 0h2m3 0h1m4 0h1m8 0h1m19 0h1m26 0h1m13 0h1m28 0h1M98 191h1m5 0h1m23 0h1m1 0h1m8 0h1m5 0h1m9 0h1m21 0h1m16 0h1m8 0h1m35 0h1m1 0h1m6 0h1m24 0h1m45 0h1m27 0h1m51 0h1m13 0h1m22 0h1m7 0h1m13 0h1m2 0h1m2 0h1m40 0h1m2 0h1m16 0h1m27 0h1m19 0h1m12 0h1m11 0h1M21 192h1m4 0h1m25 0h1m23 0h1m53 0h1m19 0h1m1 0h1m47 0h1m1 0h1m18 0h1m61 0h1m19 0h1m31 0h1m4 0h1m4 0h1m2 0h1m17 0h1m3 0h1m2 0h1m20 0h1m4 0h1m5 0h1m4 0h1m30 0h1m1 0h1m6 0h1m13 0h1m29 0h1m16 0h1m86 0h1m1 0h1M41 193h1m11 0h1m3 0h1m73 0h1m18 0h1m22 0h1m5 0h1m21 0h1m6 0h1m3 0h1m4 0h1m65 0h1m4 0h1m22 0h1m6 0h1m19 0h1m61 0h1m37 0h1m3 0h1m13 0h1m3 0h1m10 0h1m4 0h1m65 0h1m4 0h2m2 0h1m3 0h1m17 0h1m19 0h1m11 0h1m1 0h1M68 194h1m18 0h1m4 0h1m74 0h1m4 0h1m91 0h1m13 0h1m15 0h1m8 0h1m9 0h1m2 0h1m16 0h1m11 0h1m16 0h1m6 0h1m41 0h1m43 0h1m58 0h1m42 0h2m1 0h1m12 0h1m2 0h1m1 0h1m15 0h1m3 0h1m12 0h2m4 0h1M77 195h1m21 0h1m41 0h1m6 0h1m25 0h1m46 0h1m40 0h1m2 0h1m36 0h1m50 0h1m27 0h1m1 0h1m19 0h1m13 0h1m2 0h1m24 0h1m7 0h1m28 0h1m33 0h1m14 0h1m11 0h1m52 0h1M41 196h1m1 0h1m18 0h1m43 0h1m19 0h1m35 0h1m30 0h1m50 0h2m18 0h1m17 0h1m21 0h1m40 0h1m41 0h1m4 0h1m18 0h1m7 0h1m99 0h1m26 0h1m22 0h1m11 0h1m11 0h1m14 0h1M85 197h1m23 0h1m3 0h1m7 0h1m67 0h1m21 0h1m15 0h1m219 0h1m5 0h1m48 0h1m35 0h3M25 198h1m15 0h1m29 0h1m18 0h1m123 0h1m52 0h1m31 0h1m117 0h1m23 0h1m24 0h1m10 0h1m67 0h1m11 0h1m14 0h1M56 199h1m9 0h1m41 0h1m3 0h1m17 0h1m31 0h1m11 0h2m10 0h1m26 0h1m3 0h1m12 0h1m110 0h1m75 0h1m2 0h1m13 0h1m34 0h1m21 0h1m75 0h1M20 200h1m20 0h1m7 0h1m113 0h1m22 0h1m54 0h1m86 0h1m83 0h1m35 0h1m158 0h1M123 201h1m285 0h1m61 0h1m46 0h1m76 0h1"/><path stroke="rgb(0,0,92)" d="M28 80h1m7 0h1m19 0h1m21 0h1m45 0h1m6 0h1m2 0h1m14 0h1m32 0h1m10 0h1m5 0h1m32 0h1m8 0h1m1 0h1m4 0h1m9 0h1m1 0h1m1 0h1m19 0h1m11 0h1m8 0h1m4 0h1m74 0h1m10 0h1m4 0h1m1 0h1m39 0h1m21 0h1m30 0h1m1 0h1m10 0h1m9 0h1m9 0h1m3 0h1m20 0h1m7 0h1m9 0h1m19 0h1m9 0h1m2 0h1m5 0h1M28 81h1m34 0h1m21 0h2m6 0h1m2 0h1m9 0h1m7 0h1m8 0h1m24 0h1m5 0h1m30 0h1m12 0h1m23 0h1m8 0h2m26 0h1m21 0h1m60 0h1m7 0h1m1 0h1m27 0h1m2 0h1m18 0h1m2 0h1m20 0h1m10 0h1m13 0h1m20 0h1m18 0h1m12 0h1m22 0h1m7 0h1m4 0h1m29 0h1m8 0h1m11 0h1m24 0h1M33 82h1m13 0h1m41 0h1m3 0h1m5 0h1m12 0h1m10 0h1m3 0h1m8 0h1m17 0h1m11 0h1m10 0h1m10 0h1m14 0h1m2 0h1m3 0h1m25 0h1m30 0h1m4 0h1m3 0h1m1 0h1m24 0h1m14 0h1m16 0h1m15 0h1m1 0h1m28 0h1m5 0h1m17 0h1m18 0h1m14 0h1m23 0h1m12 0h1m18 0h1m15 0h1m35 0h1m10 0h1m26 0h1M20 83h1m32 0h1m11 0h1m3 0h1m32 0h1m5 0h1m94 0h1m4 0h1m25 0h1m8 0h1m6 0h1m6 0h1m1 0h2m14 0h1m5 0h1m6 0h1m9 0h1m9 0h1m5 0h1m25 0h1m7 0h1m18 0h1m42 0h1m1 0h1m10 0h1m25 0h1m1 0h2m10 0h1m16 0h2m37 0h1m19 0h1m6 0h1m2 0h1m10 0h1m4 0h1m6 0h1m15 0h1m8 0h1m1 0h1m6 0h1M65 84h1m7 0h1m14 0h1m2 0h2m11 0h1m3 0h1m13 0h1m5 0h1m47 0h1m12 0h1m10 0h1m13 0h1m47 0h1m3 0h1m1 0h1m1 0h1m6 0h1m30 0h1m27 0h1m8 0h1m12 0h2m16 0h1m14 0h1m10 0h1m3 0h1m15 0h1m36 0h1m22 0h1m5 0h1m2 0h1m10 0h1m21 0h1m2 0h1m17 0h1m1 0h1m12 0h1m1 0h1m32 0h1M27 85h1m3 0h1m21 0h1m22 0h1m60 0h1m6 0h1m14 0h1m55 0h1m6 0h1m7 0h1m9 0h1m3 0h1m33 0h1m5 0h1m23 0h1m4 0h1m27 0h1m23 0h1m27 0h1m2 0h1m18 0h1m17 0h1m5 0h2m16 0h1m3 0h1m21 0h2m3 0h1m17 0h1m5 0h1m9 0h1m2 0h1m18 0h1m13 0h1m15 0h1m25 0h1M38 86h1m4 0h1m16 0h1m1 0h1m2 0h1m1 0h3m22 0h1m43 0h1m7 0h1m1 0h1m13 0h1m1 0h1m11 0h1m9 0h1m5 0h1m13 0h1m9 0h1m7 0h2m12 0h1m15 0h1m6 0h1m7 0h1m2 0h1m10 0h1m7 0h1m29 0h1m33 0h1m19 0h1m9 0h1m2 0h1m14 0h1m3 0h1m4 0h1m7 0h1m24 0h1m2 0h1m49 0h1m2 0h1m3 0h1m12 0h1m2 0h1m9 0h1m7 0h2m2 0h1M30 87h1m3 0h2m6 0h1m12 0h1m6 0h1m1 0h1m38 0h1m13 0h2m3 0h1m16 0h1m17 0h2m28 0h1m5 0h2m2 0h1m27 0h1m4 0h1m2 0h1m4 0h1m21 0h1m29 0h1m11 0h1m7 0h1m18 0h1m19 0h1m5 0h1m18 0h1m26 0h1m8 0h1m8 0h1m14 0h1m24 0h1m4 0h1m31 0h1m47 0h1m4 0h1m32 0h1m7 0h1m14 0h2M41 88h1m16 0h1m17 0h1m10 0h1m12 0h1m16 0h1m6 0h1m21 0h1m36 0h1m13 0h1m3 0h1m4 0h1m6 0h1m1 0h1m4 0h1m28 0h1m12 0h1m6 0h2m8 0h1m5 0h1m14 0h1m11 0h1m5 0h1m8 0h1m17 0h1m4 0h1m45 0h1m21 0h1m2 0h1m27 0h1m8 0h1m5 0h2m29 0h1m10 0h2m51 0h1m12 0h1m8 0h1m6 0h2M25 89h1m30 0h1m19 0h2m10 0h1m23 0h1m8 0h1m10 0h1m11 0h1m9 0h1m5 0h1m58 0h1m10 0h1m1 0h1m44 0h1m5 0h1m6 0h1m3 0h1m8 0h2m1 0h1m12 0h3m8 0h2m16 0h1m13 0h1m5 0h1m35 0h1m1 0h1m23 0h1m3 0h1m2 0h1m24 0h1m2 0h1m10 0h1m2 0h1m19 0h1m12 0h1m29 0h1m16 0h1m22 0h1m4 0h1M40 90h1m4 0h1m81 0h1m20 0h1m29 0h1m3 0h1m4 0h1m9 0h1m12 0h1m11 0h1m12 0h1m12 0h1m13 0h1m9 0h1m18 0h1m1 0h1m20 0h1m9 0h1m6 0h1m23 0h1m7 0h1m6 0h1m2 0h1m2 0h1m19 0h1m4 0h1m4 0h1m1 0h2m1 0h1m7 0h1m9 0h1m9 0h1m16 0h1m29 0h1m30 0h1m2 0h1m46 0h1m44 0h1M46 91h1m21 0h1m31 0h1m22 0h1m5 0h2m28 0h1m23 0h1m11 0h1m16 0h1m5 0h1m13 0h1m28 0h1m14 0h1m16 0h1m12 0h1m7 0h1m4 0h1m5 0h1m9 0h1m3 0h1m36 0h1m9 0h1m4 0h1m20 0h1m3 0h1m8 0h1m8 0h1m23 0h1m32 0h1m27 0h1m1 0h1m3 0h1m6 0h1m3 0h1m9 0h1m4 0h1m9 0h1m10 0h1M33 92h2m15 0h1m10 0h1m2 0h1m1 0h1m26 0h1m35 0h1m7 0h1m8 0h1m20 0h1m4 0h1m3 0h1m9 0h1m1 0h1m7 0h2m4 0h1m1 0h1m1 0h1m4 0h1m43 0h1m23 0h1m64 0h1m12 0h2m3 0h1m7 0h1m26 0h1m28 0h2m47 0h1m8 0h1m3 0h1m3 0h1m12 0h1m10 0h1m33 0h1m2 0h1m10 0h1m5 0h1m3 0h1m3 0h1m6 0h1M50 93h1m21 0h1m37 0h1m8 0h1m3 0h1m5 0h1m26 0h1m13 0h1m22 0h1m25 0h1m31 0h1m1 0h2m3 0h1m3 0h1m21 0h1m22 0h1m8 0h1m42 0h1m7 0h1m4 0h1m22 0h2m6 0h1m1 0h1m4 0h1m6 0h1m2 0h1m32 0h1m5 0h1m24 0h1m31 0h1m5 0h1m8 0h1m35 0h1m16 0h1m7 0h1M23 94h1m70 0h1m12 0h1m8 0h1m8 0h1m7 0h1m41 0h1m1 0h1m14 0h1m8 0h1m4 0h1m26 0h2m7 0h1m24 0h1m6 0h1m1 0h1m13 0h1m5 0h1m3 0h1m12 0h1m10 0h1m10 0h1m18 0h1m5 0h1m5 0h1m12 0h1m1 0h1m43 0h1m1 0h1m1 0h1m20 0h1m3 0h1m3 0h3m39 0h1m27 0h1m66 0h1M26 95h2m1 0h1m1 0h1m1 0h1m39 0h1m15 0h1m20 0h1m3 0h1m8 0h2m41 0h1m7 0h1m16 0h1m5 0h1m13 0h1m15 0h2m5 0h1m1 0h1m13 0h1m16 0h1m4 0h1m11 0h1m5 0h1m16 0h1m3 0h1m1 0h1m1 0h1m18 0h1m23 0h1m2 0h1m11 0h1m26 0h1m22 0h1m1 0h1m3 0h1m15 0h1m8 0h1m2 0h1m10 0h1m17 0h1m23 0h1m3 0h1m13 0h1m6 0h1m24 0h1m8 0h3m12 0h1m25 0h1m2 0h1M20 96h1m13 0h1m19 0h1m13 0h2m18 0h1m4 0h1m17 0h1m12 0h1m12 0h2m5 0h1m1 0h1m14 0h1m5 0h1m2 0h1m2 0h1m7 0h1m4 0h1m11 0h1m27 0h1m29 0h1m24 0h1m2 0h1m18 0h1m20 0h1m28 0h1m6 0h1m30 0h2m26 0h1m36 0h1m4 0h1m10 0h1m6 0h1m2 0h1m4 0h1m20 0h1m3 0h1m36 0h1m9 0h2m3 0h1m3 0h1m10 0h1m4 0h1m17 0h1m3 0h2m7 0h1M39 97h1m4 0h1m3 0h1m13 0h1m26 0h1m4 0h1m69 0h1m3 0h1m21 0h1m16 0h1m9 0h1m4 0h1m6 0h1m18 0h1m4 0h1m28 0h1m22 0h2m18 0h1m17 0h1m3 0h1m11 0h1m14 0h1m1 0h1m11 0h1m55 0h1m15 0h1m19 0h1m33 0h1m14 0h2m3 0h1m34 0h1m3 0h2m7 0h2m29 0h1M28 98h1m8 0h1m5 0h1m59 0h1m11 0h1m5 0h1m4 0h1m3 0h2m16 0h1m29 0h1m38 0h1m5 0h1m5 0h1m18 0h1m22 0h2m66 0h1m3 0h1m42 0h1m2 0h1m11 0h1m4 0h1m4 0h2m17 0h1m2 0h1m17 0h1m4 0h1m22 0h1m4 0h1m16 0h1m42 0h3m18 0h1m19 0h1m2 0h1m11 0h1M40 99h1m9 0h1m4 0h2m28 0h1m8 0h1m23 0h1m7 0h1m20 0h1m32 0h1m7 0h1m31 0h1m22 0h1m16 0h1m4 0h1m8 0h1m11 0h1m1 0h1m5 0h1m16 0h1m3 0h1m12 0h1m1 0h1m5 0h2m4 0h1m1 0h1m2 0h1m26 0h1m5 0h1m14 0h1m2 0h1m27 0h2m14 0h1m7 0h1m25 0h1m19 0h1m1 0h1m17 0h1m4 0h1m3 0h1m15 0h1m4 0h1m1 0h1m2 0h1m2 0h1m25 0h1m10 0h1m21 0h1M52 100h1m1 0h1m20 0h1m21 0h1m31 0h1m25 0h1m23 0h1m32 0h1m7 0h1m4 0h1m17 0h1m102 0h1m8 0h1m32 0h1m1 0h1m7 0h2m37 0h1m6 0h1m13 0h1m13 0h1m18 0h1m18 0h3m23 0h1m6 0h1m19 0h1m1 0h1m35 0h2m1 0h1M24 101h1m5 0h1m7 0h1m8 0h1m14 0h1m20 0h1m2 0h2m23 0h1m3 0h1m26 0h1m59 0h1m2 0h1m20 0h1m41 0h1m13 0h2m21 0h1m2 0h1m10 0h1m16 0h1m2 0h1m12 0h1m6 0h1m64 0h1m13 0h1m10 0h1m7 0h1m9 0h1m19 0h1m6 0h1m9 0h1m40 0h1m1 0h1m8 0h2m29 0h1m22 0h1m6 0h1M20 102h1m38 0h1m34 0h1m1 0h1m30 0h1m4 0h1m25 0h1m1 0h1m23 0h2m5 0h1m17 0h2m9 0h1m3 0h1m6 0h1m20 0h1m7 0h1m7 0h1m10 0h1m17 0h1m10 0h2m35 0h1m17 0h2m15 0h1m6 0h1m3 0h1m19 0h1m14 0h1m9 0h1m1 0h2m28 0h1m5 0h2m5 0h1m3 0h1m33 0h1m4 0h2m4 0h1m1 0h1m24 0h1m26 0h1m20 0h1M40 103h1m21 0h1m17 0h1m12 0h1m8 0h1m16 0h1m20 0h1m19 0h1m16 0h1m34 0h1m32 0h1m18 0h1m12 0h1m36 0h1m25 0h1m48 0h1m20 0h1m18 0h1m7 0h1m3 0h1m4 0h1m2 0h1m115 0h1m10 0h1m29 0h1M23 104h1m10 0h1m15 0h2m27 0h1m11 0h1m8 0h1m37 0h1m14 0h1m20 0h2m2 0h1m14 0h2m9 0h1m3 0h1m11 0h1m67 0h1m23 0h1m17 0h1m16 0h1m3 0h1m29 0h1m15 0h1m40 0h1m23 0h1m33 0h1m42 0h1m31 0h1m8 0h1M39 105h1m42 0h1m5 0h1m3 0h1m21 0h1m55 0h2m72 0h1m10 0h1m9 0h1m13 0h1m7 0h1m16 0h1m66 0h1m20 0h1m9 0h1m2 0h1m5 0h1m6 0h1m11 0h1m2 0h2m8 0h1m14 0h1m14 0h1m46 0h1m17 0h1m4 0h1m6 0h1m23 0h1m24 0h1M44 106h1m2 0h1m1 0h1m8 0h1m2 0h2m8 0h1m19 0h1m12 0h1m6 0h1m19 0h1m57 0h1m8 0h1m10 0h1m1 0h1m15 0h1m1 0h2m16 0h1m1 0h1m7 0h1m17 0h1m1 0h1m21 0h1m1 0h1m6 0h1m10 0h1m23 0h1m18 0h1m2 0h1m44 0h2m7 0h1m16 0h1m5 0h1m7 0h1m5 0h1m22 0h2m40 0h1m24 0h1m26 0h1m11 0h2m4 0h1m10 0h1m3 0h1m10 0h1M21 107h1m26 0h1m10 0h1m3 0h1m32 0h1m6 0h1m13 0h1m6 0h1m6 0h1m5 0h1m3 0h2m9 0h1m28 0h1m4 0h2m32 0h1m14 0h1m3 0h1m14 0h1m11 0h1m18 0h1m11 0h1m11 0h1m25 0h1m34 0h1m7 0h2m13 0h1m40 0h1m2 0h1m24 0h1m17 0h1m5 0h2m35 0h1m5 0h1m10 0h1m21 0h1m34 0h2m9 0h1M66 108h1m10 0h1m4 0h1m16 0h2m8 0h1m5 0h1m1 0h1m15 0h1m4 0h1m1 0h1m13 0h1m9 0h1m40 0h1m5 0h1m14 0h1m9 0h1m27 0h1m29 0h1m10 0h1m4 0h1m6 0h1m8 0h1m5 0h1m4 0h1m9 0h1m9 0h1m1 0h1m39 0h1m14 0h1m21 0h1m12 0h2m28 0h1m5 0h1m7 0h1m28 0h1m12 0h1m13 0h2m3 0h1m2 0h1m7 0h1m6 0h1m1 0h1m4 0h1M25 109h1m6 0h1m24 0h1m5 0h1m25 0h1m6 0h1m2 0h1m31 0h1m27 0h1m13 0h1m10 0h1m1 0h1m1 0h1m18 0h1m30 0h1m4 0h1m4 0h1m4 0h1m13 0h1m50 0h1m8 0h1m5 0h1m34 0h1m8 0h1m10 0h1m1 0h1m5 0h1m31 0h1m16 0h1m4 0h1m31 0h1m50 0h1m3 0h1m19 0h1m1 0h1m3 0h1m45 0h1m6 0h1M39 110h1m28 0h1m4 0h1m25 0h1m6 0h2m33 0h1m2 0h1m1 0h1m4 0h1m12 0h1m7 0h1m24 0h2m25 0h1m9 0h1m27 0h1m8 0h1m29 0h1m2 0h1m5 0h1m73 0h1m1 0h1m30 0h1m66 0h1m11 0h1m3 0h3m11 0h1m4 0h1m8 0h1m20 0h1m32 0h1m19 0h1M20 111h1m21 0h1m1 0h1m12 0h1m6 0h1m5 0h1m55 0h1m2 0h1m8 0h1m10 0h1m3 0h1m5 0h1m1 0h1m4 0h1m14 0h1m14 0h1m16 0h1m18 0h1m4 0h1m61 0h1m9 0h1m31 0h1m10 0h1m3 0h1m8 0h1m9 0h1m22 0h1m19 0h1m1 0h1m27 0h1m14 0h1m11 0h2m6 0h1m16 0h1m23 0h1m3 0h1m8 0h1m15 0h1m5 0h1m24 0h2m7 0h2m16 0h1M32 112h1m4 0h1m9 0h1m5 0h1m6 0h1m7 0h1m26 0h1m13 0h1m23 0h1m13 0h1m26 0h1m44 0h2m4 0h1m7 0h1m10 0h1m1 0h1m1 0h1m52 0h1m34 0h1m34 0h1m15 0h2m3 0h1m11 0h1m1 0h1m5 0h1m1 0h1m15 0h1m10 0h1m1 0h1m36 0h1m6 0h1m1 0h1m100 0h1M33 113h1m18 0h1m8 0h1m1 0h1m28 0h1m6 0h1m38 0h1m14 0h1m34 0h1m16 0h1m7 0h2m23 0h1m12 0h1m6 0h1m13 0h1m27 0h1m9 0h1m19 0h1m31 0h2m21 0h1m33 0h1m5 0h1m20 0h1m10 0h2m31 0h1m64 0h1m2 0h1m6 0h1m4 0h1m21 0h1m20 0h1M22 114h1m35 0h1m7 0h2m16 0h1m28 0h1m18 0h1m15 0h1m1 0h1m18 0h1m15 0h1m11 0h1m2 0h1m1 0h1m3 0h1m3 0h1m4 0h1m2 0h1m26 0h1m17 0h1m42 0h1m1 0h1m11 0h2m12 0h1m6 0h1m19 0h2m5 0h1m4 0h2m2 0h1m5 0h1m18 0h1m18 0h1m10 0h2m9 0h1m7 0h1m16 0h1m15 0h1m8 0h1m3 0h1m4 0h2m42 0h1m1 0h1m3 0h1m16 0h2m46 0h1M21 115h1m8 0h1m2 0h1m31 0h1m25 0h1m11 0h1m52 0h1m15 0h1m32 0h1m37 0h1m26 0h1m1 0h1m3 0h1m5 0h1m3 0h1m50 0h1m2 0h1m3 0h1m4 0h1m80 0h1m11 0h1m30 0h1m28 0h2m4 0h1m15 0h1m14 0h1m10 0h1m28 0h1m7 0h1m6 0h1m10 0h1M71 116h1m6 0h1m2 0h1m29 0h1m3 0h1m1 0h1m2 0h2m14 0h1m14 0h1m4 0h1m17 0h1m23 0h1m2 0h1m1 0h1m7 0h1m43 0h1m29 0h1m1 0h1m25 0h1m51 0h1m17 0h1m1 0h1m2 0h1m3 0h1m26 0h1m18 0h1m27 0h1m16 0h3m22 0h1m9 0h1m29 0h2m24 0h1m26 0h1m7 0h1m5 0h1M23 117h1m37 0h1m11 0h1m12 0h2m13 0h1m1 0h1m2 0h2m18 0h1m2 0h1m30 0h1m36 0h1m21 0h1m1 0h1m7 0h1m4 0h1m4 0h1m47 0h1m12 0h1m8 0h1m63 0h1m8 0h1m7 0h1m37 0h1m7 0h1m26 0h1m24 0h1m12 0h1m33 0h1m21 0h1m4 0h1m21 0h1m10 0h1M26 118h2m5 0h1m43 0h1m1 0h1m1 0h1m19 0h1m15 0h1m20 0h1m95 0h1m13 0h1m4 0h1m17 0h1m34 0h1m29 0h1m6 0h1m22 0h1m78 0h1m2 0h1m6 0h1m3 0h1m2 0h1m19 0h1m36 0h1m42 0h2m14 0h1m15 0h2m3 0h1m4 0h1m2 0h1m3 0h1M20 119h1m28 0h1m24 0h2m9 0h1m4 0h1m2 0h1m8 0h1m11 0h1m19 0h1m2 0h1m37 0h1m46 0h1m8 0h1m6 0h1m18 0h1m7 0h1m2 0h1m13 0h1m6 0h1m2 0h2m3 0h1m6 0h1m21 0h1m4 0h1m25 0h1m21 0h1m6 0h1m18 0h1m22 0h2m12 0h2m3 0h1m1 0h1m17 0h1m7 0h2m17 0h1m45 0h1m1 0h1m6 0h1m43 0h2m5 0h1m12 0h1M25 120h1m10 0h1m27 0h1m2 0h1m4 0h1m11 0h1m66 0h1m2 0h1m26 0h1m10 0h1m28 0h2m41 0h1m23 0h1m13 0h1m13 0h1m2 0h1m5 0h1m46 0h1m7 0h1m24 0h1m9 0h1m50 0h1m26 0h1m4 0h1m3 0h1m6 0h2m80 0h1m5 0h2m11 0h1M27 121h1m17 0h1m43 0h1m17 0h1m4 0h1m1 0h1m51 0h1m17 0h1m78 0h1m8 0h1m1 0h1m14 0h1m5 0h1m21 0h1m19 0h1m4 0h1m36 0h1m8 0h1m11 0h1m8 0h1m22 0h1m5 0h1m35 0h1m1 0h1m2 0h1m5 0h1m14 0h1m40 0h1m16 0h1m24 0h1m10 0h1m22 0h1M27 122h1m15 0h2m8 0h1m14 0h1m1 0h1m6 0h1m2 0h1m16 0h1m26 0h1m39 0h1m19 0h1m5 0h1m7 0h1m36 0h1m35 0h1m2 0h1m2 0h1m24 0h1m11 0h1m3 0h1m7 0h1m22 0h1m30 0h1m12 0h1m19 0h1m23 0h1m41 0h1m1 0h1m18 0h1m19 0h1m1 0h1m45 0h1m4 0h1m6 0h1m5 0h1M39 123h1m35 0h1m4 0h1m1 0h1m1 0h1m22 0h2m22 0h1m16 0h1m3 0h1m5 0h1m27 0h1m16 0h1m16 0h1m6 0h1m33 0h1m20 0h1m13 0h1m20 0h1m30 0h1m4 0h1m24 0h1m5 0h1m7 0h1m18 0h1m22 0h1m6 0h1m6 0h1m16 0h1m15 0h1m3 0h1m19 0h1m38 0h2m5 0h1M47 124h1m18 0h1m1 0h1m7 0h1m9 0h1m5 0h1m14 0h1m23 0h1m17 0h1m4 0h1m34 0h1m21 0h1m60 0h1m3 0h1m17 0h1m4 0h1m8 0h1m3 0h1m18 0h1m17 0h1m5 0h1m3 0h1m88 0h1m9 0h1m28 0h1m38 0h1m28 0h1m1 0h1m1 0h1m2 0h1m8 0h1m26 0h1m8 0h1m2 0h1M31 125h1m4 0h1m17 0h1m9 0h1m2 0h2m10 0h1m16 0h1m48 0h1m10 0h1m9 0h1m23 0h1m27 0h1m2 0h1m10 0h1m30 0h1m10 0h1m17 0h1m32 0h1m17 0h1m8 0h1m11 0h1m34 0h1m1 0h1m23 0h1m7 0h1m14 0h1m3 0h1m6 0h1m32 0h1m19 0h1m1 0h1m6 0h1m6 0h1m32 0h1m10 0h1m10 0h1m30 0h1M32 126h1m6 0h1m8 0h1m5 0h1m9 0h1m28 0h1m4 0h1m23 0h1m8 0h1m58 0h1m33 0h1m8 0h1m9 0h1m3 0h1m3 0h1m24 0h1m25 0h1m5 0h1m3 0h1m17 0h1m67 0h1m5 0h1m8 0h1m7 0h1m16 0h1m10 0h1m5 0h1m48 0h1m7 0h1m19 0h1m9 0h1m10 0h1m3 0h1m29 0h1m6 0h1m18 0h1M76 127h1m18 0h1m40 0h1m25 0h1m23 0h1m7 0h1m24 0h2m47 0h1m8 0h1m45 0h1m22 0h1m17 0h1m1 0h1m19 0h1m5 0h1m5 0h2m62 0h1m21 0h1m33 0h1m2 0h1m2 0h1m8 0h2m27 0h1m7 0h1m19 0h1m9 0h1m10 0h1M29 128h1m12 0h1m22 0h1m40 0h1m19 0h1m2 0h1m34 0h1m2 0h1m27 0h1m14 0h1m50 0h2m23 0h1m36 0h1m37 0h1m46 0h1m13 0h1m9 0h1m3 0h1m23 0h1m32 0h1m31 0h1m5 0h1m20 0h1m8 0h1m13 0h1m37 0h1M21 129h1m9 0h1m25 0h1m7 0h1m42 0h2m19 0h1m7 0h1m14 0h1m2 0h1m16 0h1m10 0h1m37 0h1m3 0h1m3 0h1m5 0h1m1 0h1m27 0h1m18 0h2m21 0h1m1 0h1m1 0h1m15 0h1m34 0h1m41 0h1m10 0h1m58 0h1m21 0h1m47 0h1m20 0h1m6 0h2m37 0h1M50 130h1m15 0h1m22 0h1m15 0h1m4 0h1m56 0h1m7 0h1m24 0h2m18 0h1m23 0h1m8 0h1m14 0h1m12 0h1m16 0h1m1 0h1m2 0h1m30 0h1m29 0h1m36 0h1m21 0h1m3 0h1m3 0h1m20 0h1m20 0h1m12 0h1m7 0h1m12 0h1m7 0h1m13 0h2m51 0h1m14 0h1M23 131h1m8 0h1m10 0h1m18 0h1m1 0h1m11 0h1m21 0h1m7 0h1m10 0h1m17 0h1m2 0h1m41 0h1m24 0h1m24 0h1m7 0h1m19 0h1m23 0h1m12 0h1m30 0h1m8 0h2m3 0h1m11 0h1m1 0h1m8 0h1m9 0h2m4 0h1m12 0h1m3 0h1m5 0h1m5 0h1m48 0h1m26 0h1m16 0h1m67 0h1m6 0h1m16 0h1M24 132h1m3 0h1m5 0h1m18 0h1m29 0h1m32 0h1m2 0h1m28 0h1m2 0h1m52 0h1m60 0h1m1 0h1m59 0h1m37 0h1m8 0h1m6 0h1m4 0h1m26 0h1m13 0h1m2 0h2m2 0h1m1 0h1m1 0h2m34 0h1m42 0h1m8 0h1m18 0h1m14 0h1m50 0h1M32 133h1m18 0h1m32 0h1m49 0h1m21 0h1m10 0h1m12 0h1m35 0h1m18 0h1m17 0h1m9 0h1m56 0h1m4 0h1m5 0h1m23 0h1m12 0h2m111 0h1m4 0h1m15 0h1m21 0h1m1 0h1m34 0h1m4 0h1m11 0h1m4 0h1m29 0h1M86 134h1m34 0h1m49 0h1m17 0h1m9 0h1m9 0h1m2 0h1m42 0h1m23 0h1m17 0h1m8 0h2m6 0h1m16 0h1m22 0h2m30 0h1m2 0h1m5 0h1m2 0h1m6 0h1m4 0h1m22 0h1m13 0h1m19 0h1m12 0h1m2 0h1m16 0h1m17 0h1m22 0h1m37 0h2m3 0h1m8 0h1M26 135h1m7 0h1m2 0h1m13 0h1m30 0h1m21 0h1m78 0h1m6 0h1m43 0h3m91 0h2m2 0h1m27 0h1m26 0h1m3 0h1m4 0h1m13 0h1m13 0h1m25 0h2m31 0h1m4 0h1m12 0h1m18 0h1m25 0h1m8 0h1m6 0h1m12 0h1m21 0h1m5 0h1m7 0h1M45 136h2m20 0h1m26 0h1m82 0h1m31 0h1m11 0h1m34 0h1m24 0h2m23 0h1m9 0h1m13 0h1m6 0h2m4 0h1m5 0h1m34 0h1m6 0h1m26 0h1m27 0h1m70 0h1m10 0h2m10 0h1m22 0h1m26 0h1m5 0h1m6 0h1M24 137h1m8 0h1m5 0h2m1 0h1m32 0h1m27 0h1m22 0h1m80 0h1m13 0h1m9 0h2m34 0h1m26 0h1m15 0h1m42 0h1m43 0h1m9 0h1m20 0h1m13 0h1m20 0h1m9 0h1m25 0h1m1 0h1m41 0h1m6 0h1m20 0h1m13 0h1m9 0h1m2 0h1m3 0h1M52 138h1m33 0h1m5 0h2m6 0h1m6 0h1m44 0h1m5 0h1m60 0h1m39 0h1m35 0h1m31 0h1m6 0h1m84 0h1m6 0h1m11 0h1m3 0h1m50 0h1m6 0h1m23 0h1m13 0h1m10 0h2m7 0h1m9 0h1M62 139h1m33 0h1m75 0h1m5 0h1m2 0h1m1 0h1m25 0h1m9 0h1m58 0h1m32 0h1m6 0h1m56 0h1m54 0h1m2 0h1m14 0h1m87 0h2m18 0h1m23 0h1m2 0h1m19 0h1M35 140h1m11 0h1m15 0h1m48 0h1m9 0h1m2 0h1m32 0h1m25 0h1m35 0h1m37 0h1m1 0h1m24 0h1m6 0h2m24 0h1m3 0h2m4 0h1m2 0h1m13 0h1m15 0h1m49 0h1m15 0h1m4 0h1m7 0h2m4 0h1m25 0h1m3 0h1m68 0h2m48 0h1m8 0h1M22 141h1m27 0h1m3 0h1m13 0h1m16 0h1m24 0h1m30 0h1m2 0h1m7 0h2m12 0h1m6 0h1m1 0h1m5 0h1m23 0h1m1 0h1m145 0h1m3 0h1m8 0h1m4 0h1m8 0h1m7 0h1m6 0h1m22 0h1m2 0h1m5 0h1m18 0h1m3 0h1m2 0h1m21 0h1m1 0h1m31 0h1m25 0h1m7 0h1m17 0h1m24 0h1m14 0h1M79 142h1m14 0h1m4 0h1m173 0h1m18 0h1m4 0h1m32 0h1m10 0h1m15 0h1m15 0h1m21 0h1m44 0h1m3 0h1m8 0h1m15 0h1m27 0h1m25 0h1m2 0h1m8 0h1m36 0h1m10 0h1M46 143h1m8 0h2m29 0h3m2 0h1m24 0h1m40 0h2m28 0h1m6 0h1m24 0h1m13 0h1m34 0h1m17 0h1m21 0h1m50 0h1m43 0h1m23 0h1m20 0h1m4 0h1m14 0h1m3 0h1m10 0h1m10 0h1m16 0h1m21 0h1m3 0h1m10 0h1m25 0h1m16 0h1M43 144h1m24 0h1m12 0h1m9 0h1m14 0h1m1 0h1m5 0h1m1 0h1m2 0h1m26 0h1m12 0h1m6 0h1m19 0h1m51 0h1m46 0h1m36 0h1m13 0h2m2 0h1m20 0h1m3 0h1m2 0h1m11 0h1m7 0h1m13 0h1m45 0h1m33 0h1m6 0h2m3 0h1m8 0h2m2 0h1m50 0h1m9 0h1m14 0h1m19 0h1M20 145h1m15 0h1m1 0h1m18 0h1m35 0h1m12 0h2m19 0h1m11 0h1m9 0h1m39 0h1m25 0h1m17 0h1m39 0h1m48 0h1m13 0h1m2 0h1m41 0h1m59 0h1m12 0h1m36 0h2m6 0h1m3 0h1m10 0h1m10 0h1m7 0h1m2 0h1m7 0h1m3 0h1m15 0h1m9 0h1M35 146h2m3 0h1m21 0h1m11 0h1m14 0h1m26 0h1m21 0h1m34 0h1m62 0h1m3 0h1m32 0h1m9 0h1m19 0h1m10 0h1m30 0h1m5 0h1m24 0h1m36 0h1m34 0h1m25 0h1m5 0h1m29 0h1m10 0h1m2 0h1m28 0h1m18 0h1m39 0h1M31 147h1m13 0h1m3 0h1m31 0h1m15 0h1m75 0h1m11 0h1m8 0h1m7 0h1m9 0h1m9 0h1m3 0h1m14 0h1m52 0h1m5 0h1m3 0h1m33 0h1m11 0h1m8 0h1m12 0h1m9 0h1m14 0h1m18 0h1m29 0h1m7 0h2m31 0h1m22 0h1m10 0h1m13 0h1m5 0h1m24 0h1M24 148h1m33 0h1m62 0h1m2 0h1m25 0h1m17 0h1m20 0h1m3 0h1m8 0h1m31 0h2m35 0h1m81 0h1m15 0h1m1 0h1m20 0h1m4 0h1m34 0h1m7 0h1m18 0h2m18 0h1m45 0h1m45 0h2m9 0h1m2 0h1M28 149h1m44 0h1m40 0h1m5 0h1m4 0h2m34 0h1m10 0h1m37 0h1m5 0h1m7 0h1m24 0h1m31 0h1m20 0h1m22 0h1m16 0h1m1 0h1m1 0h1m8 0h2m3 0h1m6 0h1m45 0h1m2 0h1m11 0h1m28 0h1m18 0h1m33 0h1m19 0h1m8 0h1m42 0h1M78 150h1m8 0h1m40 0h1m46 0h3m5 0h1m1 0h1m6 0h1m17 0h1m10 0h1m9 0h1m4 0h1m6 0h1m21 0h1m30 0h1m1 0h1m5 0h1m8 0h1m6 0h1m38 0h1m4 0h2m33 0h1m4 0h1m1 0h1m36 0h1m9 0h1m15 0h1m4 0h1m38 0h1m23 0h1m2 0h1m62 0h1M31 151h1m6 0h1m8 0h1m28 0h1m70 0h1m37 0h1m13 0h1m3 0h2m20 0h1m3 0h2m27 0h1m38 0h1m17 0h1m34 0h1m6 0h1m11 0h1m2 0h1m5 0h1m12 0h1m17 0h1m17 0h1m18 0h1m3 0h1m8 0h1m1 0h1m5 0h1m26 0h1m11 0h1m22 0h1m10 0h1M43 152h1m16 0h1m54 0h1m12 0h2m7 0h1m28 0h2m34 0h1m54 0h1m16 0h1m3 0h1m3 0h2m1 0h1m11 0h1m36 0h1m22 0h1m16 0h1m26 0h1m31 0h1m22 0h1m12 0h1m39 0h1m9 0h1m24 0h1m36 0h1m35 0h1M20 153h1m22 0h1m35 0h1m29 0h1m39 0h1m35 0h1m5 0h1m35 0h1m7 0h1m31 0h1m11 0h1m72 0h1m13 0h1m26 0h1m29 0h1m13 0h1m14 0h1m15 0h1m31 0h1m5 0h1m43 0h2m5 0h1m18 0h1m16 0h1m4 0h1M48 154h1m42 0h1m8 0h1m18 0h1m8 0h2m53 0h1m8 0h1m2 0h1m17 0h1m4 0h1m1 0h1m17 0h1m18 0h1m4 0h1m22 0h1m17 0h1m5 0h1m33 0h1m19 0h1m9 0h1m1 0h1m1 0h1m12 0h2m40 0h1m16 0h1m7 0h1m10 0h1m19 0h1m10 0h1m30 0h2m3 0h1m16 0h1m34 0h1m6 0h1m4 0h1m10 0h1M28 155h1m10 0h1m61 0h1m33 0h1m20 0h1m1 0h1m15 0h1m2 0h1m5 0h1m22 0h1m60 0h1m28 0h1m47 0h1m7 0h1m48 0h1m9 0h1m15 0h1m10 0h1m20 0h1m43 0h1m44 0h1m2 0h2m13 0h1m4 0h1m12 0h1m1 0h1m7 0h1m9 0h1M81 156h1m58 0h1m39 0h1m8 0h1m7 0h1m2 0h1m46 0h1m52 0h1m82 0h1m39 0h1m10 0h1m44 0h1m16 0h1m19 0h1m33 0h1m26 0h1m1 0h1m16 0h1M28 157h1m28 0h1m81 0h1m24 0h1m20 0h1m1 0h1m25 0h1m11 0h1m27 0h1m15 0h1m18 0h1m8 0h1m11 0h1m6 0h1m5 0h1m11 0h1m15 0h1m64 0h1m48 0h1m16 0h1m18 0h1m15 0h1m4 0h1m2 0h1m16 0h1m5 0h1m3 0h1m33 0h1m29 0h1M65 158h1m30 0h1m35 0h1m26 0h1m1 0h1m40 0h1m29 0h1m17 0h2m2 0h1m12 0h1m212 0h1m9 0h1m48 0h1m22 0h1m4 0h1m9 0h1m6 0h2M52 159h1m31 0h1m19 0h1m15 0h1m1 0h1m15 0h1m45 0h1m38 0h1m35 0h1m14 0h1m5 0h1m15 0h1m15 0h1m1 0h1m2 0h1m6 0h2m10 0h1m18 0h1m16 0h1m2 0h1m9 0h1m38 0h1m1 0h1m16 0h2m23 0h1m7 0h1m22 0h1m32 0h1m4 0h1m1 0h1m7 0h1m31 0h1M26 160h1m33 0h1m46 0h1m34 0h1m19 0h1m4 0h1m6 0h1m7 0h1m14 0h1m64 0h1m52 0h1m58 0h1m3 0h1m6 0h1m23 0h1m6 0h1m89 0h1m19 0h1m33 0h1m4 0h1m6 0h1m22 0h1m9 0h1M27 161h1m10 0h1m89 0h1m17 0h1m18 0h1m7 0h1m24 0h1m9 0h1m8 0h1m21 0h1m51 0h1m45 0h1m11 0h1m24 0h1m6 0h1m35 0h1m11 0h1m4 0h1m14 0h1m18 0h1m4 0h1m32 0h1m32 0h1m10 0h1m30 0h1m14 0h1M64 162h1m69 0h1m2 0h1m49 0h1m6 0h1m62 0h1m33 0h1m48 0h1m34 0h1m5 0h1m27 0h1m1 0h1m16 0h1m9 0h1m6 0h1m8 0h1m32 0h1m12 0h1m4 0h1m24 0h2m6 0h1m11 0h1m3 0h1m16 0h1m1 0h1m33 0h2m7 0h1M65 163h1m3 0h1m27 0h1m25 0h1m1 0h1m9 0h1m2 0h2m8 0h1m7 0h1m34 0h1m33 0h1m49 0h2m23 0h1m2 0h1m9 0h1m40 0h1m61 0h1m1 0h1m13 0h2m12 0h1m8 0h1m6 0h1m3 0h1m19 0h1m7 0h1m19 0h1m51 0h1m34 0h1m6 0h1m3 0h1m2 0h1M25 164h1m9 0h1m16 0h1m31 0h1m5 0h1m11 0h1m15 0h1m10 0h1m30 0h1m42 0h1m2 0h1m24 0h1m2 0h1m9 0h1m14 0h1m26 0h1m1 0h1m3 0h1m10 0h1m9 0h1m43 0h1m13 0h1m12 0h1m6 0h1m29 0h1m16 0h1m161 0h1m5 0h1M26 165h1m11 0h1m48 0h1m14 0h1m43 0h1m32 0h1m35 0h1m17 0h1m30 0h1m11 0h1m49 0h1m20 0h1m15 0h1m14 0h1m26 0h1m10 0h1m5 0h1m2 0h1m58 0h1m3 0h1m71 0h2M79 166h1m7 0h1m23 0h1m37 0h1m8 0h1m16 0h1m1 0h1m9 0h1m81 0h1m12 0h1m4 0h1m49 0h1m18 0h1m2 0h1m7 0h1m26 0h1m2 0h1m14 0h1m10 0h1m22 0h1m15 0h1m40 0h1m27 0h1m18 0h1m34 0h1M21 167h1m6 0h1m2 0h1m3 0h1m17 0h1m64 0h1m51 0h1m32 0h1m69 0h1m20 0h1m88 0h1m6 0h1m2 0h1m35 0h1m9 0h1m10 0h1m3 0h1m5 0h1m31 0h1m71 0h1m5 0h1m4 0h1m2 0h2m6 0h1M42 168h1m16 0h1m28 0h1m1 0h1m4 0h2m23 0h1m58 0h1m29 0h1m11 0h1m8 0h1m53 0h1m10 0h1m45 0h1m9 0h1m45 0h1m5 0h1m7 0h1m23 0h1m27 0h1m17 0h1m27 0h1m51 0h1m16 0h1M36 169h1m36 0h1m35 0h1m39 0h1m1 0h1m3 0h1m4 0h1m16 0h1m6 0h1m3 0h1m7 0h1m13 0h1m21 0h1m5 0h1m6 0h1m8 0h1m6 0h2m28 0h1m23 0h1m4 0h1m2 0h1m13 0h1m17 0h1m28 0h1m21 0h1m6 0h1m8 0h1m8 0h1m11 0h1m24 0h1m8 0h1m3 0h1m10 0h1m3 0h1m63 0h1m47 0h1M23 170h1m78 0h1m11 0h1m37 0h1m17 0h1m26 0h1m7 0h1m14 0h1m9 0h1m11 0h1m18 0h1m1 0h1m7 0h1m16 0h1m1 0h1m7 0h1m7 0h1m23 0h1m17 0h1m40 0h1m10 0h1m22 0h1m3 0h1m7 0h1m1 0h1m34 0h1m40 0h1m33 0h1m1 0h1m5 0h1m33 0h1M32 171h1m11 0h1m20 0h1m12 0h1m26 0h1m4 0h1m7 0h1m13 0h1m14 0h1m80 0h1m36 0h1m7 0h1m61 0h1m7 0h1m19 0h1m6 0h2m57 0h1m21 0h1m6 0h1m45 0h1m32 0h1m39 0h1m16 0h1M43 172h1m40 0h1m3 0h1m3 0h1m2 0h1m31 0h1m3 0h1m39 0h1m16 0h2m16 0h1m3 0h1m9 0h1m13 0h1m9 0h1m13 0h1m13 0h1m18 0h2m23 0h1m3 0h1m6 0h1m19 0h1m9 0h1m25 0h1m66 0h1m1 0h1m17 0h1m25 0h1m9 0h1m1 0h1m2 0h1m11 0h1m4 0h1m12 0h1m10 0h1m21 0h1M24 173h1m11 0h1m11 0h1m19 0h1m39 0h1m5 0h1m9 0h1m23 0h1m22 0h1m25 0h1m34 0h1m62 0h1m2 0h1m29 0h1m1 0h1m42 0h1m4 0h1m14 0h2m29 0h1m19 0h2m27 0h1m1 0h1m4 0h1m12 0h1m1 0h1m2 0h1m3 0h1m22 0h1m6 0h1m16 0h1m13 0h1m16 0h1m3 0h1m7 0h1M25 174h1m26 0h1m1 0h1m10 0h1m31 0h1m5 0h1m1 0h1m54 0h1m16 0h1m9 0h1m3 0h1m33 0h1m37 0h1m23 0h1m46 0h3m6 0h1m40 0h1m28 0h1m9 0h1m32 0h1m15 0h1m37 0h1m11 0h1m68 0h1m8 0h1M47 175h1m21 0h2m52 0h1m2 0h1m17 0h1m35 0h1m31 0h1m7 0h1m9 0h1m18 0h1m34 0h1m16 0h1m34 0h1m31 0h1m54 0h1m60 0h1m8 0h1m36 0h1m45 0h1m9 0h1m1 0h1m5 0h1m1 0h1m6 0h1M58 176h1m41 0h1m3 0h1m6 0h1m10 0h1m8 0h1m39 0h1m27 0h1m1 0h1m21 0h1m6 0h1m17 0h1m55 0h1m4 0h1m8 0h1m4 0h1m1 0h1m24 0h1m2 0h1m9 0h1m5 0h1m19 0h1m16 0h1m2 0h1m9 0h2m10 0h1m8 0h1m8 0h1m3 0h1m9 0h1m7 0h1m4 0h1m71 0h1m13 0h1m4 0h1m8 0h1m19 0h1m8 0h1M41 177h1m24 0h2m9 0h1m9 0h1m14 0h1m2 0h1m12 0h1m25 0h1m45 0h1m25 0h1m7 0h1m3 0h1m45 0h1m27 0h1m2 0h1m10 0h1m56 0h1m31 0h1m19 0h2m30 0h1m25 0h1m23 0h2m9 0h1m30 0h1m5 0h1m4 0h1m8 0h1m34 0h1M56 178h1m49 0h1m24 0h1m3 0h1m8 0h1m10 0h1m10 0h1m6 0h1m5 0h1m29 0h1m7 0h1m2 0h1m16 0h2m11 0h1m19 0h1m15 0h1m12 0h1m2 0h1m31 0h2m11 0h1m29 0h1m1 0h1m9 0h1m18 0h1m6 0h1m5 0h1m30 0h1m1 0h1m63 0h1m12 0h1m19 0h1m10 0h2m10 0h1m2 0h2m7 0h1m15 0h1m4 0h1m2 0h1M24 179h1m5 0h2m22 0h1m10 0h1m37 0h1m9 0h1m15 0h1m41 0h2m10 0h1m15 0h2m11 0h1m1 0h1m7 0h1m2 0h1m2 0h1m4 0h1m4 0h1m7 0h1m10 0h1m2 0h1m1 0h1m22 0h1m6 0h1m50 0h1m11 0h1m23 0h1m6 0h1m6 0h1m19 0h1m7 0h1m24 0h1m8 0h1m16 0h1m19 0h1m23 0h1m31 0h1m2 0h1m7 0h1m32 0h1M34 180h1m11 0h1m11 0h1m14 0h1m8 0h1m12 0h1m7 0h1m2 0h1m6 0h1m9 0h1m7 0h2m4 0h1m7 0h1m9 0h1m1 0h1m16 0h1m14 0h1m20 0h1m2 0h1m40 0h1m6 0h1m9 0h1m4 0h2m3 0h1m3 0h1m10 0h1m16 0h1m3 0h1m1 0h1m2 0h1m3 0h1m14 0h1m8 0h1m15 0h1m5 0h1m10 0h1m11 0h1m27 0h1m61 0h1m7 0h1m4 0h1m8 0h1m3 0h1m8 0h1m9 0h1m9 0h1m5 0h1m6 0h1m6 0h1m10 0h1m29 0h1m2 0h1m3 0h1M49 181h1m29 0h1m8 0h1m21 0h1m6 0h2m41 0h1m1 0h1m2 0h2m18 0h1m3 0h1m9 0h1m6 0h1m3 0h1m1 0h1m7 0h1m4 0h1m71 0h1m9 0h1m45 0h1m3 0h1m4 0h1m15 0h1m37 0h1m12 0h2m42 0h1m1 0h1m14 0h2m10 0h1m9 0h2m27 0h1M22 182h1m25 0h1m11 0h1m18 0h1m11 0h1m18 0h1m5 0h1m6 0h2m33 0h2m4 0h1m21 0h1m11 0h1m6 0h1m75 0h1m23 0h1m17 0h1m9 0h1m10 0h1m23 0h1m53 0h1m9 0h1m5 0h1m39 0h1m3 0h1m7 0h1m22 0h1m8 0h1m9 0h1m8 0h1m21 0h1m34 0h1m3 0h1m12 0h1M20 183h1m6 0h1m25 0h1m41 0h1m17 0h1m20 0h1m6 0h1m9 0h1m5 0h1m16 0h1m78 0h1m5 0h1m3 0h1m14 0h1m20 0h1m34 0h1m1 0h1m19 0h1m3 0h1m3 0h1m13 0h1m10 0h1m21 0h1m82 0h1m12 0h2m3 0h1m8 0h1m4 0h3m7 0h1m67 0h1m5 0h1M21 184h1m9 0h1m56 0h1m6 0h1m2 0h1m29 0h1m9 0h1m4 0h1m1 0h1m10 0h1m4 0h1m39 0h1m34 0h1m21 0h1m4 0h1m31 0h2m23 0h1m3 0h1m10 0h1m37 0h1m41 0h1m89 0h1m10 0h1m5 0h1m16 0h1m1 0h1m4 0h1m19 0h1m10 0h1m9 0h1m8 0h1M38 185h1m22 0h1m12 0h1m16 0h2m2 0h1m11 0h1m12 0h1m10 0h2m4 0h2m1 0h1m9 0h1m13 0h1m3 0h1m20 0h1m1 0h1m78 0h1m5 0h1m5 0h1m36 0h1m22 0h1m21 0h1m1 0h1m5 0h1m4 0h1m22 0h1m1 0h1m1 0h1m20 0h1m11 0h1m19 0h1m12 0h1m15 0h1m11 0h1m14 0h1m29 0h1m9 0h1m21 0h1M20 186h1m9 0h1m4 0h1m4 0h1m20 0h1m18 0h2m5 0h1m16 0h1m2 0h1m8 0h1m15 0h1m20 0h1m14 0h1m26 0h1m3 0h1m29 0h1m4 0h1m8 0h1m6 0h1m28 0h1m8 0h1m1 0h1m11 0h1m2 0h1m33 0h1m34 0h1m4 0h1m3 0h1m2 0h1m60 0h1m39 0h1m2 0h1m13 0h1m9 0h1m7 0h1m8 0h1m13 0h1m3 0h1m1 0h1m1 0h1m2 0h1m9 0h1m14 0h1m2 0h1m2 0h1m6 0h1m5 0h2M44 187h1m2 0h1m44 0h1m19 0h1m7 0h1m23 0h1m1 0h1m35 0h1m40 0h1m25 0h1m38 0h1m7 0h1m14 0h1m22 0h2m15 0h1m12 0h1m6 0h1m39 0h1m2 0h1m3 0h1m35 0h1m24 0h1m9 0h1m11 0h1m5 0h1m23 0h1m13 0h1m1 0h1m2 0h1m8 0h1m12 0h1m4 0h1m5 0h1m6 0h1m5 0h1m9 0h1m5 0h1M20 188h1m58 0h1m30 0h1m47 0h1m20 0h1m7 0h1m10 0h1m18 0h1m12 0h1m8 0h1m13 0h1m44 0h1m36 0h1m3 0h1m12 0h1m10 0h1m2 0h1m1 0h1m1 0h1m21 0h1m8 0h1m3 0h1m6 0h1m16 0h1m2 0h1m11 0h1m5 0h1m8 0h1m24 0h1m13 0h2m3 0h1m23 0h1m8 0h2m9 0h1m8 0h1m19 0h1m10 0h1m24 0h1M22 189h1m2 0h1m13 0h1m4 0h1m17 0h1m43 0h1m5 0h1m28 0h1m72 0h1m14 0h1m12 0h1m3 0h1m9 0h1m20 0h1m55 0h1m21 0h1m10 0h1m13 0h1m5 0h2m5 0h1m11 0h1m45 0h1m15 0h1m4 0h1m10 0h1m10 0h1m8 0h1m5 0h1m5 0h1m18 0h1m3 0h1m33 0h1m3 0h1m39 0h1M71 190h1m8 0h2m1 0h1m31 0h1m11 0h1m2 0h1m11 0h1m57 0h1m10 0h1m2 0h1m25 0h1m1 0h1m13 0h1m4 0h1m5 0h1m5 0h1m14 0h1m14 0h1m49 0h1m20 0h1m4 0h1m10 0h1m3 0h1m11 0h1m4 0h1m5 0h1m5 0h1m1 0h1m17 0h1m29 0h1m2 0h1m7 0h1m25 0h1m3 0h1m7 0h1m17 0h1m7 0h1m35 0h1m8 0h1m8 0h1m4 0h1m1 0h1M27 191h2m1 0h1m4 0h1m30 0h2m1 0h1m6 0h1m15 0h1m18 0h1m36 0h1m2 0h1m24 0h1m34 0h1m5 0h1m9 0h1m30 0h1m1 0h1m6 0h1m1 0h1m6 0h1m10 0h1m3 0h1m9 0h1m12 0h1m54 0h1m16 0h1m7 0h1m1 0h1m3 0h3m26 0h1m15 0h1m9 0h1m10 0h1m14 0h1m4 0h1m5 0h2m15 0h1m16 0h1m10 0h1m45 0h1m8 0h1m10 0h1M27 192h1m10 0h1m3 0h1m2 0h1m21 0h1m16 0h1m31 0h1m6 0h1m1 0h1m49 0h1m1 0h1m3 0h1m26 0h1m3 0h1m24 0h1m4 0h1m7 0h1m4 0h1m2 0h1m12 0h2m1 0h2m28 0h1m2 0h1m12 0h1m5 0h1m4 0h1m2 0h1m12 0h1m1 0h1m7 0h1m5 0h1m44 0h1m9 0h1m7 0h1m3 0h1m4 0h1m10 0h1m2 0h1m26 0h1m4 0h1m3 0h1m24 0h1m2 0h1m16 0h1m29 0h1m2 0h1m5 0h1m4 0h1m7 0h1m1 0h1m7 0h2m7 0h1m13 0h2M27 193h1m32 0h1m5 0h1m12 0h1m12 0h1m6 0h1m30 0h1m15 0h2m1 0h1m6 0h1m2 0h2m4 0h1m4 0h1m3 0h1m1 0h1m1 0h1m12 0h1m18 0h1m7 0h2m1 0h1m1 0h1m1 0h1m2 0h1m8 0h1m37 0h1m25 0h1m2 0h1m4 0h1m19 0h1m2 0h1m2 0h1m5 0h1m11 0h1m19 0h1m14 0h1m1 0h1m5 0h1m11 0h1m11 0h1m9 0h1m6 0h1m11 0h1m2 0h1m30 0h1m2 0h1m43 0h1m3 0h1m5 0h2m14 0h1m11 0h1m17 0h1m26 0h1m1 0h1M36 194h1m3 0h1m22 0h1m11 0h1m7 0h2m1 0h1m1 0h1m5 0h1m23 0h1m4 0h1m20 0h2m5 0h1m12 0h1m1 0h1m13 0h1m31 0h1m11 0h1m1 0h1m4 0h1m15 0h2m5 0h1m3 0h1m18 0h1m24 0h1m24 0h2m2 0h1m16 0h1m1 0h1m4 0h1m38 0h1m3 0h1m22 0h2m5 0h1m43 0h2m30 0h1m14 0h1m3 0h1m7 0h1m18 0h1m4 0h1m8 0h1m9 0h1m27 0h1m1 0h1m4 0h1m6 0h1M73 195h2m3 0h1m2 0h1m1 0h1m5 0h1m11 0h1m2 0h2m2 0h1m7 0h1m5 0h1m10 0h1m18 0h1m10 0h1m27 0h1m11 0h1m4 0h1m4 0h1m2 0h1m2 0h1m25 0h1m11 0h1m5 0h1m6 0h1m16 0h1m8 0h1m8 0h1m13 0h1m2 0h1m3 0h1m7 0h1m2 0h1m4 0h1m9 0h1m79 0h1m18 0h1m28 0h1m9 0h1m5 0h1m6 0h1m3 0h2m1 0h1m18 0h1m2 0h1m1 0h1m10 0h1m9 0h1m1 0h2m5 0h1m22 0h1m1 0h1m15 0h1m5 0h1m5 0h1M23 196h1m3 0h2m4 0h1m16 0h1m13 0h1m23 0h1m3 0h1m5 0h1m1 0h1m4 0h1m27 0h1m6 0h2m13 0h1m11 0h1m6 0h1m12 0h1m17 0h1m15 0h1m5 0h1m13 0h1m4 0h1m12 0h1m1 0h1m5 0h1m7 0h1m45 0h1m3 0h1m5 0h1m6 0h1m9 0h1m4 0h1m5 0h1m5 0h1m4 0h2m4 0h1m5 0h1m3 0h1m7 0h2m11 0h1m2 0h1m12 0h1m21 0h1m16 0h1m18 0h1m3 0h1m16 0h1m30 0h1m6 0h1m7 0h1m7 0h1m33 0h1m5 0h1m1 0h1M27 197h1m8 0h1m5 0h1m24 0h1m10 0h1m1 0h1m10 0h1m14 0h1m1 0h1m11 0h1m8 0h1m14 0h1m10 0h1m29 0h1m2 0h1m20 0h1m2 0h1m7 0h3m6 0h1m39 0h1m1 0h1m45 0h1m2 0h1m1 0h1m3 0h1m6 0h1m27 0h1m4 0h1m14 0h1m1 0h1m27 0h1m5 0h1m18 0h1m3 0h1m2 0h1m4 0h1m19 0h1m16 0h2m8 0h1m3 0h1m5 0h1m1 0h1m10 0h1m3 0h2m19 0h1m2 0h1m6 0h1m2 0h1m3 0h1m6 0h2m9 0h1m16 0h1m12 0h1m4 0h1m3 0h1M46 198h1m2 0h1m7 0h1m6 0h1m5 0h1m1 0h1m11 0h1m31 0h1m4 0h1m4 0h1m13 0h1m38 0h1m10 0h1m3 0h1m5 0h1m20 0h1m5 0h1m4 0h1m8 0h1m7 0h1m24 0h1m10 0h1m6 0h1m14 0h1m9 0h1m1 0h1m4 0h1m19 0h1m1 0h1m2 0h1m2 0h1m39 0h1m2 0h2m7 0h2m38 0h1m6 0h1m18 0h1m17 0h1m8 0h1m3 0h1m2 0h1m2 0h1m6 0h1m3 0h1m4 0h2m1 0h1m9 0h1m5 0h1m7 0h1m25 0h1m15 0h1m4 0h1M23 199h1m1 0h1m1 0h1m35 0h1m11 0h1m11 0h1m29 0h1m28 0h1m6 0h1m18 0h1m14 0h1m3 0h1m12 0h1m10 0h1m2 0h1m15 0h1m27 0h1m5 0h1m6 0h1m4 0h1m3 0h1m28 0h1m5 0h1m23 0h1m1 0h1m5 0h1m16 0h1m10 0h1m9 0h1m8 0h1m2 0h1m16 0h1m4 0h1m7 0h1m5 0h1m3 0h1m26 0h1m17 0h1m6 0h1m11 0h1m2 0h1m19 0h1m6 0h1m2 0h1m1 0h1m9 0h1m13 0h1m7 0h1m9 0h1m17 0h1m4 0h1M43 200h1m3 0h1m30 0h1m21 0h2m7 0h1m5 0h1m17 0h1m2 0h1m10 0h1m9 0h1m8 0h1m2 0h2m31 0h1m8 0h1m4 0h1m1 0h1m7 0h1m2 0h1m28 0h1m3 0h1m6 0h2m2 0h1m13 0h1m2 0h1m18 0h1m22 0h1m2 0h1m2 0h1m3 0h1m25 0h1m4 0h1m1 0h2m10 0h1m11 0h2m6 0h1m22 0h1m33 0h1m21 0h1m6 0h1m14 0h1m9 0h1m6 0h1m3 0h1m2 0h1m4 0h1m11 0h1m17 0h1m17 0h1m13 0h2m1 0h1M25 201h1m10 0h1m8 0h1m18 0h2m11 0h1m6 0h1m5 0h1m3 0h1m5 0h1m9 0h1m11 0h1m2 0h1m4 0h1m4 0h1m5 0h1m22 0h1m5 0h1m4 0h1m14 0h1m14 0h1m10 0h1m1 0h1m16 0h1m9 0h1m4 0h2m4 0h2m3 0h1m12 0h1m19 0h1m3 0h2m9 0h2m8 0h1m8 0h1m1 0h1m5 0h1m20 0h1m19 0h1m13 0h1m3 0h1m4 0h1m21 0h1m3 0h1m6 0h1m24 0h1m3 0h1m4 0h1m2 0h1m10 0h1m9 0h1m4 0h1m24 0h1m10 0h2m9 0h2m9 0h1m5 0h1m3 0h1m1 0h1m1 0h1m2 0h1m17 0h1m17 0h1m5 0h1M33 202h3m8 0h1m16 0h1m12 0h1m3 0h1m25 0h1m11 0h1m7 0h1m8 0h1m7 0h2m16 0h1m2 0h1m5 0h1m12 0h2m2 0h1m7 0h1m11 0h1m10 0h1m4 0h1m40 0h1m6 0h1m4 0h1m6 0h1m9 0h1m1 0h1m1 0h1m14 0h1m4 0h1m7 0h1m7 0h1m5 0h1m32 0h2m5 0h1m16 0h2m20 0h3m19 0h1m5 0h1m24 0h1m11 0h1m14 0h1m10 0h1m13 0h1m11 0h1m2 0h1m21 0h1m9 0h1m7 0h1m21 0h2m6 0h1m1 0h1m5 0h1M35 203h1m9 0h1m1 0h1m1 0h1m19 0h1m10 0h1m28 0h1m9 0h1m27 0h1m8 0h1m9 0h2m6 0h1m5 0h3m12 0h1m10 0h3m3 0h1m31 0h1m3 0h1m13 0h1m20 0h1m3 0h1m4 0h1m3 0h1m6 0h1m3 0h1m16 0h2m6 0h1m4 0h1m16 0h1m11 0h1m21 0h1m7 0h1m2 0h1m9 0h1m9 0h1m16 0h1m5 0h1m2 0h1m6 0h1m4 0h1m16 0h1m3 0h1m8 0h1m1 0h1m9 0h1m5 0h1m7 0h1m19 0h1m1 0h1m2 0h1m14 0h1m8 0h2m10 0h1m1 0h1m15 0h1m5 0h2m5 0h1m3 0h1M23 204h1m3 0h1m2 0h1m14 0h1m2 0h1m12 0h1m23 0h1m17 0h1m10 0h2m13 0h1m6 0h1m4 0h1m4 0h1m38 0h1m5 0h1m17 0h1m3 0h1m10 0h1m5 0h1m1 0h1m17 0h1m2 0h2m13 0h1m27 0h1m2 0h1m24 0h1m10 0h1m26 0h1m2 0h1m1 0h1m3 0h1m10 0h1m3 0h2m4 0h1m6 0h1m16 0h1m2 0h1m2 0h1m10 0h1m16 0h1m12 0h1m1 0h1m26 0h1m2 0h1m7 0h1m4 0h1m1 0h1m3 0h1m14 0h1m3 0h1m4 0h2m23 0h2m41 0h1M22 205h1m13 0h1m8 0h1m6 0h1m3 0h2m11 0h1m17 0h2m35 0h1m9 0h1m14 0h1m17 0h1m18 0h1m18 0h1m1 0h1m1 0h1m2 0h1m5 0h1m8 0h1m7 0h1m3 0h1m6 0h1m14 0h1m18 0h1m1 0h1m1 0h1m1 0h1m1 0h1m4 0h1m14 0h2m14 0h1m8 0h1m7 0h1m16 0h1m32 0h1m23 0h1m4 0h1m3 0h1m26 0h1m4 0h1m42 0h2m18 0h1m14 0h1m10 0h1m26 0h1m1 0h1m2 0h1m12 0h1m18 0h1M44 206h1m1 0h1m20 0h1m2 0h2m6 0h1m2 0h1m47 0h1m5 0h1m10 0h1m20 0h1m9 0h1m6 0h1m10 0h1m13 0h2m40 0h1m12 0h1m6 0h1m13 0h1m6 0h2m9 0h1m14 0h1m32 0h1m4 0h1m7 0h2m26 0h1m20 0h1m22 0h1m6 0h1m2 0h1m6 0h1m13 0h1m46 0h1m7 0h1m9 0h1m3 0h1m19 0h1m13 0h1m7 0h1m22 0h1m5 0h1m4 0h1M22 207h1m1 0h2m24 0h1m13 0h1m18 0h1m12 0h1m19 0h1m11 0h2m9 0h1m15 0h1m19 0h1m15 0h1m3 0h1m5 0h1m16 0h2m10 0h1m21 0h1m12 0h1m3 0h1m2 0h1m2 0h1m3 0h1m2 0h1m9 0h1m12 0h1m3 0h1m16 0h1m25 0h1m7 0h1m8 0h1m5 0h1m32 0h1m26 0h1m17 0h2m28 0h1m3 0h1m7 0h1m7 0h1m12 0h2m23 0h1m19 0h1m10 0h1m6 0h1m7 0h1m4 0h2M21 208h1m10 0h2m13 0h1m9 0h1m5 0h1m8 0h1m1 0h1m3 0h1m4 0h1m7 0h1m30 0h1m5 0h2m5 0h1m8 0h2m9 0h1m21 0h1m7 0h1m2 0h1m1 0h1m4 0h1m24 0h1m3 0h1m17 0h1m5 0h1m5 0h1m2 0h2m20 0h1m12 0h1m17 0h1m10 0h1m25 0h1m10 0h1m4 0h1m7 0h2m17 0h1m1 0h1m5 0h1m6 0h2m10 0h1m16 0h1m12 0h1m26 0h1m20 0h1m22 0h1m5 0h1m11 0h1m2 0h1m4 0h1m2 0h1m58 0h1m1 0h1m5 0h1M25 209h1m11 0h1m5 0h1m17 0h1m8 0h1m1 0h1m12 0h1m9 0h1m23 0h1m2 0h1m20 0h1m4 0h2m4 0h1m9 0h1m7 0h1m6 0h1m16 0h2m11 0h1m22 0h1m5 0h1m24 0h1m6 0h1m10 0h1m18 0h1m9 0h1m9 0h1m8 0h2m18 0h2m24 0h1m1 0h1m1 0h1m4 0h2m20 0h1m2 0h1m4 0h1m13 0h1m25 0h1m22 0h1m4 0h1m10 0h1m10 0h1m8 0h1m4 0h1m15 0h1m7 0h1m3 0h1m4 0h1m6 0h1m12 0h1m4 0h1m24 0h1m2 0h1m5 0h1M29 210h1m6 0h1m29 0h1m6 0h1m2 0h1m11 0h1m9 0h1m2 0h1m16 0h2m6 0h1m23 0h1m28 0h1m58 0h1m13 0h1m4 0h1m8 0h2m1 0h1m1 0h1m2 0h1m4 0h1m15 0h1m7 0h1m29 0h1m1 0h1m18 0h1m2 0h1m2 0h2m7 0h1m15 0h1m6 0h1m9 0h2m9 0h1m6 0h1m1 0h1m11 0h1m17 0h1m72 0h1m20 0h1m6 0h1m7 0h1m10 0h1m21 0h1m3 0h1m2 0h1M73 211h1m5 0h1m10 0h2m15 0h1m13 0h1m6 0h1m26 0h1m10 0h1m2 0h1m3 0h1m18 0h1m5 0h1m17 0h1m1 0h1m18 0h1m19 0h1m44 0h1m17 0h1m1 0h1m4 0h1m1 0h1m13 0h1m18 0h1m67 0h2m7 0h1m4 0h1m2 0h1m9 0h1m25 0h1m10 0h1m4 0h1m2 0h1m6 0h1m7 0h1m8 0h1m15 0h1m1 0h1m25 0h1m4 0h2m11 0h1m4 0h1m3 0h1m17 0h1M26 212h1m14 0h1m2 0h1m13 0h1m19 0h1m15 0h1m2 0h1m19 0h1m6 0h1m14 0h1m15 0h1m4 0h1m5 0h1m32 0h1m6 0h1m1 0h1m6 0h1m4 0h1m4 0h1m10 0h1m6 0h1m3 0h1m31 0h2m52 0h1m14 0h1m7 0h1m8 0h1m22 0h2m8 0h1m10 0h1m18 0h1m8 0h1m12 0h1m2 0h1m4 0h1m1 0h1m1 0h1m2 0h1m8 0h1m1 0h1m14 0h1m1 0h1m13 0h1m9 0h1m15 0h1m6 0h1m31 0h1m16 0h1m1 0h1m1 0h2m3 0h1m15 0h1M32 213h1m11 0h1m1 0h1m2 0h1m32 0h1m5 0h1m45 0h1m3 0h1m5 0h2m5 0h1m28 0h1m10 0h1m7 0h1m3 0h1m3 0h1m11 0h1m65 0h1m6 0h3m7 0h1m25 0h1m13 0h1m8 0h1m19 0h1m24 0h1m8 0h1m10 0h1m14 0h1m2 0h1m3 0h1m20 0h1m6 0h1m28 0h1m27 0h1m1 0h1m6 0h1m1 0h1m4 0h1m25 0h1m1 0h1m1 0h1m8 0h1m20 0h1M22 214h1m2 0h1m77 0h1m13 0h1m30 0h1m1 0h1m8 0h1m1 0h1m29 0h1m19 0h1m9 0h1m1 0h1m10 0h1m24 0h1m9 0h2m15 0h1m2 0h1m4 0h1m33 0h1m19 0h1m6 0h1m11 0h1m2 0h1m4 0h1m15 0h1m3 0h1m18 0h1m3 0h1m38 0h1m12 0h1m12 0h1m27 0h1m33 0h1m20 0h1m11 0h1m1 0h1m31 0h1"/><path stroke="rgb(0,0,92)" d="M25 215h1m3 0h1m102 0h1m5 0h1m44 0h1m52 0h1m21 0h1m6 0h1m5 0h1m5 0h1m11 0h1m29 0h1m17 0h1m7 0h1m7 0h1m15 0h1m12 0h1m2 0h1m5 0h1m30 0h1m12 0h1m15 0h1m24 0h1m1 0h1m4 0h1m14 0h1m15 0h1m8 0h1m3 0h1m21 0h1m4 0h1m10 0h1m4 0h1m3 0h1m17 0h1m9 0h1m1 0h1M30 216h1m3 0h1m4 0h1m4 0h1m9 0h1m10 0h1m12 0h1m5 0h1m19 0h1m1 0h1m17 0h1m6 0h1m6 0h1m43 0h1m11 0h1m2 0h1m12 0h1m2 0h1m9 0h1m23 0h1m4 0h1m12 0h1m8 0h1m17 0h1m5 0h1m6 0h1m16 0h1m9 0h2m14 0h1m35 0h1m74 0h1m7 0h1m36 0h1M35 217h1m36 0h1m2 0h1m20 0h1m14 0h1m5 0h1m10 0h1m4 0h1m40 0h1m73 0h1m15 0h1m66 0h1m4 0h1m14 0h1m4 0h1m33 0h1m2 0h1m17 0h1m51 0h1m5 0h1m3 0h1m15 0h1m66 0h1m16 0h1m9 0h1m6 0h1m1 0h1M37 218h1m8 0h1m15 0h1m7 0h1m1 0h1m17 0h1m8 0h1m28 0h1m41 0h1m7 0h1m8 0h1m13 0h1m42 0h1m6 0h1m1 0h1m44 0h1m40 0h1m4 0h1m6 0h1m9 0h1m1 0h1m43 0h1m22 0h1m5 0h1m13 0h1m10 0h1m9 0h1m13 0h1m123 0h1M28 219h1m115 0h1m24 0h1m4 0h1m29 0h1m43 0h1m24 0h1m26 0h1m10 0h1m6 0h1m28 0h1m1 0h2m74 0h1m47 0h1m35 0h1m49 0h1m4 0h1M27 220h1m14 0h1m67 0h1m29 0h1m14 0h1m46 0h1m45 0h1m35 0h1m2 0h1m114 0h1m93 0h1m24 0h1m7 0h1m25 0h1m4 0h1m3 0h1m28 0h1M100 221h1m47 0h1m16 0h1m35 0h1m8 0h1m58 0h1m2 0h1m62 0h1m8 0h1m17 0h1m4 0h2m15 0h1m1 0h1m14 0h1m32 0h1m4 0h1m44 0h1m36 0h1m13 0h1m2 0h1m49 0h1m26 0h1M29 222h1m16 0h1m63 0h1m41 0h1m40 0h1m13 0h1m5 0h1m35 0h1m8 0h1m70 0h1m30 0h1m8 0h1m27 0h1m14 0h1m52 0h1M93 223h1m75 0h1m43 0h1m64 0h1m35 0h1m51 0h1m84 0h1m30 0h1m83 0h1m27 0h1M27 224h1m37 0h1m95 0h1m117 0h1m10 0h1m65 0h1m2 0h1m69 0h1M22 225h1m105 0h1m84 0h1m326 0h1M110 226h1m160 0h1m208 0h1m28 0h1m31 0h1M62 227h1m207 0h1"/><path stroke="rgb(0,0,104)" d="M51 80h1m8 0h1m90 0h1m6 0h1m17 0h1m10 0h1m52 0h1m34 0h1m53 0h1m34 0h1m13 0h1m2 0h1m74 0h1m1 0h1m47 0h1m5 0h1m32 0h1m27 0h1M29 81h1m30 0h1m47 0h1m18 0h1m13 0h1m36 0h1m12 0h1m9 0h1m18 0h1m28 0h1m65 0h1m43 0h1m17 0h1m76 0h1m12 0h1m37 0h2m24 0h1m10 0h1m33 0h1m17 0h1m11 0h1M66 82h1m13 0h1m36 0h1m6 0h1m93 0h1m20 0h1m11 0h1m3 0h1m5 0h1m17 0h1m10 0h1m18 0h1m13 0h1m5 0h1m1 0h1m29 0h1m9 0h1m24 0h1m14 0h2m70 0h1m13 0h1m7 0h1m9 0h1m14 0h1m7 0h1m19 0h1m3 0h1m21 0h1m13 0h1M59 83h1m2 0h1m56 0h1m9 0h1m22 0h1m27 0h1m5 0h1m18 0h1m4 0h1m10 0h1m8 0h1m43 0h1m11 0h1m7 0h1m5 0h1m10 0h1m49 0h3m8 0h1m19 0h1m39 0h1m49 0h1m6 0h1m38 0h1m5 0h1m24 0h1m3 0h1M29 84h1m12 0h1m68 0h1m63 0h1m12 0h1m21 0h1m5 0h1m18 0h1m35 0h1m80 0h1m20 0h1m7 0h1m31 0h1m3 0h1m22 0h1m21 0h1m47 0h1m58 0h1m2 0h1m2 0h1m33 0h1M29 85h1m26 0h1m13 0h1m105 0h2m7 0h1m10 0h1m54 0h1m19 0h1m109 0h1m39 0h1m27 0h1m57 0h1m38 0h1m18 0h1m33 0h1m1 0h1m2 0h1M22 86h1m97 0h1m20 0h1m37 0h1m55 0h1m2 0h1m54 0h2m16 0h1m4 0h1m1 0h1m11 0h1m26 0h1m40 0h1m43 0h1m9 0h1m5 0h1m2 0h1m2 0h1m37 0h1m11 0h1m9 0h1m11 0h1m5 0h1m24 0h1m47 0h1M20 87h1m46 0h1m7 0h1m2 0h1m15 0h1m25 0h1m34 0h1m26 0h1m29 0h1m60 0h1m24 0h1m94 0h1m3 0h1m14 0h1m37 0h1m6 0h1m30 0h1m13 0h1m25 0h1m29 0h2m1 0h1m5 0h1M35 88h1m3 0h1m68 0h1m2 0h1m20 0h1m111 0h1m11 0h1m2 0h1m1 0h1m24 0h1m8 0h1m38 0h1m2 0h2m14 0h1m18 0h1m19 0h1m6 0h1m24 0h1m29 0h1m35 0h1m33 0h1m7 0h1m4 0h1m58 0h1M29 89h1m1 0h1m55 0h1m8 0h1m2 0h1m57 0h1m35 0h1m5 0h1m2 0h1m6 0h1m23 0h1m4 0h1m1 0h1m12 0h1m2 0h1m1 0h1m38 0h1m52 0h1m42 0h1m26 0h1m20 0h1m21 0h1m6 0h1m21 0h1m11 0h1m34 0h1m27 0h1M71 90h1m12 0h1m15 0h1m103 0h1m9 0h1m56 0h1m12 0h1m12 0h1m3 0h1m17 0h1m60 0h1m5 0h1m25 0h1m39 0h1m1 0h1m12 0h1m8 0h1m24 0h2m23 0h1m7 0h1m12 0h1m7 0h1m44 0h1M23 91h1m16 0h1m52 0h1m17 0h1m13 0h1m1 0h1m38 0h1m14 0h1m11 0h1m40 0h1m10 0h1m129 0h1m38 0h1m26 0h1m28 0h1m5 0h1m11 0h1m26 0h1m4 0h1m16 0h1m29 0h1m42 0h1m6 0h1M47 92h1m22 0h1m25 0h1m30 0h1m4 0h1m12 0h1m8 0h1m28 0h1m11 0h1m21 0h1m20 0h1m11 0h1m41 0h1m5 0h1m27 0h1m61 0h1m56 0h1m89 0h1m26 0h1m6 0h1m20 0h1M24 93h1m66 0h1m15 0h1m49 0h1m20 0h1m15 0h1m13 0h1m17 0h1m4 0h1m14 0h1m3 0h1m82 0h1m16 0h1m3 0h1m21 0h1m44 0h1m3 0h1m15 0h1m8 0h1m42 0h2m28 0h1m11 0h1m4 0h1m9 0h1m5 0h2m57 0h1M149 94h1m37 0h1m33 0h1m17 0h1m30 0h1m14 0h1m6 0h1m44 0h1m5 0h2m1 0h1m29 0h1m27 0h1m5 0h1m34 0h1m6 0h1m36 0h1m46 0h1m11 0h1m68 0h1M22 95h1m13 0h1m119 0h1m21 0h1m29 0h1m65 0h1m29 0h1m13 0h1m67 0h1m2 0h1m31 0h1m10 0h1m79 0h1m83 0h2m2 0h1M66 96h1m88 0h1m13 0h1m36 0h2m83 0h1m7 0h1m4 0h1m10 0h1m51 0h1m81 0h1m19 0h1m5 0h1m44 0h1m3 0h1m50 0h1m2 0h1m22 0h1m10 0h1M104 97h1m11 0h1m18 0h1m29 0h1m32 0h1m2 0h1m22 0h1m3 0h1m26 0h1m16 0h1m47 0h1m20 0h1m51 0h1m9 0h1m88 0h1m16 0h1m45 0h1m12 0h1M26 98h1m3 0h1m62 0h1m46 0h1m28 0h1m60 0h1m8 0h1m58 0h1m8 0h1m46 0h1m16 0h1m77 0h1m32 0h1m11 0h1m14 0h1m3 0h1m4 0h1m12 0h1m74 0h1m5 0h1M31 99h1m10 0h1m4 0h1m4 0h1m4 0h1m34 0h1m4 0h1m11 0h1m25 0h1m1 0h1m55 0h1m5 0h1m5 0h2m18 0h1m5 0h2m26 0h1m1 0h1m4 0h1m71 0h1m30 0h1m7 0h1m53 0h1m38 0h1m10 0h1m44 0h1m7 0h1m29 0h1m28 0h1M55 100h1m26 0h1m5 0h1m4 0h1m7 0h1m78 0h1m3 0h1m54 0h1m20 0h1m66 0h1m16 0h1m19 0h2m35 0h1m18 0h1m45 0h1m33 0h1m68 0h1m30 0h1M31 101h1m3 0h2m66 0h1m10 0h1m60 0h1m28 0h1m46 0h2m31 0h1m49 0h1m5 0h2m16 0h1m111 0h1m32 0h1m21 0h1m3 0h1m13 0h1m5 0h1m30 0h1m13 0h1m6 0h1M28 102h1m9 0h1m4 0h1m13 0h1m17 0h1m28 0h1m28 0h1m37 0h1m3 0h1m21 0h1m44 0h1m42 0h1m6 0h1m45 0h1m68 0h1m39 0h1m16 0h1m25 0h2m8 0h1m33 0h1m31 0h1m11 0h1m33 0h1M42 103h1m69 0h1m15 0h1m26 0h1m28 0h1m25 0h1m40 0h1m55 0h1m7 0h1m20 0h1m41 0h1m25 0h1m12 0h1m7 0h1m2 0h1m57 0h1m3 0h2m37 0h1m28 0h1m36 0h1M44 104h1m22 0h1m1 0h1m91 0h1m9 0h1m24 0h1m26 0h1m67 0h1m1 0h1m29 0h1m4 0h1m62 0h1m17 0h1m4 0h1m49 0h1m14 0h1m48 0h1m29 0h1m1 0h1m27 0h1m14 0h1M41 105h1m39 0h1m22 0h1m34 0h1m21 0h1m89 0h1m41 0h1m11 0h1m16 0h1m57 0h1m2 0h1m53 0h1m19 0h1m16 0h1m7 0h1m61 0h1m26 0h1m3 0h1m3 0h1m22 0h1M73 106h1m12 0h1m25 0h1m6 0h1m18 0h1m7 0h1m19 0h1m5 0h1m49 0h1m30 0h1m12 0h1m1 0h1m7 0h1m32 0h1m45 0h1m31 0h1m2 0h1m35 0h1m22 0h1m105 0h1M31 107h1m45 0h1m15 0h1m68 0h1m27 0h1m12 0h2m67 0h1m20 0h1m1 0h1m4 0h1m65 0h1m6 0h1m7 0h1m12 0h1m12 0h1m3 0h1m67 0h1m59 0h1m13 0h2m23 0h1m7 0h1m16 0h1M36 108h1m1 0h1m9 0h1m3 0h1m44 0h1m53 0h1m27 0h1m14 0h1m54 0h1m5 0h1m32 0h1m12 0h1m38 0h1m21 0h1m10 0h1m28 0h1m10 0h1m1 0h1m97 0h1m6 0h1m5 0h1m16 0h1m39 0h2M39 109h1m39 0h1m15 0h1m18 0h1m10 0h1m11 0h1m83 0h1m11 0h1m15 0h1m61 0h1m24 0h1m21 0h1m39 0h1m44 0h1m48 0h1m16 0h1m17 0h1m1 0h2m16 0h1m47 0h1M86 110h1m49 0h1m62 0h1m6 0h1m4 0h1m39 0h2m31 0h2m26 0h1m5 0h1m18 0h1m38 0h1m25 0h1m5 0h2m48 0h1m64 0h1m29 0h1m38 0h1m11 0h1m6 0h1M47 111h1m12 0h1m44 0h1m30 0h1m49 0h1m4 0h1m25 0h3m5 0h1m17 0h1m48 0h1m28 0h1m8 0h1m91 0h1m9 0h1m33 0h1m20 0h1m38 0h1m21 0h1m55 0h1M49 112h1m24 0h2m6 0h2m10 0h1m8 0h1m4 0h1m5 0h1m20 0h1m2 0h1m1 0h1m3 0h1m66 0h2m15 0h1m18 0h1m9 0h1m1 0h1m61 0h1m80 0h1m2 0h1m12 0h1m74 0h1m15 0h1m8 0h1m58 0h1m13 0h1M26 113h1m5 0h1m39 0h1m10 0h1m48 0h1m39 0h1m53 0h1m34 0h1m21 0h1m7 0h1m25 0h1m24 0h1m28 0h1m89 0h1m18 0h1m6 0h1m31 0h1m25 0h1M102 114h1m54 0h1m26 0h1m16 0h1m9 0h1m24 0h1m34 0h1m50 0h1m48 0h1m41 0h1m10 0h1m10 0h1m2 0h1m30 0h1m88 0h1m26 0h1M41 115h1m35 0h1m68 0h1m34 0h1m9 0h1m96 0h2m8 0h1m6 0h1m8 0h1m17 0h1m6 0h1m1 0h1m23 0h1m12 0h1m5 0h1m15 0h1m4 0h1m18 0h1m15 0h1m16 0h1m40 0h1M22 116h1m5 0h1m19 0h1m31 0h1m48 0h1m2 0h1m5 0h1m13 0h1m13 0h1m4 0h1m4 0h2m93 0h1m21 0h1m33 0h1m13 0h1m27 0h1m3 0h1m13 0h1m34 0h1m33 0h1m24 0h1m10 0h1m61 0h1m23 0h1m23 0h1m2 0h1m6 0h1M56 117h1m14 0h1m10 0h1m53 0h1m14 0h1m3 0h1m7 0h1m87 0h1m7 0h1m29 0h1m122 0h1m87 0h1m16 0h1m87 0h1m6 0h1M34 118h1m20 0h1m11 0h1m10 0h1m7 0h1m24 0h1m21 0h1m5 0h1m12 0h1m24 0h1m57 0h2m37 0h1m14 0h1m91 0h1m28 0h1m9 0h1m90 0h1m9 0h1m13 0h1m31 0h1m30 0h1m1 0h1m15 0h1M27 119h1m14 0h1m98 0h1m30 0h1m19 0h1m13 0h1m47 0h1m20 0h1m45 0h1m48 0h1m27 0h1m24 0h1m14 0h1m11 0h1m29 0h1m25 0h1m54 0h1m11 0h1m5 0h1m4 0h1m24 0h1m1 0h1M31 120h1m5 0h1m40 0h1m118 0h1m73 0h1m6 0h1m45 0h1m16 0h1m5 0h1m36 0h1m25 0h1m2 0h1m98 0h1m8 0h1m8 0h1m3 0h1m16 0h1m6 0h1m46 0h1m7 0h2M22 121h1m42 0h1m20 0h1m14 0h3m43 0h2m11 0h1m30 0h1m57 0h1m29 0h1m4 0h1m110 0h1m14 0h1m12 0h1m24 0h1m4 0h1m108 0h1m19 0h1m5 0h1m19 0h1M28 122h1m8 0h1m80 0h1m41 0h1m1 0h1m71 0h1m33 0h1m18 0h1m10 0h1m7 0h1m21 0h1m6 0h1m32 0h1m30 0h1m17 0h1m10 0h1m41 0h1m32 0h1m2 0h1m20 0h1m31 0h1m27 0h1m1 0h1m8 0h1M29 123h1m20 0h1m45 0h1m2 0h1m90 0h1m49 0h1m15 0h1m29 0h1m69 0h1m57 0h1m9 0h1m1 0h1m1 0h1m26 0h1m5 0h1m24 0h1m31 0h1m16 0h1m4 0h1m38 0h1M28 124h1m19 0h1m80 0h1m33 0h1m1 0h1m8 0h1m16 0h1m67 0h1m7 0h1m9 0h1m10 0h1m6 0h1m44 0h1m64 0h1m16 0h1m16 0h1m5 0h1m4 0h1m34 0h1m36 0h1m90 0h1M47 125h1m117 0h1m18 0h1m62 0h1m24 0h1m6 0h1m13 0h1m1 0h1m18 0h1m2 0h1m4 0h1m10 0h1m3 0h1m8 0h1m34 0h1m26 0h1m175 0h1M28 126h1m14 0h1m38 0h1m21 0h1m2 0h1m5 0h1m107 0h2m104 0h1m16 0h1m65 0h1m74 0h1m37 0h1m41 0h1m18 0h1M37 127h1m4 0h1m18 0h1m2 0h1m58 0h1m52 0h1m4 0h1m159 0h1m16 0h1m46 0h1m22 0h1m48 0h1m28 0h1m62 0h1m25 0h1m13 0h1M20 128h1m73 0h1m10 0h1m51 0h2m35 0h1m12 0h1m19 0h1m6 0h1m50 0h1m18 0h1m37 0h1m4 0h1m4 0h1m13 0h1m109 0h1m2 0h1m27 0h1m19 0h1m23 0h1m4 0h1m36 0h1m12 0h1m7 0h1M119 129h2m27 0h1m36 0h1m18 0h1m45 0h1m24 0h1m45 0h1m28 0h1m152 0h1m36 0h1m14 0h1m1 0h1m17 0h1m3 0h1m6 0h1M36 130h1m69 0h1m6 0h1m9 0h2m39 0h1m15 0h1m152 0h1m16 0h1m5 0h1m32 0h1m31 0h2m27 0h1m6 0h1m20 0h1m24 0h1m73 0h1M94 131h1m76 0h1m40 0h1m78 0h1m14 0h1m26 0h1m7 0h1m55 0h1m1 0h1m19 0h1m16 0h1m32 0h1m20 0h1m8 0h1m13 0h1m15 0h1m66 0h1m12 0h1M31 132h1m18 0h1m67 0h1m4 0h1m39 0h1m9 0h1m70 0h1m28 0h1m11 0h1m17 0h1m6 0h1m71 0h1m2 0h1m8 0h1m49 0h1m2 0h1m27 0h1m71 0h1m44 0h1M33 133h1m1 0h1m26 0h1m24 0h1m33 0h1m50 0h1m65 0h1m33 0h1m55 0h1m29 0h1m8 0h1m29 0h1m25 0h1m72 0h1m68 0h1m5 0h1m43 0h1M20 134h2m13 0h1m43 0h1m53 0h1m38 0h1m50 0h1m6 0h1m12 0h2m6 0h1m17 0h1m90 0h1m9 0h1m29 0h1m84 0h1m4 0h1m45 0h1M89 135h1m25 0h1m36 0h1m3 0h1m47 0h1m1 0h1m89 0h1m5 0h1m9 0h1m13 0h1m25 0h1m18 0h1m81 0h1M24 136h1m11 0h1m7 0h1m7 0h1m9 0h1m11 0h1m14 0h1m34 0h1m54 0h1m31 0h1m111 0h1m8 0h1m2 0h1m119 0h1m69 0h1m43 0h1M59 137h1m53 0h1m56 0h1m26 0h1m40 0h1m7 0h1m23 0h1m1 0h1m98 0h1m76 0h1m11 0h1m3 0h1m1 0h1m12 0h1m75 0h1m43 0h1m1 0h1M20 138h1m87 0h1m39 0h1m107 0h1m42 0h1m25 0h1m2 0h2m103 0h1m20 0h1m14 0h1m67 0h1m60 0h1M22 139h1m11 0h1m3 0h1m60 0h1m26 0h1m38 0h1m23 0h1m11 0h1m37 0h1m77 0h1m81 0h1m18 0h2m36 0h1m62 0h2m46 0h1M128 140h1m14 0h1m4 0h1m3 0h1m9 0h1m54 0h1m5 0h1m5 0h1m38 0h1m30 0h1m185 0h1m6 0h1m98 0h1M36 141h1m10 0h1m23 0h1m120 0h1m46 0h1m8 0h1m78 0h1m7 0h1m34 0h1m12 0h1m41 0h1m161 0h1M22 142h1m30 0h1m8 0h1m66 0h1m25 0h1m7 0h1m39 0h1m51 0h1m10 0h1m28 0h1m24 0h1m118 0h1m1 0h1m52 0h2m28 0h1m22 0h1M37 143h1m73 0h2m2 0h1m49 0h1m3 0h1m67 0h1m71 0h1m67 0h1m29 0h1m10 0h1m19 0h1m67 0h1m89 0h1M35 144h1m23 0h1m71 0h1m44 0h1m42 0h1m10 0h1m39 0h1m32 0h1m69 0h1m5 0h1m70 0h1m28 0h1m11 0h1m29 0h1M22 145h1m30 0h1m9 0h1m53 0h1m32 0h1m9 0h1m96 0h1m10 0h1m55 0h1m23 0h1m56 0h1m91 0h1m36 0h1m11 0h1m52 0h1M44 146h1m16 0h1m121 0h1m105 0h1m46 0h1m86 0h2m24 0h2m34 0h1m28 0h1m56 0h1m45 0h1M73 147h1m59 0h1m102 0h1m13 0h1m60 0h1m50 0h1m28 0h1m57 0h1m2 0h1m102 0h1m8 0h1m41 0h1M40 148h1m174 0h1m12 0h1m14 0h1m2 0h1m2 0h1m27 0h1m4 0h1m1 0h1m15 0h1m17 0h1m5 0h1m5 0h1m97 0h1m41 0h1m35 0h1m13 0h1m15 0h1m53 0h1M90 149h1m3 0h1m1 0h1m96 0h1m60 0h1m79 0h1m27 0h1m20 0h1m71 0h1m34 0h1M38 150h1m16 0h1m28 0h1m63 0h1m101 0h1m63 0h1m12 0h1m63 0h1m67 0h1m30 0h1m8 0h1m14 0h1m43 0h1m18 0h1m16 0h1m9 0h1M34 151h1m23 0h1m56 0h1m37 0h1m38 0h1m53 0h1m3 0h1m119 0h1m68 0h1m23 0h1m62 0h1m38 0h1m38 0h1M169 152h1m19 0h1m7 0h1m7 0h1m127 0h1m25 0h1m5 0h1m125 0h1m21 0h1m25 0h1m14 0h1m13 0h1m19 0h1M23 153h1m29 0h1m33 0h1m28 0h1m120 0h1m68 0h1m64 0h1m23 0h1m39 0h1m11 0h1m19 0h1m9 0h1m125 0h1M26 154h1m69 0h1m138 0h1m19 0h1m13 0h1m13 0h1m100 0h1m17 0h1m26 0h1m40 0h1m67 0h1m44 0h1M32 155h1m92 0h1m36 0h1m15 0h1m113 0h1m11 0h1m15 0h1m34 0h1m16 0h1m43 0h1m40 0h2m27 0h1M47 156h1m3 0h1m7 0h1m23 0h1m6 0h1m21 0h1m71 0h1m6 0h1m44 0h1m20 0h1m79 0h1m66 0h1m101 0h1m67 0h1M80 157h1m59 0h1m24 0h1m13 0h1m98 0h1m68 0h1m9 0h1m9 0h1m20 0h1m48 0h1m22 0h1m6 0h1m12 0h1m39 0h1m68 0h1m2 0h1M22 158h1m189 0h1m51 0h1m41 0h1m4 0h1m86 0h1m112 0h1m18 0h1m1 0h1m2 0h1m59 0h1M58 159h1m97 0h1m154 0h1m3 0h1m49 0h1m18 0h1m45 0h1M53 160h1m252 0h1m51 0h1m3 0h1m96 0h1m36 0h1m85 0h1M231 161h1m52 0h1m40 0h1m50 0h1m2 0h1m8 0h1m14 0h1m11 0h1m19 0h1m33 0h1M68 162h1m89 0h1m31 0h1m13 0h1m18 0h1m97 0h1m83 0h1m88 0h1m21 0h1m19 0h1M56 163h1m16 0h1m1 0h1m69 0h1m46 0h1m53 0h1m27 0h1m102 0h1m20 0h1m22 0h1m27 0h1m14 0h1m4 0h1m12 0h1m87 0h1m9 0h1m5 0h1M57 164h1m92 0h1m6 0h1m50 0h1m184 0h1m80 0h1m67 0h1m9 0h1m11 0h1M151 165h1m49 0h1m35 0h1m14 0h1m68 0h1m36 0h1m45 0h1m62 0h1m27 0h1m37 0h1m48 0h1m16 0h1M52 166h1m15 0h1m8 0h1m69 0h1m44 0h1m69 0h1m11 0h1m6 0h1m53 0h1m5 0h1m39 0h1m1 0h1m51 0h1m75 0h1m35 0h1M87 167h1m19 0h1m59 0h1m23 0h1m7 0h1m45 0h1m71 0h1m12 0h1m23 0h1m106 0h1m10 0h1m12 0h1m25 0h1M28 168h1m55 0h1m21 0h2m22 0h1m75 0h1m15 0h1m23 0h1m46 0h1m5 0h1m63 0h1m89 0h1m49 0h1M55 169h1m191 0h1m21 0h1m2 0h1m7 0h1m169 0h1m55 0h1m1 0h1m20 0h1m20 0h1M78 170h1m64 0h1m9 0h1m9 0h1m15 0h1m165 0h1m35 0h1m98 0h1m91 0h1M20 171h1m20 0h1m38 0h1m12 0h1m30 0h1m25 0h1m27 0h1m29 0h1m96 0h1m42 0h1m34 0h1m24 0h1m58 0h1m15 0h1m118 0h1M66 172h2m55 0h1m35 0h1m81 0h1m75 0h1m97 0h1m8 0h1m43 0h1m4 0h1m84 0h2m35 0h1M45 173h1m3 0h1m60 0h1m16 0h1m46 0h1m54 0h1m9 0h1m67 0h1m4 0h1m135 0h1m14 0h1m50 0h1M72 174h1m52 0h1m38 0h1m9 0h1m4 0h1m15 0h1m6 0h1m11 0h1m2 0h1m5 0h1m7 0h1m27 0h1m118 0h1m15 0h1m3 0h1m37 0h1m28 0h1m3 0h1m85 0h1m61 0h1M56 175h1m72 0h1m51 0h1m149 0h1m9 0h1m37 0h1m71 0h1m10 0h1m43 0h1m42 0h1m2 0h1M151 176h1m44 0h1m92 0h1m31 0h1m10 0h1m12 0h1m15 0h1m86 0h1m30 0h1m8 0h1m93 0h1M73 177h1m25 0h1m28 0h1m29 0h1m18 0h1m75 0h1m47 0h1m91 0h1m2 0h1m48 0h1m39 0h1m26 0h1m16 0h1m37 0h2m13 0h1M35 178h1m55 0h1m21 0h1m31 0h1m147 0h1m59 0h1m126 0h1m65 0h1M49 179h1m114 0h1m8 0h1m13 0h1m75 0h1m47 0h1m111 0h1m33 0h1m21 0h1m65 0h1M84 180h2m81 0h1m26 0h1m24 0h1m15 0h1m51 0h1m21 0h1m78 0h1m55 0h1m41 0h1m4 0h1m51 0h1m6 0h1m25 0h1m11 0h1M50 181h1m6 0h1m1 0h1m42 0h1m34 0h1m21 0h1m18 0h1m17 0h1m168 0h1m47 0h1m46 0h1m35 0h1m8 0h1m20 0h1m11 0h1m21 0h1m19 0h1M32 182h1m118 0h1m11 0h1m37 0h1m214 0h1m114 0h1m63 0h1m12 0h1M51 183h1m27 0h1m37 0h1m8 0h1m23 0h1m147 0h1m5 0h1m12 0h1m61 0h1m115 0h2m88 0h1M20 184h1m68 0h1m64 0h2m37 0h1m49 0h1m6 0h1m16 0h1m11 0h2m8 0h1m7 0h1m25 0h1m82 0h1m45 0h1m39 0h1m101 0h1m3 0h1M48 185h1m17 0h1m2 0h1m87 0h1m70 0h1m11 0h1m8 0h1m209 0h1m4 0h1m32 0h1m53 0h1m30 0h1m12 0h1m2 0h1M48 186h1m2 0h1m41 0h1m33 0h1m31 0h1m19 0h1m8 0h1m2 0h1m78 0h1m9 0h1m47 0h1m2 0h1m15 0h1m73 0h1m13 0h1m67 0h1m68 0h1M51 187h1m11 0h1m40 0h1m16 0h1m10 0h1m1 0h1m34 0h1m64 0h1m18 0h1m3 0h1m17 0h1m54 0h1m18 0h1m42 0h1m5 0h1m4 0h1m2 0h1m10 0h1m33 0h1m35 0h1m21 0h1m5 0h1m11 0h1m50 0h1M23 188h1m18 0h1m2 0h1m77 0h1m100 0h1m27 0h1m26 0h1m1 0h1m220 0h1m14 0h1m22 0h1m69 0h1M21 189h1m44 0h1m3 0h1m32 0h1m12 0h1m68 0h1m32 0h1m8 0h1m65 0h1m4 0h1m3 0h1m6 0h2m62 0h1m20 0h1m9 0h1m6 0h1m49 0h1m107 0h2M47 190h1m6 0h1m45 0h1m12 0h1m60 0h1m21 0h1m27 0h1m26 0h1m65 0h1m20 0h1m5 0h1m39 0h1m17 0h1m21 0h1m180 0h1M20 191h1m225 0h1m80 0h1m5 0h1m21 0h1m96 0h1m9 0h1m21 0h1m19 0h1m31 0h1M24 192h1m66 0h1m17 0h1m73 0h1m55 0h1m6 0h1m7 0h1m10 0h1m96 0h1m23 0h1m19 0h1m59 0h1m1 0h1m31 0h1m14 0h1m97 0h1M47 193h1m30 0h1m25 0h1m58 0h1m24 0h1m81 0h1m48 0h1m55 0h1m13 0h1m5 0h1m58 0h1m66 0h1m23 0h1m8 0h1m40 0h1M116 194h1m140 0h1m2 0h1m11 0h1m61 0h1m50 0h1m16 0h1m24 0h1m58 0h1m7 0h1m45 0h1m28 0h1m21 0h1M57 195h1m107 0h1m21 0h1m1 0h1m24 0h1m21 0h1m31 0h1m26 0h1m43 0h1m18 0h1m5 0h1m26 0h1m15 0h1m76 0h1m57 0h1m10 0h1m14 0h1M68 196h1m12 0h1m67 0h1m18 0h1m40 0h1m18 0h1m1 0h1m6 0h1m27 0h1m11 0h1m28 0h1m9 0h1m30 0h1m4 0h1m30 0h1m73 0h2m28 0h1m34 0h1m63 0h1m8 0h1M38 197h1m19 0h1m31 0h1m5 0h1m69 0h1m9 0h1m74 0h1m21 0h1m2 0h1m14 0h1m37 0h1m50 0h1m22 0h1m63 0h1m32 0h1m40 0h1m39 0h1M34 198h1m33 0h1m19 0h1m10 0h1m28 0h1m15 0h1m28 0h1m10 0h1m2 0h1m13 0h1m14 0h1m92 0h1m20 0h1m9 0h1m25 0h1m1 0h1m68 0h1m42 0h1m4 0h1m10 0h1m50 0h1m59 0h1M30 199h1m20 0h1m26 0h1m52 0h1m18 0h2m3 0h1m47 0h1m45 0h1m14 0h1m7 0h1m9 0h1m10 0h1m8 0h1m62 0h1m80 0h1m2 0h1m6 0h1m33 0h1m25 0h1m15 0h1m3 0h1m16 0h1m1 0h1M23 200h1m6 0h1m23 0h1m77 0h1m38 0h1m91 0h1m18 0h1m2 0h1m18 0h1m41 0h1m14 0h1m18 0h1m33 0h1m2 0h1m16 0h1m20 0h1m13 0h1m14 0h1m66 0h1m35 0h1m5 0h1M51 201h1m3 0h1m10 0h1m7 0h1m74 0h1m11 0h1m66 0h1m33 0h1m59 0h1m48 0h1m14 0h1m15 0h1m27 0h1m10 0h1m31 0h1m46 0h1m9 0h2m53 0h1m1 0h1m24 0h1M32 202h1m32 0h1m24 0h1m72 0h1m32 0h1m1 0h1m24 0h1m28 0h1m8 0h1m10 0h1m13 0h1m9 0h2m8 0h1m68 0h1m48 0h1m24 0h1m18 0h1m2 0h1m13 0h1m79 0h1m51 0h1M39 203h1m34 0h1m15 0h1m49 0h1m136 0h1m45 0h1m18 0h1m6 0h2m11 0h1m1 0h1m29 0h1m38 0h1m28 0h2m17 0h1m1 0h1m100 0h1m8 0h1M35 204h1m82 0h1m19 0h1m59 0h1m115 0h1m29 0h1m80 0h1m2 0h1m7 0h1m8 0h1m25 0h1m117 0h1M30 205h2m1 0h1m15 0h1m15 0h1m6 0h1m90 0h1m4 0h1m19 0h1m37 0h1m27 0h1m62 0h1m32 0h1m3 0h1m79 0h1m37 0h1m2 0h1m1 0h1m5 0h1m22 0h1m28 0h1m32 0h1m28 0h1m14 0h1M45 206h1m29 0h1m34 0h1m27 0h1m5 0h1m23 0h1m14 0h1m24 0h1m18 0h1m9 0h1m17 0h1m2 0h1m8 0h1m54 0h2m11 0h1m39 0h1m122 0h1m5 0h1m12 0h1m7 0h1m3 0h1m52 0h1M102 207h3m8 0h1m32 0h1m3 0h1m1 0h1m12 0h1m38 0h1m1 0h1m20 0h1m15 0h1m22 0h1m7 0h1m2 0h1m23 0h1m53 0h2m2 0h1m19 0h1m38 0h1m18 0h1m24 0h1m84 0h1m6 0h1m54 0h1m7 0h1M48 208h1m59 0h1m16 0h1m4 0h1m41 0h2m26 0h1m14 0h1m7 0h1m11 0h1m10 0h1m31 0h1m88 0h1m11 0h2m31 0h1m11 0h1m5 0h1m13 0h1m7 0h1m2 0h1m90 0h1M20 209h1m3 0h1m32 0h2m29 0h1m27 0h1m51 0h1m14 0h1m5 0h1m32 0h1m51 0h1m48 0h1m20 0h1m25 0h1m22 0h1m24 0h1m98 0h1m8 0h1m17 0h1M52 210h1m52 0h1m1 0h1m75 0h1m7 0h1m39 0h1m9 0h1m19 0h1m3 0h1m40 0h1m2 0h1m7 0h1m1 0h1m14 0h1m3 0h1m16 0h1m14 0h1m9 0h1m5 0h1m23 0h1m15 0h1m27 0h1m3 0h1m20 0h1m108 0h2m1 0h1m8 0h1m7 0h1M40 211h1m34 0h1m16 0h1m79 0h1m37 0h1m29 0h1m4 0h1m23 0h1m2 0h1m36 0h1m37 0h1m38 0h1m2 0h1m10 0h1m12 0h1m7 0h2m3 0h1m18 0h1m9 0h1m31 0h1m26 0h1M37 212h1m10 0h2m3 0h1m23 0h1m17 0h1m77 0h1m1 0h1m75 0h1m2 0h1m16 0h1m2 0h1m41 0h1m17 0h1m10 0h1m25 0h1m3 0h4m18 0h1m24 0h1m3 0h1m16 0h1m36 0h1m24 0h1m15 0h1m12 0h1m14 0h1m58 0h1M39 213h1m40 0h1m13 0h2m3 0h1m3 0h1m7 0h1m16 0h1m77 0h1m14 0h1m18 0h1m1 0h1m96 0h1m14 0h1m18 0h1m13 0h1m69 0h1m6 0h1m18 0h1m27 0h1m82 0h1m21 0h1M42 214h1m40 0h1m2 0h1m4 0h1m7 0h1m6 0h1m4 0h1m48 0h1m1 0h1m184 0h1m36 0h1m8 0h1m2 0h1m9 0h1m10 0h1m9 0h1m2 0h1m13 0h1m2 0h1m55 0h1m9 0h1m26 0h1m29 0h1m1 0h1m22 0h1m19 0h1"/><path stroke="rgb(0,0,104)" d="M21 215h1m6 0h1m5 0h1m13 0h1m5 0h1m11 0h1m52 0h1m6 0h1m6 0h2m42 0h1m22 0h1m42 0h1m16 0h1m23 0h1m13 0h1m33 0h1m105 0h1m8 0h2m47 0h1m29 0h1m8 0h1m5 0h1m34 0h1M37 216h1m9 0h1m3 0h1m30 0h1m30 0h1m25 0h1m2 0h1m8 0h1m46 0h1m4 0h1m4 0h1m24 0h1m17 0h1m19 0h1m1 0h1m13 0h1m42 0h1m6 0h1m5 0h1m20 0h1m41 0h1m10 0h1m19 0h1m1 0h1m5 0h1m16 0h1m8 0h1m5 0h1m18 0h2m13 0h1m27 0h1m25 0h1m19 0h2m3 0h1m22 0h1M99 217h1m5 0h1m44 0h1m37 0h1m2 0h1m52 0h1m10 0h1m10 0h1m37 0h1m6 0h1m4 0h1m63 0h1m21 0h1m2 0h1m19 0h1m21 0h1m17 0h1m35 0h1m3 0h2m9 0h2m17 0h1m8 0h1m21 0h1m35 0h1M49 218h1m1 0h2m88 0h1m11 0h1m19 0h1m33 0h1m25 0h1m15 0h1m49 0h2m21 0h1m4 0h1m1 0h1m4 0h1m8 0h1m9 0h1m13 0h1m10 0h1m30 0h1m21 0h1m10 0h1m48 0h1m45 0h1m40 0h1m5 0h1m8 0h1M20 219h1m1 0h1m83 0h1m4 0h1m35 0h1m1 0h1m32 0h1m11 0h1m2 0h1m42 0h1m2 0h1m32 0h1m10 0h1m10 0h1m18 0h1m8 0h1m30 0h1m3 0h1m19 0h1m38 0h1m11 0h1m19 0h1m3 0h1m9 0h1m8 0h1m4 0h1m7 0h1m29 0h1m8 0h1m4 0h1m33 0h1m25 0h1m10 0h1m9 0h1M33 220h1m13 0h1m8 0h1m6 0h1m4 0h1m10 0h1m7 0h2m28 0h2m2 0h1m8 0h1m11 0h1m28 0h1m21 0h1m6 0h1m12 0h1m5 0h1m14 0h1m6 0h1m17 0h1m9 0h1m8 0h2m8 0h1m4 0h1m26 0h2m4 0h1m39 0h1m13 0h1m3 0h1m52 0h1m13 0h1m2 0h2m23 0h1m3 0h1m3 0h1m5 0h1m18 0h2m22 0h1m5 0h1m39 0h1m9 0h1m19 0h1M28 221h1m7 0h1m18 0h1m23 0h1m10 0h1m1 0h1m27 0h1m17 0h1m59 0h1m87 0h1m28 0h1m23 0h1m3 0h1m21 0h1m17 0h1m1 0h1m38 0h1m32 0h1m17 0h1m15 0h1m44 0h1m19 0h1m33 0h1m4 0h1m4 0h1m5 0h1m7 0h1M37 222h1m2 0h1m1 0h1m21 0h1m37 0h1m36 0h1m41 0h1m13 0h1m21 0h1m30 0h1m11 0h1m38 0h1m12 0h1m26 0h1m41 0h1m32 0h1m1 0h1m17 0h1m2 0h1m26 0h1m6 0h1m66 0h1m8 0h1m7 0h1m5 0h1m13 0h1m5 0h1M21 223h1m48 0h1m23 0h1m6 0h1m2 0h1m9 0h1m31 0h1m36 0h1m3 0h1m5 0h2m21 0h1m5 0h1m5 0h1m9 0h2m16 0h1m11 0h1m19 0h1m1 0h1m3 0h1m2 0h1m21 0h1m4 0h1m1 0h1m18 0h1m6 0h1m15 0h1m21 0h1m4 0h1m11 0h1m5 0h1m13 0h1m4 0h1m40 0h1m29 0h1m2 0h1m1 0h1m2 0h1m23 0h1m16 0h1m16 0h1m35 0h1M24 224h1m1 0h1m12 0h1m19 0h1m16 0h1m8 0h1m3 0h1m2 0h1m2 0h1m13 0h1m1 0h1m1 0h1m50 0h1m40 0h1m7 0h1m9 0h1m1 0h1m7 0h1m36 0h1m40 0h1m2 0h1m5 0h1m19 0h1m10 0h1m16 0h1m27 0h1m10 0h1m9 0h1m2 0h1m9 0h1m9 0h1m35 0h1m2 0h1m20 0h1m13 0h1m13 0h1m18 0h1m6 0h1m28 0h1m11 0h1m16 0h1M27 225h1m32 0h2m3 0h1m8 0h1m3 0h1m6 0h1m3 0h1m9 0h1m32 0h1m6 0h1m77 0h1m19 0h1m17 0h1m4 0h1m15 0h1m11 0h1m6 0h1m23 0h1m29 0h1m19 0h1m8 0h1m36 0h1m12 0h1m31 0h1m52 0h1m13 0h1m43 0h1m24 0h1m2 0h1m4 0h1M35 226h1m5 0h1m1 0h1m4 0h1m2 0h1m7 0h2m8 0h1m14 0h1m12 0h1m9 0h1m29 0h1m11 0h1m11 0h1m16 0h1m17 0h1m1 0h1m9 0h2m13 0h1m2 0h1m24 0h3m15 0h1m30 0h1m28 0h1m1 0h1m8 0h2m11 0h1m41 0h1m12 0h1m12 0h1m14 0h1m19 0h1m3 0h1m11 0h1m12 0h1m14 0h1m19 0h1m1 0h1m25 0h1m16 0h1m14 0h1m16 0h1m9 0h1M22 227h1m24 0h1m51 0h1m38 0h1m6 0h1m4 0h1m3 0h1m8 0h1m6 0h1m20 0h2m5 0h1m37 0h1m36 0h1m7 0h1m60 0h1m19 0h1m38 0h1m15 0h1m22 0h1m14 0h1m2 0h1m13 0h1m22 0h1m7 0h1m1 0h1m8 0h1m6 0h1m50 0h1m5 0h1m9 0h1m6 0h1M23 228h1m17 0h1m3 0h1m26 0h1m7 0h1m3 0h1m32 0h1m30 0h1m54 0h1m9 0h1m28 0h1m17 0h1m39 0h1m7 0h1m15 0h1m4 0h2m17 0h2m64 0h1m3 0h1m19 0h1m17 0h2m13 0h1m6 0h1m13 0h1m13 0h1m5 0h1m14 0h1m18 0h1m41 0h1m6 0h1m3 0h1m3 0h1m5 0h1M23 229h1m24 0h1m10 0h1m6 0h1m9 0h1m11 0h1m10 0h1m59 0h1m16 0h1m4 0h1m2 0h1m9 0h1m30 0h1m10 0h1m11 0h1m22 0h1m31 0h1m3 0h1m7 0h2m3 0h1m5 0h1m10 0h1m21 0h1m16 0h1m6 0h1m6 0h1m17 0h1m12 0h1m2 0h1m20 0h1m10 0h1m4 0h1m3 0h1m9 0h1m19 0h2m4 0h2m9 0h1m2 0h1m32 0h1m5 0h1m7 0h1m5 0h2m20 0h1m13 0h1m4 0h1M24 230h1m1 0h1m1 0h1m13 0h1m4 0h1m39 0h1m7 0h1m14 0h1m5 0h1m8 0h1m25 0h1m16 0h1m4 0h1m6 0h1m31 0h1m12 0h2m18 0h1m4 0h1m12 0h1m44 0h1m46 0h1m14 0h1m6 0h1m27 0h1m10 0h1m1 0h1m25 0h1m31 0h1m21 0h2m18 0h1m20 0h1m33 0h1m5 0h1m24 0h1m3 0h1M24 231h1m5 0h1m2 0h1m7 0h1m18 0h1m47 0h1m2 0h1m8 0h1m29 0h1m19 0h1m11 0h1m5 0h1m2 0h1m3 0h1m2 0h1m19 0h1m7 0h1m7 0h1m8 0h1m12 0h1m24 0h1m24 0h1m14 0h1m21 0h1m3 0h1m4 0h2m7 0h1m2 0h1m5 0h1m21 0h1m5 0h1m15 0h1m10 0h1m10 0h1m30 0h1m5 0h1m16 0h2m12 0h1m8 0h1m1 0h1m48 0h1m24 0h1m4 0h1M37 232h1m7 0h1m3 0h1m2 0h1m4 0h3m23 0h1m8 0h1m17 0h1m1 0h1m8 0h1m5 0h1m2 0h1m10 0h1m28 0h1m24 0h1m5 0h1m16 0h1m26 0h1m5 0h2m18 0h1m12 0h1m18 0h1m23 0h1m4 0h1m5 0h1m29 0h1m40 0h1m14 0h1m9 0h2m8 0h1m10 0h1m20 0h1m5 0h1m32 0h1m32 0h1m3 0h1m2 0h1m23 0h1m14 0h1m14 0h1m3 0h1M27 233h1m11 0h1m17 0h1m21 0h1m29 0h1m13 0h1m14 0h1m48 0h1m18 0h2m57 0h1m23 0h1m3 0h1m8 0h1m27 0h1m9 0h1m41 0h1m40 0h1m7 0h1m30 0h1m3 0h1m10 0h1m6 0h1m6 0h2m21 0h1m40 0h1m1 0h1m20 0h1m1 0h1m8 0h1m13 0h1m10 0h1M43 234h1m38 0h1m1 0h1m37 0h1m12 0h1m1 0h1m6 0h1m20 0h1m19 0h1m3 0h1m4 0h1m9 0h1m6 0h1m6 0h1m5 0h1m50 0h1m3 0h1m33 0h1m3 0h1m28 0h1m15 0h1m2 0h2m36 0h1m25 0h1m20 0h1m4 0h1m22 0h1m14 0h1m10 0h1m51 0h1m15 0h1m8 0h1m13 0h1m5 0h2m8 0h1m4 0h1M108 235h1m1 0h1m5 0h1m10 0h1m10 0h1m4 0h1m9 0h1m32 0h1m9 0h1m20 0h1m31 0h1m14 0h1m7 0h1m17 0h2m26 0h1m15 0h1m22 0h1m7 0h1m88 0h1m7 0h2m13 0h1m1 0h1m1 0h1m14 0h1m3 0h1m5 0h1m17 0h1m28 0h1m9 0h1m20 0h1m2 0h1M23 236h1m2 0h1m7 0h1m26 0h1m1 0h1m43 0h1m3 0h1m4 0h1m9 0h1m6 0h1m1 0h1m9 0h1m11 0h1m1 0h1m53 0h1m19 0h1m38 0h1m17 0h1m62 0h1m1 0h1m50 0h1m23 0h1m11 0h1m53 0h2m8 0h2m82 0h1m7 0h1M35 237h1m13 0h1m6 0h1m23 0h1m39 0h1m28 0h1m49 0h1m9 0h1m4 0h1m10 0h2m82 0h1m5 0h1m35 0h1m58 0h1m14 0h1m2 0h1m9 0h1m2 0h1m2 0h1m22 0h1m3 0h1m52 0h1m21 0h1m36 0h2M20 238h1m14 0h1m20 0h1m21 0h1m6 0h1m7 0h1m7 0h1m39 0h1m5 0h2m12 0h1m32 0h1m36 0h1m16 0h1m11 0h1m21 0h1m5 0h1m7 0h1m15 0h1m5 0h1m46 0h1m22 0h1m23 0h1m2 0h1m13 0h2m7 0h1m5 0h1m22 0h1m40 0h1m63 0h1m19 0h1m7 0h1m5 0h1M89 239h1m22 0h1m27 0h1m35 0h1m43 0h1m103 0h1m1 0h1m8 0h1m22 0h1m46 0h1m69 0h1m85 0h1m1 0h1m18 0h1m18 0h1m11 0h1M32 240h1m28 0h1m19 0h1m14 0h1m3 0h1m10 0h1m5 0h1m18 0h1m17 0h1m1 0h1m6 0h1m70 0h1m30 0h1m23 0h1m22 0h1m23 0h1m3 0h1m3 0h1m35 0h1m16 0h1m12 0h1m79 0h1m36 0h1m6 0h1m12 0h1M29 241h1m22 0h1m10 0h1m15 0h1m50 0h1m143 0h1m1 0h1m6 0h1m64 0h1m1 0h1m19 0h1m7 0h1m10 0h1m76 0h1m4 0h1m11 0h1m11 0h1m5 0h1m44 0h1m4 0h1m30 0h1m11 0h1m10 0h1M48 242h1m21 0h1m61 0h3m60 0h1m46 0h1m1 0h1m29 0h2m205 0h1m18 0h1m70 0h1M57 243h1m13 0h1m63 0h1m1 0h1m15 0h1m6 0h1m55 0h1m11 0h1m21 0h1m116 0h1m51 0h1m43 0h1m19 0h1m44 0h1m42 0h1m18 0h1M34 244h1m30 0h1m7 0h1m91 0h1m14 0h1m21 0h1m77 0h1m9 0h1m12 0h1m13 0h1m22 0h1m20 0h1m7 0h1m2 0h1m12 0h1m27 0h1m18 0h1m7 0h1m23 0h1m51 0h1m23 0h1m49 0h2m24 0h1M102 245h1m9 0h1m129 0h1m23 0h1m2 0h1m25 0h1m1 0h1m51 0h1m5 0h1m10 0h1m42 0h1m35 0h1m49 0h1m6 0h1m91 0h1m4 0h1M112 246h1m18 0h1m51 0h1m26 0h1m12 0h2m35 0h1m27 0h1m10 0h1m6 0h1m13 0h1m87 0h1m34 0h1m17 0h1m1 0h1m19 0h1m18 0h2m16 0h1m14 0h1m8 0h1m2 0h1m35 0h1M56 247h1m2 0h2m1 0h1m10 0h1m8 0h1m3 0h1m42 0h1m16 0h1m25 0h1m23 0h1m2 0h1m18 0h1m8 0h1m24 0h1m17 0h1m15 0h1m15 0h1m32 0h1m18 0h1m33 0h1m42 0h1m7 0h1m17 0h1m8 0h1m7 0h1m28 0h1m34 0h1m3 0h1m43 0h1M43 248h1m8 0h1m2 0h1m27 0h1m34 0h1m49 0h1m86 0h1m2 0h1m14 0h1m67 0h1m50 0h1m1 0h1m83 0h1m26 0h1m28 0h1m17 0h1m11 0h1m4 0h1m6 0h1M171 249h1m33 0h1m61 0h1m6 0h1m1 0h1m15 0h1m75 0h1m37 0h1m34 0h1m18 0h2m66 0h1m37 0h1m31 0h1M93 250h1m22 0h1m19 0h1m40 0h1m22 0h1m2 0h1m12 0h1m34 0h1m6 0h1m11 0h1m88 0h1m9 0h1m36 0h1m23 0h1m16 0h1m2 0h2m65 0h1m43 0h1m42 0h1M30 251h1m109 0h1m2 0h1m19 0h1m65 0h1m6 0h1m7 0h1m22 0h1m22 0h1m17 0h1m44 0h1m2 0h1m79 0h1m9 0h1m80 0h1m9 0h1m34 0h2m18 0h1m6 0h1m1 0h1m14 0h1M164 252h1m37 0h1m26 0h1m38 0h1m17 0h1m2 0h1m21 0h1m22 0h1m74 0h1m57 0h1m2 0h1m6 0h2m5 0h1m52 0h1M32 253h1m25 0h1m45 0h1m12 0h1m14 0h1m5 0h1m8 0h1m3 0h1m7 0h1m30 0h1m26 0h1m14 0h1m22 0h2m9 0h1m16 0h1m22 0h1m8 0h1m26 0h1m1 0h1m77 0h1m3 0h1m34 0h1m2 0h1m95 0h1m36 0h1M35 254h1m39 0h1m7 0h1m113 0h1m5 0h1m6 0h1m76 0h1m7 0h1m1 0h1m11 0h1m131 0h1m11 0h1m69 0h1m9 0h1m16 0h1m40 0h1M64 255h1m131 0h1m41 0h1m10 0h1m26 0h1m13 0h1m68 0h1m33 0h1m50 0h1m8 0h1m46 0h1m67 0h1m19 0h1M20 256h1m9 0h1m25 0h1m15 0h1m46 0h1m34 0h1m103 0h1m41 0h1m13 0h1m21 0h1m29 0h1m96 0h1m15 0h1m28 0h1m20 0h1m26 0h1m52 0h1M48 257h1m17 0h1m15 0h1m37 0h1m42 0h1m24 0h1m17 0h1m16 0h1m2 0h1m18 0h1m31 0h1m60 0h1m14 0h1m22 0h1m19 0h1m110 0h1m3 0h1m21 0h1m16 0h1m16 0h1m28 0h1M21 258h1m9 0h1m99 0h1m20 0h1m15 0h1m5 0h1m43 0h1m39 0h1m79 0h1m28 0h1m40 0h2m38 0h1m11 0h1m41 0h1m1 0h1m6 0h1m62 0h1m15 0h1m20 0h1M39 259h2m32 0h1m74 0h1m10 0h1m22 0h1m17 0h1m71 0h1m59 0h1m8 0h1m5 0h1m38 0h1m1 0h1m6 0h1m13 0h1m32 0h1m3 0h1m15 0h1m9 0h1m8 0h1m63 0h1m27 0h1m18 0h1M20 260h1m14 0h1m152 0h1m31 0h1m106 0h1m3 0h1m17 0h1m55 0h1m50 0h1m32 0h1m115 0h1M63 261h1m40 0h1m34 0h1m19 0h1m1 0h1m89 0h1m56 0h1m19 0h1m18 0h2m20 0h1m27 0h1m1 0h1m28 0h1m42 0h1m25 0h1m16 0h2m84 0h1M31 262h1m13 0h1m5 0h1m3 0h1m47 0h1m11 0h1m53 0h1m40 0h1m41 0h1m70 0h1m108 0h1m43 0h1m88 0h1m9 0h1m12 0h1m15 0h1M24 263h1m33 0h1m89 0h1m26 0h1m141 0h1m41 0h1m13 0h1m10 0h1m75 0h1m111 0h1M96 264h1m20 0h1m45 0h1m121 0h1m29 0h1m39 0h1m30 0h1m16 0h1m102 0h1M71 265h1m27 0h1m6 0h1m20 0h1m36 0h1m60 0h1m1 0h1m261 0h1m20 0h1m10 0h1m24 0h1m22 0h1M26 266h1m17 0h1m153 0h1m30 0h1m25 0h1m24 0h1m5 0h1m14 0h1m105 0h1m93 0h1m53 0h1m46 0h1M36 267h1m1 0h1m1 0h1m73 0h1m3 0h1m45 0h1m48 0h1m38 0h1m157 0h1m10 0h1m78 0h1m73 0h1M26 268h1m34 0h2m31 0h1m9 0h1m3 0h1m19 0h1m15 0h1m4 0h1m11 0h1m15 0h1m21 0h1m34 0h1m54 0h1m1 0h1m33 0h1m46 0h1m39 0h1m50 0h1m1 0h1m35 0h1m16 0h1m1 0h1m3 0h2m55 0h1m25 0h1M123 269h1m17 0h1m24 0h1m66 0h1m57 0h2m40 0h1m62 0h1m33 0h1m25 0h1m107 0h1m24 0h1m10 0h1m11 0h1M78 270h1m34 0h1m109 0h1m31 0h1m69 0h1m45 0h1m3 0h1m21 0h1m2 0h1m10 0h1m21 0h1m31 0h1m79 0h1m6 0h1m21 0h1m6 0h1M64 271h1m2 0h1m13 0h1m79 0h1m44 0h1m12 0h1m22 0h1m86 0h1m15 0h1m6 0h1m7 0h1m59 0h1m8 0h1m17 0h1m27 0h1m13 0h1m33 0h1m37 0h1M103 272h1m29 0h1m18 0h1m15 0h1m106 0h1m71 0h1m34 0h1m11 0h1m74 0h1m91 0h1m36 0h1M70 273h1m37 0h1m7 0h1m96 0h1m198 0h2m12 0h1m71 0h2M21 274h1m126 0h1m11 0h1m3 0h1m52 0h1m90 0h1m41 0h1m21 0h1m20 0h1m83 0h1m38 0h1m23 0h1m17 0h1m12 0h1m1 0h1M75 275h1m90 0h1m2 0h1m30 0h1m53 0h1m17 0h1m14 0h1m137 0h1m61 0h1m31 0h1m36 0h1m51 0h1M40 276h1m6 0h1m13 0h1m107 0h1m8 0h1m114 0h1m111 0h1m75 0h1m100 0h1m4 0h1M23 277h1m71 0h1m57 0h1m44 0h1m19 0h1m82 0h1m44 0h1m143 0h1m17 0h1M65 278h1m89 0h1m33 0h1m5 0h1m44 0h1m42 0h2m52 0h1m60 0h1m57 0h1M88 279h1m14 0h1m38 0h1m67 0h1m51 0h1m75 0h1m25 0h1m79 0h1m127 0h1M115 280h1m85 0h1m94 0h1m27 0h1m35 0h1m29 0h1m202 0h1m2 0h1M65 281h1m88 0h1m84 0h1m11 0h1m61 0h1m4 0h2m38 0h1m23 0h1m212 0h1M73 282h1m63 0h1m76 0h1m63 0h1m8 0h1m25 0h1m70 0h1m81 0h1m13 0h1m101 0h1M45 283h1m40 0h1m25 0h1m68 0h1m16 0h1m100 0h1m99 0h1m29 0h1m21 0h1m25 0h1m81 0h1M113 284h1m76 0h1m155 0h1m33 0h1m105 0h1m104 0h1M82 285h1m151 0h1m110 0h1m59 0h1m195 0h1M46 286h1m82 0h1m1 0h1m216 0h1m55 0h1m76 0h1M262 287h1m164 0h1M32 288h1m120 0h1m95 0h1m119 0h1m15 0h1m31 0h1m7 0h1m22 0h2m72 0h1M81 289h1m66 0h1m231 0h1M37 290h1m41 0h1m52 0h1m38 0h1m5 0h1m68 0h1m277 0h1M34 291h1m138 0h1m167 0h1m32 0h1m87 0h1M94 292h1m343 0h1m80 0h1m2 0h1M183 293h1m213 0h1M114 294h1m13 0h1m75 0h1m64 0h1m107 0h1M78 295h1m525 0h1M134 296h1m273 0h1m73 0h1m72 0h1M201 297h1m64 0h1m217 0h1M150 298h1m55 0h1m17 0h1m10 0h1m46 0h1M149 299h1m435 0h1M52 300h1m211 0h1M213 301h1m18 0h1m135 0h1M184 302h1M475 303h1M296 304h1m39 0h1M216 305h1m24 0h1m335 0h1M231 306h1m200 0h1M260 307h1m138 0h1m216 0h1M69 308h1m20 0h1m56 0h1m199 0h1M212 309h1m234 0h1m45 0h1m78 0h1M125 310h1m21 0h1m123 0h1M106 313h1m58 0h1m73 0h1m169 0h1m43 0h1M157 314h1m408 0h2M113 315h1m151 0h1m255 0h1M310 316h1m108 0h1M458 317h1M71 318h1m285 0h1M261 319h1M147 322h1M301 323h1M557 324h1M37 325h1m556 0h1M218 329h1M320 330h1M120 332h1m99 0h1m64 0h1M192 334h1m309 0h1M551 335h1m33 0h1M59 337h1M322 340h1M42 344h1M111 346h1M200 348h1M338 350h1M610 351h1M352 357h1M285 367h1M156 371h1M286 373h1M320 375h1M422 376h1M361 378h1M311 385h1M225 391h1M478 393h1M385 395h1M161 397h1m384 0h1"/><path stroke="rgb(0,0,118)" d="M31 80h1m80 0h1m35 0h1m29 0h1m7 0h1m67 0h1m55 0h1m38 0h1m2 0h1m17 0h1M88 81h1m73 0h1m266 0h1m166 0h1m15 0h1M53 82h1m107 0h1m107 0h1m105 0h1m8 0h1m139 0h1m86 0h1M41 83h1m24 0h1m54 0h1m168 0h1m55 0h1m231 0h1M119 84h1m95 0h1m132 0h1M61 85h1m35 0h1m101 0h1m50 0h1m8 0h1m188 0h1M28 86h1m58 0h1m82 0h1m23 0h1m7 0h1m96 0h1m8 0h1m24 0h1m13 0h1m19 0h1m189 0h1m31 0h1M244 87h1m6 0h1M54 88h1m63 0h1m80 0h1m98 0h1m86 0h1m24 0h1M65 89h1m117 0h1m199 0h1m48 0h1m13 0h1m142 0h1M176 90h1m316 0h1M94 91h1m273 0h1m68 0h1M28 92h1m53 0h1m31 0h1m5 0h1m287 0h1m20 0h1m65 0h1M36 93h1m99 0h1m76 0h1m281 0h1M98 94h1m188 0h1m152 0h1m8 0h1m70 0h1m55 0h1M555 95h1m35 0h1M214 96h1m14 0h1m5 0h1m6 0h1m75 0h1m6 0h1m31 0h1m24 0h1M77 97h1m188 0h1m63 0h1m65 0h1m106 0h1M112 98h1m4 0h1m402 0h1M20 99h1m20 0h1m331 0h1m89 0h1m2 0h1m22 0h1M158 100h1m65 0h1m63 0h1m180 0h1m13 0h1M148 101h1m163 0h1m78 0h1m130 0h1m21 0h1m22 0h1M55 102h1m41 0h1m270 0h1m154 0h1M281 103h1m104 0h1m230 0h1M48 104h1m8 0h1m43 0h1m95 0h1m44 0h1m107 0h1m11 0h1m140 0h1m1 0h1m107 0h1M147 105h1m86 0h1m23 0h1m8 0h1m207 0h1M113 106h1m57 0h1m29 0h1m33 0h1m104 0h1m68 0h1m122 0h1m78 0h1M148 107h1m70 0h1m247 0h1m32 0h1M129 108h1m88 0h1m12 0h1m161 0h1m4 0h1m33 0h1m4 0h1m94 0h1M35 109h1m112 0h1m79 0h1m59 0h1m40 0h1m37 0h1M305 110h1m40 0h1M32 111h1m89 0h1m42 0h1m48 0h1m110 0h1m40 0h1M39 112h1m213 0h1m190 0h1M29 113h1m55 0h1m88 0h1m64 0h1M208 114h1m35 0h1m66 0h1m155 0h1m85 0h1m33 0h1M127 115h1m99 0h1m166 0h1m14 0h1m36 0h1m63 0h1m23 0h1M100 116h1m328 0h1m177 0h1M76 117h1m64 0h1m6 0h1m198 0h1m109 0h1m123 0h1M372 118h1m207 0h1M209 119h1m62 0h1m73 0h1m25 0h1m101 0h1M402 120h1m32 0h1m86 0h1M92 121h1m25 0h1m253 0h1m44 0h1M192 122h1m107 0h1m75 0h1m124 0h1M357 123h1m12 0h1M115 124h1m16 0h1m27 0h1m205 0h1m107 0h1m33 0h1m20 0h1M102 125h1m44 0h1m218 0h1m110 0h1m74 0h1M347 126h1M169 127h1m76 0h1m137 0h1M121 128h1m208 0h1M69 129h1m193 0h1m125 0h1m17 0h1m49 0h1M224 130h1m132 0h1m7 0h1m67 0h1m8 0h1m48 0h1M531 131h1m7 0h1M74 132h1m139 0h1m136 0h1m60 0h1m66 0h1m45 0h1m5 0h1m46 0h1M265 133h1m319 0h1M156 134h1m64 0h1m103 0h1m128 0h1M394 135h1m119 0h1M92 136h1m59 0h1m75 0h1m26 0h1m306 0h1M47 137h1m63 0h1m165 0h1m60 0h1m131 0h1M129 138h1m60 0h1m70 0h1m233 0h1M203 139h1m96 0h1m59 0h1m178 0h1M561 140h1M439 141h1m43 0h1M391 142h1M213 143h1m248 0h1m92 0h1M133 144h1m11 0h1m165 0h1m46 0h1m12 0h1M37 145h1m201 0h1M245 146h1m85 0h1m78 0h1m42 0h1m82 0h1M443 147h1m116 0h1M41 148h1m300 0h1M266 149h1M23 150h1m4 0h1m34 0h1m418 0h1m78 0h1M106 151h1m186 0h1m262 0h1m7 0h1m5 0h1M122 152h1m179 0h1m313 0h1M212 153h1m220 0h1m12 0h1m65 0h1m76 0h1M103 154h1m60 0h1m103 0h1M277 155h1m159 0h1M254 156h1m20 0h1m190 0h1m63 0h1m15 0h1M555 157h1m12 0h1m42 0h1M444 158h1M361 159h1m146 0h1M198 160h1m214 0h1m21 0h1M136 161h1m122 0h1m230 0h1m8 0h1M50 162h1m243 0h1M141 163h1m416 0h1M149 164h1m198 0h1m55 0h1m71 0h1M88 165h1m20 0h1m99 0h1m25 0h1m369 0h1M45 166h1m99 0h1m431 0h1m20 0h1M141 167h1m332 0h1m85 0h1m29 0h1M277 168h1m13 0h1m186 0h1m22 0h1M186 169h1m232 0h1m5 0h1m94 0h1M155 170h1m80 0h1m17 0h1m254 0h1m8 0h1m26 0h1M390 171h2m41 0h1m64 0h1m1 0h1m2 0h1M52 172h1m192 0h1m15 0h1m272 0h1m43 0h1M105 173h1m327 0h1m105 0h1M233 174h1m66 0h1m4 0h1m18 0h1m24 0h1m42 0h1M40 175h1m60 0h1m117 0h1m75 0h1m62 0h1m91 0h1M77 176h1m101 0h1m60 0h1m87 0h1m35 0h1m19 0h1m59 0h1m81 0h2m42 0h1M45 177h1m353 0h1m4 0h1m50 0h1m11 0h1m38 0h1M216 178h1m185 0h1M53 179h1m162 0h1m76 0h1M102 180h1m60 0h1m15 0h1m294 0h1m84 0h1m55 0h1M111 181h1m90 0h1m28 0h1m211 0h1m128 0h1M68 182h1m219 0h1m6 0h1m180 0h1m93 0h1m8 0h1M342 183h1M54 184h1m147 0h1m28 0h1m45 0h1m80 0h1m88 0h1m29 0h1m46 0h1m92 0h1M20 185h1m92 0h1m167 0h1m34 0h1m35 0h1m102 0h1m2 0h1m150 0h1M192 186h1m62 0h1m105 0h1m29 0h1m11 0h1m11 0h1m4 0h1m76 0h1M28 187h1m62 0h1m76 0h1m64 0h1m71 0h1m179 0h1m52 0h1M126 188h1m12 0h1m37 0h1m34 0h1m118 0h1m96 0h1m10 0h1m145 0h1m16 0h1M58 189h1m45 0h1m110 0h1m106 0h1m126 0h1m2 0h1m47 0h1M76 190h1m34 0h1m63 0h1m135 0h1m21 0h1M50 191h1m17 0h1m31 0h1m48 0h2m41 0h1m21 0h1m195 0h1m27 0h1m173 0h1M20 192h1m67 0h1m290 0h1m146 0h1m27 0h1m35 0h1M398 193h1m32 0h1m143 0h1m12 0h1M77 194h1m39 0h1m34 0h1m36 0h1m7 0h1m32 0h1m34 0h1m23 0h1m3 0h1m131 0h1m24 0h1m55 0h1m63 0h1M100 195h1m37 0h1m4 0h1m28 0h1m59 0h1m228 0h1m13 0h1m63 0h1M329 196h1m30 0h1m48 0h1m6 0h1m56 0h1m10 0h1m20 0h1M39 197h1m9 0h1m101 0h1m74 0h1m306 0h1m1 0h1m8 0h1m46 0h1M110 198h1m61 0h1m18 0h1m23 0h1m63 0h1m49 0h1m56 0h1m94 0h1m116 0h1M45 199h1m142 0h1m17 0h1m30 0h1m89 0h1m5 0h1m25 0h1m15 0h1m1 0h1m7 0h1m56 0h1m22 0h1m15 0h1m45 0h1m5 0h1m3 0h1M214 200h1m37 0h1m248 0h1m63 0h1m31 0h1M80 201h1m12 0h1m35 0h1m147 0h1m59 0h1m188 0h1M145 202h1m230 0h1m189 0h1M23 203h1m17 0h2m7 0h1m22 0h1m17 0h1m132 0h1m113 0h1m52 0h1m132 0h1M25 204h1m11 0h1m38 0h1m33 0h1m83 0h1m34 0h1m31 0h1m17 0h1m22 0h1m24 0h1m18 0h1m10 0h1m18 0h1m75 0h1m71 0h1M82 205h2m10 0h1m14 0h1m80 0h1m139 0h1m112 0h1m68 0h1m17 0h1m51 0h1M159 206h1m31 0h1m8 0h1m119 0h1m3 0h1m6 0h1m93 0h1m9 0h1m23 0h1m115 0h1M68 207h1m41 0h1m15 0h1m78 0h1m22 0h1m8 0h1m19 0h1m84 0h1m28 0h1m40 0h1m12 0h1m6 0h1m22 0h1m72 0h1m38 0h1M153 208h1m6 0h1m66 0h1m118 0h1m88 0h1M97 209h1m29 0h1m164 0h1m28 0h1m3 0h1m114 0h1m16 0h1M28 210h1m45 0h1m169 0h1m85 0h1m14 0h1m93 0h1m65 0h1m38 0h1M101 211h1m119 0h1m5 0h1m156 0h1m137 0h1m16 0h1m61 0h1m6 0h1M32 212h1m54 0h1m15 0h1m61 0h1m14 0h1m9 0h1m1 0h1m65 0h1m49 0h1m1 0h1m6 0h1m6 0h1m10 0h1m8 0h1m22 0h1m13 0h1M30 213h1m44 0h1m37 0h1m5 0h1m80 0h1m116 0h1m63 0h1m18 0h1m156 0h1m54 0h1M115 214h1m21 0h1m26 0h1m14 0h1m37 0h1m54 0h1m152 0h1m15 0h1m85 0h1m66 0h1"/><path stroke="rgb(0,0,118)" d="M204 215h1m123 0h1m134 0h1m84 0h1M50 216h1m121 0h1m143 0h1m46 0h1m22 0h1m48 0h1m48 0h1m87 0h1M238 217h1m6 0h1m19 0h1m107 0h1m18 0h1m6 0h1m20 0h1m118 0h1M36 218h1m1 0h1m18 0h1m3 0h1m25 0h1m25 0h1m25 0h1m23 0h1m25 0h1m79 0h1m48 0h1m36 0h1m55 0h1m147 0h1M31 219h1m102 0h1m51 0h1m75 0h1m65 0h1m10 0h1m91 0h1m26 0h1m13 0h1m14 0h1M29 220h1m15 0h1m44 0h1m23 0h1m16 0h1m314 0h1m17 0h1m80 0h1m67 0h1M84 221h1m135 0h1m49 0h1m192 0h1m48 0h1m66 0h1M25 222h1m15 0h1m18 0h1m9 0h1m210 0h1m4 0h1m17 0h1m1 0h1m19 0h1m9 0h1m86 0h1m9 0h1m17 0h1m2 0h1m50 0h1m2 0h1m45 0h1M41 223h1m3 0h1m5 0h1m44 0h1m155 0h1m7 0h1m13 0h1m52 0h1m8 0h1m48 0h1m50 0h1m3 0h1m30 0h1M78 224h1m52 0h1m119 0h1m3 0h1m48 0h1m16 0h1m22 0h1m53 0h1m36 0h1m1 0h1M100 225h1m13 0h1m212 0h1m6 0h1m111 0h1m68 0h1m23 0h1m16 0h1m12 0h1m39 0h1M95 226h1m69 0h1m149 0h1m12 0h1m9 0h1m18 0h1m44 0h1m9 0h1m189 0h1M28 227h1m4 0h1m15 0h1m23 0h1m11 0h1m110 0h1m35 0h1m10 0h1m67 0h1m32 0h1m129 0h1m107 0h1m8 0h1M190 228h1m44 0h1m5 0h1m33 0h1m38 0h1m26 0h1m244 0h1m25 0h1m4 0h1M51 229h1m50 0h2m12 0h1m2 0h1m48 0h1m10 0h1m8 0h1m11 0h1m58 0h1m10 0h1m18 0h1m163 0h1m75 0h1m6 0h1m3 0h1m29 0h1m15 0h1M27 230h1m20 0h1m54 0h1m48 0h1m2 0h1m51 0h1m83 0h1m66 0h1m30 0h1m5 0h1m131 0h2m14 0h1m4 0h1M52 231h1m50 0h1m22 0h1m16 0h1m9 0h1m27 0h1m2 0h1m139 0h1m6 0h1m6 0h1m102 0h1m89 0h1M101 232h1m27 0h1m18 0h1m7 0h1m10 0h1m195 0h1m16 0h1m185 0h1m30 0h1M192 233h1m18 0h1m3 0h1m6 0h1m12 0h1m2 0h1m20 0h1m34 0h1m59 0h1m43 0h1m4 0h1m31 0h1m67 0h1m15 0h1m3 0h1m18 0h1m8 0h1m18 0h1m26 0h1M186 234h1m4 0h1m35 0h1m3 0h1m10 0h1m71 0h1m37 0h1m32 0h1m134 0h1m54 0h1M43 235h1m32 0h1m2 0h1m2 0h1m104 0h1m49 0h2m49 0h1m18 0h1m55 0h1m130 0h1m10 0h1m63 0h1m11 0h1m33 0h1M46 236h1m2 0h1m60 0h1m8 0h1m55 0h1m61 0h1m32 0h1m9 0h1m3 0h1m29 0h1m51 0h1m76 0h1m49 0h1m27 0h1m13 0h1m11 0h1m19 0h1m14 0h1M21 237h2m3 0h1m14 0h1m21 0h1m24 0h1m6 0h1m29 0h1m7 0h1m26 0h1m76 0h1m16 0h1m42 0h1m29 0h1m4 0h1m59 0h1m25 0h1m58 0h1m1 0h1m20 0h1m13 0h1m60 0h1M77 238h1m2 0h1m44 0h1m23 0h1m33 0h1m5 0h1m11 0h1m15 0h1m2 0h1m5 0h1m42 0h1m33 0h1m15 0h1m15 0h1m5 0h1m64 0h1m12 0h1m59 0h1m44 0h1M31 239h1m2 0h1m9 0h1m3 0h1m6 0h1m14 0h1m24 0h1m30 0h1m42 0h1m23 0h2m1 0h1m26 0h1m24 0h1m29 0h1m25 0h1m2 0h1m43 0h1m136 0h1m26 0h1m6 0h1m16 0h1m48 0h1m10 0h1M37 240h1m7 0h1m28 0h1m19 0h1m38 0h1m11 0h1m29 0h1m23 0h1m28 0h1m19 0h1m81 0h1m53 0h1m3 0h1m5 0h1m55 0h1m69 0h1m18 0h1m41 0h1m29 0h1M25 241h1m25 0h1m16 0h1m52 0h1m51 0h1m35 0h1m114 0h1m3 0h1m22 0h1m29 0h1m38 0h1m22 0h1m66 0h1m18 0h1m27 0h1m39 0h1M268 242h1m53 0h1m14 0h1m17 0h1m54 0h1m3 0h1m30 0h1m21 0h1m74 0h1m33 0h1m14 0h1M30 243h1m47 0h1m21 0h1m12 0h1m4 0h2m48 0h1m2 0h1m103 0h1m16 0h1m5 0h1m17 0h1m32 0h1m67 0h1m41 0h1m66 0h1m6 0h1m57 0h1m10 0h1m8 0h1M38 244h2m14 0h1m19 0h1m104 0h1m19 0h1m18 0h1m26 0h1m7 0h1m41 0h1m58 0h1m19 0h1m9 0h1m29 0h1m14 0h1m29 0h1m85 0h1m19 0h1m12 0h1m28 0h1M44 245h1m21 0h1m19 0h1m12 0h1m4 0h1m17 0h1m22 0h1m55 0h1m11 0h1m18 0h1m5 0h2m50 0h1m226 0h1m15 0h1m18 0h1m54 0h1M24 246h1m18 0h1m2 0h1m13 0h1m45 0h1m4 0h1m24 0h1m55 0h2m48 0h1m7 0h1m17 0h1m66 0h1m40 0h1m10 0h1m3 0h1m6 0h1m42 0h1m9 0h1m161 0h2M80 247h1m110 0h1m14 0h1m10 0h1m29 0h1m15 0h1m59 0h1m10 0h1m13 0h1m6 0h1m61 0h1m50 0h1m24 0h1m29 0h1m69 0h1m23 0h1M69 248h1m191 0h1m50 0h1m24 0h1m53 0h1m36 0h1m52 0h1m39 0h1M27 249h1m48 0h1m77 0h1m25 0h1m66 0h1m32 0h1m54 0h1m9 0h1m37 0h1m109 0h1m24 0h1m34 0h1m34 0h1M56 250h1m19 0h1m150 0h1m152 0h1m54 0h1m24 0h1m53 0h1m9 0h1m66 0h1M21 251h1m173 0h1m14 0h1m75 0h1m17 0h1m92 0h1m148 0h1m24 0h1m23 0h1M221 252h1m61 0h1m17 0h1m89 0h1m67 0h1m52 0h1m78 0h1M21 253h1m12 0h1m217 0h1m98 0h1m12 0h1m77 0h1m67 0h1m77 0h1M68 254h1m28 0h1m24 0h1m72 0h1m92 0h1m9 0h1m98 0h1m37 0h1m35 0h1m30 0h1m36 0h1m38 0h1m34 0h1M21 255h1m26 0h1m31 0h1m21 0h1m16 0h1m5 0h1m115 0h1m47 0h1m104 0h1m127 0h1m25 0h1m13 0h1m42 0h1M45 256h1m28 0h1m102 0h1m60 0h1m3 0h1m114 0h1m11 0h1m2 0h1m77 0h1M52 257h1m49 0h1m50 0h1m13 0h1m63 0h1m32 0h1m64 0h1m196 0h1m17 0h1m48 0h1m8 0h1M49 258h1m29 0h1m69 0h1m6 0h1m65 0h1m57 0h1m50 0h1m23 0h1m33 0h1m63 0h1m23 0h1m51 0h1m86 0h1M312 259h1m14 0h1m33 0h1m5 0h1m127 0h1m33 0h1M21 260h1m20 0h1m88 0h1m129 0h1m338 0h1m11 0h1M32 261h1m64 0h1m65 0h1m5 0h1m23 0h1m16 0h1m68 0h1m107 0h1m13 0h1m49 0h1m20 0h1m19 0h1m13 0h1m76 0h1m3 0h1M153 262h1m1 0h1m111 0h1m15 0h1m30 0h1m154 0h1m38 0h1m6 0h1M302 263h1m53 0h1m53 0h1m61 0h1m1 0h1m108 0h1M69 264h1m56 0h1m49 0h1m29 0h1m24 0h1m25 0h1m1 0h1m51 0h1m48 0h1m9 0h1m46 0h1m4 0h1m118 0h1M149 265h1m62 0h1m1 0h1m56 0h1m258 0h1m47 0h1M63 266h1m87 0h1m30 0h1m12 0h1m53 0h1m1 0h1m4 0h1m2 0h1m76 0h1m51 0h1m99 0h1m94 0h1m2 0h1m18 0h1m4 0h1M44 267h1m28 0h1m11 0h1m53 0h1m50 0h1m71 0h1m67 0h1m78 0h1m150 0h1M29 268h1m132 0h1m13 0h1m17 0h1m57 0h1m104 0h1m73 0h1m154 0h1M183 269h1m23 0h1m48 0h1m73 0h1m141 0h1m75 0h1m32 0h1M88 270h1m43 0h1m51 0h1m255 0h1m149 0h1M150 271h1m79 0h1m231 0h1m68 0h1M252 272h1m173 0h1m89 0h1m47 0h1m19 0h1M225 273h1m280 0h1m4 0h1m99 0h1M52 274h1m158 0h1m58 0h1m60 0h1m46 0h1m24 0h1m33 0h1m23 0h1m63 0h1m2 0h1M136 275h1m100 0h1m185 0h1m72 0h1m78 0h1M129 276h1m324 0h1m97 0h1M33 277h1m225 0h1m6 0h1M47 278h1m35 0h1M96 279h1m33 0h1m104 0h1m64 0h1m160 0h1m29 0h1M109 280h1m86 0h1M127 281h1m134 0h1m21 0h1m99 0h1m63 0h1M24 282h1m241 0h1m107 0h1m28 0h1m173 0h1M216 283h1M231 284h1m41 0h1m145 0h1M372 285h1M48 286h1m34 0h1m436 0h1M146 287h1m4 0h1m5 0h1M254 288h1M99 289h1m240 0h1M64 290h1m85 0h1m142 0h1M30 291h1m27 0h1m437 0h1M103 292h1m127 0h1m48 0h1m69 0h1M53 293h1M54 295h1M22 296h1m458 0h1m120 0h1M550 298h1M342 299h1m53 0h1M499 300h1M82 301h1m1 0h1m70 0h1m355 0h1M298 302h1m153 0h1M242 303h1m132 0h1M165 304h1M527 307h1M395 310h1M338 311h1M46 318h1M137 320h1m342 0h1M269 324h1M615 326h1M479 332h1M511 334h1M380 343h1"/></g><g filter="url(#b2)"><path stroke="rgb(0,0,145)" d="M320 80h1m82 0h1m28 0h1m6 0h1m30 0h1m131 0h1M107 81h1m150 0h1M71 82h1m178 0h1m3 0h1m25 0h1m52 0h1m147 0h1m29 0h1m40 0h1M201 83h1m22 0h1m10 0h1m101 0h1m14 0h1m61 0h1m125 0h1M191 84h1m182 0h1m19 0h1m70 0h1m130 0h1m7 0h1M248 85h1m113 0h1m49 0h1m12 0h1M119 86h1m48 0h1m82 0h1m116 0h1m196 0h1M119 87h1m272 0h1m35 0h1m85 0h1M505 88h1M32 89h1m378 0h1m49 0h1m28 0h1m101 0h1M46 90h1m125 0h1m123 0h1m93 0h1m178 0h1M91 91h1m107 0h1m137 0h1M24 92h1m127 0h1m122 0h1m67 0h1m48 0h1m5 0h1M173 93h1m141 0h1m14 0h1m8 0h1m148 0h1m97 0h1M161 94h1m47 0h1m17 0h1m51 0h1m45 0h1m85 0h1m66 0h1m51 0h1m29 0h1m42 0h1M164 95h1m18 0h1m93 0h1m65 0h1m48 0h1m10 0h1m42 0h1m84 0h1m10 0h1m18 0h1M135 96h1m56 0h1m15 0h1m180 0h1m26 0h1m68 0h1m16 0h1m51 0h1M26 97h1m19 0h1m150 0h1m177 0h1m13 0h1m51 0h1m42 0h1m9 0h1M146 98h1m127 0h1m268 0h1M23 99h1m388 0h1m23 0h1m14 0h1m62 0h1m48 0h1M142 100h1m17 0h1m7 0h1m33 0h1m113 0h1m22 0h1m206 0h1m19 0h1M452 101h1m24 0h1m127 0h1M245 102h1m168 0h1m94 0h1m72 0h1M47 103h1m75 0h1m10 0h1m14 0h1m223 0h1m80 0h1m104 0h1M92 104h1m118 0h1m121 0h1m61 0h1m145 0h1M25 105h1m67 0h1m194 0h1m27 0h1m205 0h1m44 0h1m15 0h1m4 0h1M116 106h1m5 0h1m137 0h1m234 0h1M71 107h1m66 0h1m77 0h1m88 0h1m63 0h1m63 0h1m127 0h1M289 108h1m35 0h1m132 0h1m22 0h1m26 0h1m3 0h1M120 109h1m15 0h1m30 0h1m45 0h1m375 0h1M50 110h1m7 0h1m184 0h1m20 0h1m100 0h1m125 0h1M71 111h1m43 0h1m30 0h1m3 0h1m7 0h1m46 0h1m131 0h1m21 0h1m185 0h1m71 0h1M188 112h1m154 0h1m126 0h1M79 113h1m20 0h1m220 0h1m4 0h1m45 0h1m61 0h1m136 0h1M108 114h1m79 0h1m69 0h1m33 0h1m206 0h1m6 0h1M120 115h1m119 0h1M183 116h1m15 0h1m150 0h1m59 0h1m34 0h1m70 0h1m63 0h1M34 117h1m214 0h1m160 0h1m30 0h1m141 0h1M29 118h1m59 0h1m308 0h1m188 0h1M35 119h1m109 0h1m149 0h1m280 0h1M185 120h2m21 0h1m31 0h1m142 0h1M231 121h1m45 0h1m189 0h1m55 0h1M30 122h1m72 0h1m205 0h1m78 0h1m199 0h1M468 123h1M127 124h1m84 0h1m220 0h1m85 0h1M126 125h1m191 0h1M172 126h1m105 0h1m137 0h1m94 0h1M253 127h1m70 0h1M226 128h1m87 0h1m118 0h1m52 0h1m129 0h1M28 129h1m247 0h1M259 130h1m31 0h1m323 0h1M301 131h1m219 0h1m1 0h1m30 0h1M92 132h1m242 0h1m176 0h1m43 0h1M20 133h1m266 0h1m217 0h1m81 0h1m8 0h1M272 134h1m56 0h1m27 0h1m239 0h1M84 135h1m23 0h1m37 0h1m359 0h1M119 136h1m8 0h1m49 0h1m52 0h1m114 0h1m45 0h1m74 0h1m11 0h1m39 0h1M243 137h1m51 0h1m308 0h1M54 138h1m16 0h1m78 0h1m111 0h1m1 0h1m208 0h1M52 139h1m213 0h1m109 0h1m210 0h1M153 140h1m303 0h1m54 0h1M176 141h1m65 0h1m45 0h1m63 0h1m106 0h1m35 0h1m22 0h1m81 0h1M232 142h1m340 0h1M168 143h1m74 0h1m247 0h1M45 144h1m111 0h1m7 0h1m47 0h1m146 0h1M248 145h1M101 146h1m213 0h1m206 0h1M69 147h1m170 0h1m151 0h1M107 148h1m99 0h1M106 149h1m133 0h1m344 0h1m3 0h1M109 150h1m215 0h1m21 0h1M96 151h1m17 0h1m317 0h1M245 152h1m176 0h1m110 0h1M207 153h1m36 0h1M39 154h1m33 0h1m145 0h1m355 0h1M163 155h1m283 0h1m17 0h1M155 156h1m137 0h1m323 0h1M441 158h1m40 0h1m19 0h1m67 0h1M511 159h1m10 0h1M95 160h1m401 0h1m113 0h1M87 161h1m344 0h1m13 0h1m35 0h1M607 163h1M22 164h1m103 0h1m5 0h1m80 0h1m173 0h1m4 0h1m174 0h1M172 165h1m105 0h1M102 166h1m175 0h1m126 0h1m43 0h1M161 167h1M22 168h1m592 0h1M349 169h1M104 170h1m145 0h1m45 0h1m93 0h1M49 172h1M95 173h1m40 0h1m234 0h1M85 175h1M528 176h1M175 177h1M185 178h1m3 0h1M99 179h1M166 180h1m139 0h1M199 185h1m1 0h1m230 0h1M562 187h1M144 188h1m365 0h1M177 189h1m145 0h1m38 0h1M254 191h1M319 192h1M186 193h1M190 194h1M479 195h1M559 197h1M549 199h1M188 201h1m2 0h1M237 203h1m73 0h1M358 204h1m68 0h1m49 0h1M550 206h1M118 207h1m74 0h1M390 209h1M118 213h1m472 0h1M140 215h1m235 0h1m49 0h1M240 216h1M600 218h1m9 0h1M497 219h1M188 221h1m54 0h1M363 222h1M366 224h1m125 0h1M211 225h1M86 227h1M254 228h1m8 0h1m202 0h1M93 229h1m428 0h1M553 231h1m58 0h1M186 232h1m39 0h1M280 233h1M210 234h1M62 235h1m196 0h1m201 0h1M86 237h1m257 0h1m204 0h1M315 239h1m6 0h1M174 241h1M30 244h1m326 0h1m31 0h1M46 245h1M140 246h1m389 0h1M318 247h1m229 0h1M87 248h1M114 249h1m174 0h1M324 252h1M82 255h1M495 258h1M372 261h1M449 267h1M554 268h1M303 269h1M263 283h1M42 286h1m416 0h1"/><path stroke="rgb(0,0,172)" d="M52 80h1m9 0h1m294 0h1m160 0h1M34 81h1m130 0h1m144 0h1m8 0h1m15 0h1m15 0h1m13 0h1M55 82h1m136 0h1m55 0h1m66 0h1M251 83h1m60 0h1m45 0h1m56 0h1m201 0h1M87 84h1m242 0h1m97 0h1m84 0h1m62 0h1m2 0h1M136 85h1m42 0h1m24 0h1m163 0h1m33 0h1M81 86h1m392 0h1m139 0h1M29 87h1m220 0h1m176 0h1M21 88h1m40 0h1m4 0h1m118 0h1m208 0h1m38 0h1m10 0h1M37 89h1m4 0h1m11 0h1m141 0h1m1 0h1m327 0h1m6 0h1m39 0h1M278 90h1M355 91h1m237 0h1M140 92h1m78 0h1m13 0h1m98 0h1m91 0h1M100 93h1m116 0h1m58 0h1m234 0h1M44 94h1m70 0h1m14 0h1m10 0h1m151 0h1m157 0h1m55 0h1m46 0h1m7 0h1m1 0h1M128 95h1m112 0h1m66 0h1M99 96h1m230 0h1m13 0h1m151 0h1m24 0h1M27 97h1m85 0h1m450 0h1M90 98h1m300 0h1m118 0h1M579 99h1M415 100h1m106 0h1M299 101h1m73 0h1m121 0h1M60 102h1m3 0h1M90 103h1m213 0h1m23 0h1m43 0h1m49 0h1m81 0h1m19 0h2m55 0h1M236 104h1m191 0h1m87 0h1M66 105h1m28 0h1m262 0h1m210 0h1M87 106h1m12 0h1m36 0h1m6 0h1m50 0h1m372 0h1M55 107h1m39 0h1m102 0h1m191 0h1m30 0h1m120 0h1M83 108h1m150 0h1m232 0h1M65 109h1m163 0h1m272 0h1m114 0h1M287 110h1m11 0h1m47 0h1m87 0h1M259 111h1M290 112h1m65 0h1M67 113h1m257 0h1M183 114h1M23 115h1m144 0h1m183 0h1M349 116h1m50 0h1m8 0h1M193 117h1m252 0h1M48 118h1m320 0h1m108 0h1m33 0h1M47 119h1m59 0h1m119 0h1m8 0h1m7 0h1m120 0h1M236 120h1m86 0h1m80 0h1M49 121h1m344 0h1m115 0h1M21 122h1m446 0h1M159 123h1m271 0h1m42 0h1m34 0h1m47 0h1m14 0h1m14 0h1M320 124h1m190 0h1m67 0h1M73 125h1m164 0h1m354 0h1M88 126h1m1 0h1m65 0h1m85 0h1M282 129h1m276 0h1M193 130h1m301 0h1M439 131h1M75 132h1m76 0h1m38 0h1m48 0h1m28 0h1m10 0h1m186 0h1M78 133h1m141 0h1m80 0h1m39 0h1m136 0h1m64 0h1M404 134h1m3 0h1m165 0h1M365 135h1m26 0h1M37 136h1m431 0h1m73 0h1m20 0h1M163 137h1m147 0h1M32 138h1m582 0h1M122 139h1m73 0h1m85 0h1m158 0h1M376 140h1M389 141h1M191 142h1m224 0h1M68 143h1m119 0h1M37 144h1m59 0h1m361 0h1m15 0h1m4 0h1M174 145h1m429 0h1m2 0h1M50 147h1m342 0h1m31 0h1m148 0h1M104 148h1m336 0h1M566 149h1M83 150h1m103 0h1m226 0h1M525 151h1m12 0h1m41 0h1M382 152h1m197 0h1m22 0h1M127 154h1m347 0h1M475 155h1M27 157h1m164 0h1m143 0h1M323 158h1m177 0h1m61 0h1M569 159h1M48 160h1m29 0h1M37 161h1m96 0h1m396 0h1m27 0h1M567 162h1M160 165h1M323 167h1M432 168h1M166 169h1m293 0h1M131 170h1m161 0h1M564 173h1M243 175h1M436 177h1M20 178h1M522 179h1m13 0h1M406 181h1M256 183h1M175 184h1M90 187h1M97 188h1m151 0h1M81 197h1M543 206h1M485 207h1M504 208h1M146 220h1M88 225h1M351 269h1"/><path stroke="rgb(0,0,202)" d="M252 80h1m51 0h1m92 0h1M22 81h1m31 0h1m196 0h1m281 0h1M105 82h1m51 0h1m29 0h1m294 0h1m17 0h1M120 83h1m140 0h1m160 0h1M133 84h1m22 0h1m98 0h1m55 0h1m30 0h1m25 0h1m62 0h1m6 0h1M42 85h1m35 0h1m77 0h1m80 0h1m17 0h1m33 0h1m120 0h1m107 0h1M157 86h1m42 0h1m153 0h1m37 0h1m72 0h1m141 0h1M106 87h1m69 0h1m169 0h1M153 88h1m70 0h1m162 0h1m35 0h1m4 0h1m68 0h2m19 0h1M75 89h1m159 0h1m204 0h1m59 0h1M30 90h1m19 0h1m281 0h1m10 0h1m272 0h1M97 91h1m89 0h1m209 0h1m137 0h1m27 0h1M222 92h1m31 0h1m289 0h1m67 0h1M301 93h1m3 0h1m71 0h1m60 0h1m51 0h1m78 0h1M37 94h1m25 0h1m12 0h1m43 0h1m64 0h1m54 0h1m31 0h1m32 0h1M180 95h1m57 0h1m20 0h1m114 0h1m21 0h1m14 0h1m12 0h1m96 0h1M174 96h1m73 0h1m67 0h1m64 0h1m27 0h1m48 0h1m4 0h1m27 0h1m21 0h1m2 0h1m17 0h1M195 97h1m219 0h1m140 0h1M23 98h1m60 0h1m239 0h1m74 0h1m170 0h1M24 99h1m4 0h1m197 0h1M238 100h1m75 0h1m30 0h1m84 0h1m3 0h1m51 0h1m43 0h1m72 0h1M68 101h1m223 0h1m24 0h1m167 0h1m104 0h1M48 102h1m69 0h1m354 0h1m87 0h1M58 103h1m67 0h1m89 0h1m374 0h1M64 104h1m62 0h1m7 0h1m45 0h1m96 0h1m91 0h1m64 0h1m13 0h1m79 0h1m8 0h1m57 0h1M143 105h1m211 0h1m23 0h1m88 0h1m7 0h1M298 106h1m45 0h1m171 0h2m36 0h1m3 0h1m17 0h1M79 107h1m29 0h1m463 0h1m1 0h1M285 108h1m6 0h1m56 0h1m77 0h1M176 109h1m1 0h1m57 0h1m89 0h1m24 0h1m109 0h1m2 0h1m69 0h1m66 0h1M241 110h1m203 0h1M298 111h1m65 0h1M237 112h1m17 0h1m221 0h1m49 0h1m81 0h1M48 113h1m196 0h1M214 114h1m204 0h1m6 0h1m155 0h1m1 0h1M95 115h1m96 0h1m19 0h1m174 0h1m78 0h1M31 116h1m42 0h1m229 0h1m138 0h1m65 0h1m63 0h1M120 117h1m117 0h1m210 0h2m92 0h1M52 118h1m530 0h1m6 0h1m14 0h1M151 119h1m61 0h1m118 0h1M49 120h1m10 0h1m62 0h1m167 0h1m148 0h1m23 0h1m34 0h1m45 0h1M149 121h1m343 0h1M55 122h1m2 0h1m134 0h1m150 0h1m19 0h1M116 123h1m12 0h1m24 0h1m67 0h1m20 0h1m82 0h1m174 0h1m113 0h1M57 124h1m207 0h1M60 125h1m8 0h1m217 0h1m24 0h1m167 0h1M431 126h1m5 0h1M508 127h1M66 128h1m184 0h1M90 129h1m247 0h1m95 0h1M285 130h1m153 0h1M124 131h1m32 0h1m86 0h1m40 0h1m61 0h1M137 132h1m279 0h1M26 133h1m22 0h1m20 0h1m295 0h1m130 0h1m77 0h1M31 134h1m426 0h1m23 0h1m134 0h1M436 135h1m71 0h1m27 0h1m64 0h1M20 136h1m463 0h1m27 0h1M469 137h1M313 138h1m59 0h1m42 0h1M114 139h1m161 0h1m43 0h1m47 0h1m142 0h1M289 140h1m85 0h1m78 0h1m61 0h1M74 142h1m195 0h1M590 144h1M364 145h1M102 146h1m229 0h1m252 0h1M190 147h1m40 0h1m76 0h1m52 0h1m43 0h1m189 0h1M92 148h1m329 0h1m1 0h1M79 151h1m182 0h1m295 0h1M322 152h1m158 0h1m40 0h1M102 153h1M180 154h1m21 0h1m86 0h1m150 0h1m157 0h1M232 155h1m113 0h1M39 157h1m29 0h1M40 159h1m199 0h1m230 0h1M21 161h1m493 0h1M20 162h1m431 0h1M249 165h1m189 0h1M141 166h1m70 0h1M124 168h1M191 169h1m31 0h1m71 0h1M453 170h1M612 171h1M275 172h1m213 0h1m27 0h1M54 173h1M346 174h1m177 0h1M428 175h1m40 0h1m69 0h1m59 0h1M104 177h1m89 0h1M416 178h1M459 179h1M125 180h1m376 0h1M507 182h1M22 183h1m357 0h1M138 194h1m319 0h1M286 195h1M272 196h1M93 199h1M318 201h1M185 221h1"/><path stroke="rgb(0,0,232)" d="M116 80h1m182 0h1m12 0h1M368 81h1m196 0h1M26 82h1m52 0h1m14 0h1m320 0h1m29 0h2m135 0h1M21 83h1m89 0h1m16 0h1m4 0h1m26 0h1M109 84h1m31 0h1m31 0h1m28 0h1m64 0h1m187 0h1m149 0h1M110 85h1m117 0h1m74 0h1m246 0h1m15 0h1M64 86h1m131 0h1m109 0h1m2 0h1m51 0h1m29 0h1m157 0h1m42 0h1M36 87h1m234 0h1m201 0h1m86 0h1M363 88h1m38 0h1m32 0h1M50 89h1m11 0h1m176 0h1m117 0h1m55 0h1M52 90h1m15 0h1m34 0h1m13 0h1m271 0h1m82 0h1m22 0h1M347 91h1m24 0h1m218 0h1M60 92h1m251 0h1m87 0h1M464 93h1m74 0h1M82 94h1M50 95h1m62 0h1m67 0h1m65 0h1m49 0h1m62 0h1m144 0h2m67 0h1m13 0h1M168 96h1m125 0h1M382 97h1M88 98h1m11 0h1m232 0h1m201 0h1m61 0h1M167 99h1m61 0h1m93 0h1m194 0h1M213 100h1m189 0h1m137 0h1M60 101h1m48 0h1m70 0h1m10 0h1m40 0h1m14 0h1m6 0h1m76 0h1m88 0h2m94 0h1M272 102h1m61 0h1m115 0h1M89 103h1m17 0h1m30 0h1m219 0h1m29 0h1M25 104h1m91 0h1m28 0h1m293 0h1m35 0h1m70 0h1m52 0h1M205 105h1m33 0h1m57 0h1m89 0h1m96 0h1m88 0h1M82 106h1m281 0h1M52 107h1m258 0h1m148 0h1M333 108h1m71 0h1m196 0h1M399 109h1m213 0h1M120 110h1m100 0h1m58 0h1m57 0h1m117 0h1m149 0h1M439 111h1M537 112h1M204 113h1m108 0h1m19 0h1M39 114h1m3 0h1m495 0h1M425 115h1M45 116h1m113 0h1m224 0h1m64 0h1M74 117h1m137 0h1m31 0h1m126 0h1M44 118h1m221 0h1M247 119h1M568 120h1M389 121h1m68 0h1m112 0h1M140 123h1m329 0h1m103 0h1M161 124h1m139 0h1m66 0h1M125 125h1m425 0h1m25 0h1M192 126h1m277 0h1m74 0h1M154 127h1m35 0h1m259 0h1M84 128h1m250 0h1m75 0h1m54 0h1M242 129h1m9 0h1m198 0h1m156 0h1M326 130h1m36 0h1M217 131h1M76 132h1m4 0h1m18 0h1m46 0h1M119 133h1m137 0h1m222 0h1M63 135h1m299 0h1M268 136h1m203 0h1M48 137h1m460 0h1M407 138h1M234 139h1m255 0h1m47 0h1m72 0h1M205 140h1M274 141h1m61 0h1m12 0h1M37 142h1m109 0h1m179 0h1M580 144h1M609 145h1M51 146h1m226 0h1m212 0h1m69 0h1M306 147h1m150 0h1m1 0h1M595 148h1M132 149h1M390 151h1M39 152h1m28 0h1m321 0h1m194 0h1M161 153h1m30 0h1m171 0h1M34 158h1M422 159h1m100 0h1M456 160h1M371 161h1M484 162h1m83 0h1M90 163h1m111 0h1M578 164h1M248 165h1m180 0h1M151 166h1m234 0h1M175 167h1m114 0h1M161 169h1m284 0h1M28 171h1M550 172h1M30 174h1M285 176h1m184 0h1M374 177h1m183 0h1M561 178h1M127 179h1M87 180h1M256 181h1M248 183h1M349 189h1M60 190h1M107 193h1M454 198h1M348 209h1M378 233h1"/><path stroke="rgb(0,0,255)" d="M22 80h1m54 0h1m16 0h1m82 0h1m28 0h2m10 0h1m116 0h1m1 0h1m105 0h1m21 0h1M47 81h1m154 0h1m272 0h1m42 0h1m70 0h1M65 82h1m59 0h1m186 0h1m84 0h1m57 0h1m9 0h2m3 0h1m58 0h1m20 0h1m34 0h1M46 83h1m36 0h1m3 0h1m50 0h1m57 0h1m232 0h1m18 0h1m56 0h1M63 84h1m37 0h1m30 0h1m14 0h1m42 0h1m181 0h1m16 0h1m6 0h1m59 0h1m13 0h1m82 0h1M48 85h1m76 0h1m8 0h1m54 0h1m55 0h1m36 0h1m77 0h1m47 0h1M139 86h1m16 0h1m16 0h1m14 0h1m61 0h1m77 0h1m158 0h1m23 0h1m18 0h1m30 0h1M99 87h1m54 0h1m101 0h1m47 0h1m13 0h1m42 0h1m89 0h1m49 0h1m18 0h1m51 0h1m5 0h1M38 88h1m25 0h1m42 0h1m37 0h1m8 0h1m61 0h1m65 0h1m1 0h1m25 0h1m80 0h1M97 89h1m15 0h1m31 0h1m18 0h1m146 0h1m44 0h1m29 0h1m15 0h1m44 0h1m137 0h1M134 90h1m5 0h2m32 0h1m54 0h1m30 0h1m16 0h1m51 0h1m30 0h1m4 0h1m33 0h1m131 0h1m66 0h1m4 0h1M41 91h1m34 0h1m51 0h1m10 0h1m80 0h1m9 0h1m53 0h1m5 0h1m10 0h1m6 0h1m208 0h1m93 0h1M79 92h1m17 0h1m45 0h1m273 0h1m39 0h1m29 0h1m73 0h1m18 0h1M79 93h1m34 0h1m240 0h1m57 0h1m37 0h1M47 94h1m16 0h1m184 0h1m28 0h1m9 0h1m76 0h1m16 0h1m91 0h1m9 0h1m53 0h1m7 0h1m25 0h2m7 0h1m29 0h1M120 95h1m89 0h1m65 0h1m62 0h1m176 0h1m92 0h1M118 96h1m28 0h1m173 0h1m25 0h1m147 0h1m34 0h1M265 97h1m148 0h1m84 0h1m109 0h1M125 98h1m167 0h1m9 0h1m15 0h1m126 0h1m29 0h1m25 0h1M44 99h1m111 0h1m43 0h1m77 0h1m16 0h1m121 0h1m101 0h1M56 100h1m33 0h1m36 0h1m70 0h1m164 0h1m62 0h1m16 0h1m114 0h1M122 101h1m171 0h1m309 0h1M120 102h1m30 0h1m20 0h1m103 0h1m74 0h1m208 0h1M31 103h1m63 0h1m41 0h1m10 0h1m5 0h1m12 0h1m38 0h1m255 0h1m56 0h1m3 0h1M104 104h1m16 0h1m18 0h1m61 0h1m99 0h1m33 0h1m21 0h1m247 0h1M37 105h1m20 0h1m40 0h1m87 0h1m62 0h1m30 0h1m214 0h1m69 0h1m39 0h1M223 106h1m213 0h1m52 0h1m47 0h1M41 107h1m65 0h1m122 0h1m2 0h1m19 0h1m163 0h1m63 0h1m19 0h1M76 108h1m25 0h1m10 0h1m66 0h1m31 0h1m121 0h1m50 0h1m78 0h1m51 0h1M105 109h1m5 0h1m52 0h1m66 0h1m12 0h1m92 0h1m26 0h1m52 0h1m187 0h1M52 110h1m6 0h1m43 0h1m17 0h1m37 0h1m88 0h1m123 0h1m206 0h1M90 111h1m111 0h1m177 0h1m3 0h1m187 0h1M100 112h1m204 0h1m57 0h2m38 0h1M417 113h1m32 0h1m127 0h1m27 0h1M28 114h1m57 0h1m153 0h1M200 115h1m93 0h1m304 0h1M86 116h1m3 0h1m70 0h1m7 0h1m420 0h1m4 0h1M38 117h1m12 0h1m97 0h1m113 0h1m34 0h1m163 0h1m8 0h1m49 0h1m17 0h1m16 0h1M400 118h1m43 0h1m127 0h1M44 119h1m64 0h1m169 0h2m151 0h1m6 0h1m59 0h1m106 0h1M88 120h1m61 0h1m102 0h1M140 121h1m64 0h1M114 122h1m216 0h1m59 0h1m84 0h1M31 123h1m179 0h1m101 0h1m58 0h1M135 124h1m9 0h1m33 0h1m59 0h1m133 0h1m57 0h1m5 0h1M25 125h1m105 0h1m53 0h1m268 0h1m53 0h1M132 126h1m191 0h1m8 0h1m73 0h1m42 0h1m1 0h1M275 127h1m43 0h1m110 0h1m65 0h1m23 0h1M27 128h1m2 0h1m158 0h1M195 129h1m252 0h1m86 0h1M226 130h1m216 0h1M73 131h1m6 0h1M157 132h1m352 0h1M56 133h1m183 0h1m23 0h1m34 0h1m168 0h1M24 134h1m91 0h1m282 0h1m63 0h1m2 0h1m21 0h1m56 0h1m8 0h1M502 135h1m23 0h1m65 0h1M362 136h1m133 0h1m90 0h1M106 137h1m305 0h1M84 138h1m32 0h1m415 0h1m40 0h1M116 139h1m68 0h1m135 0h1M144 140h1m313 0h1m151 0h1M64 141h1m156 0h1m107 0h1M554 142h1m49 0h1M500 143h1M38 144h1m396 0h1M138 145h1m67 0h1M59 148h1M113 149h1m390 0h1M216 150h1m145 0h1m147 0h1M64 151h1m180 0h1m342 0h1m4 0h1M145 152h1M600 153h1M256 154h1M576 155h1M85 156h1m452 0h1M141 157h1m269 0h1M456 159h1m13 0h1M176 160h1m64 0h1m4 0h1m323 0h1M481 161h1M112 163h1m138 0h1M293 166h1m75 0h1M164 168h1m211 0h1m22 0h1m77 0h1M124 169h1M603 170h1M475 171h1M74 172h1m224 0h1m100 0h1m142 0h1M86 173h1M566 174h1M438 175h1M244 177h1M215 178h1M43 180h1m511 0h1M540 186h1M174 192h1M387 202h1M511 208h1"/><path stroke="#0060ff" d="M519 131h1"/><path stroke="#0090ff" d="M426 81h1"/><path stroke="#10c0e0" d="M330 152h1"/><path stroke="#00a0ff" d="M546 99h1"/><path stroke="#0060ff" d="M86 122h1"/><path stroke="#0090ff" d="M327 91h1"/><path stroke="#10c0e0" d="M418 184h1"/><path stroke="#00a0ff" d="M48 109h1"/><path stroke="#0060ff" d="M266 104h1"/><path stroke="#0090ff" d="M541 93h1"/><path stroke="#10c0e0" d="M116 111h1"/><path stroke="#00a0ff" d="M114 102h1"/><path stroke="#0060ff" d="M22 116h1"/><path stroke="#0090ff" d="M561 90h1"/><path stroke="#10c0e0" d="M466 247h1"/><path stroke="#00a0ff" d="M26 107h1"/><path stroke="#0060ff" d="M432 108h1"/><path stroke="#0090ff" d="M95 135h1"/><path stroke="#10c0e0" d="M258 114h1"/><path stroke="#00a0ff" d="M135 155h1"/><path stroke="#0060ff" d="M300 204h1"/><path stroke="#0090ff" d="M453 123h1"/><path stroke="#10c0e0" d="M327 111h1"/><path stroke="#00a0ff" d="M61 93h1"/><path stroke="#0060ff" d="M76 95h1"/><path stroke="#0090ff" d="M601 81h1"/><path stroke="#10c0e0" d="M435 81h1"/><path stroke="#00a0ff" d="M416 97h1"/><path stroke="#0060ff" d="M612 111h1"/><path stroke="#0090ff" d="M375 98h1"/><path stroke="#10c0e0" d="M449 89h1"/><path stroke="#00a0ff" d="M296 93h1"/><path stroke="#0060ff" d="M83 125h1"/><path stroke="#0090ff" d="M27 118h1"/></g><g filter="url(#b2)"><path stroke="#0000c0" d="M22 288h1"/><path stroke="#0000c0" d="M22 289h1"/><path stroke="#0000c0" d="M22 290h1"/><path stroke="#0000c0" d="M22 291h1"/><path stroke="#0000c0" d="M22 292h1"/><path stroke="#0000c0" d="M22 293h1"/><path stroke="#0000c0" d="M22 294h1"/><path stroke="#0040ff" d="M22 291h1"/><path stroke="#00e060" d="M43 294h1"/><path stroke="#0060ff" d="M43 293h1"/><path stroke="#0000d0" d="M43 295h1"/><path stroke="#0000a0" d="M129 284h1"/><path stroke="#0000ff" d="M129 285h1"/><path stroke="#0080ff" d="M129 286h1"/><path stroke="#0000ff" d="M129 287h1"/><path stroke="#00d060" d="M129 288h1"/><path stroke="#ff0080" d="M129 289h1"/><path stroke="#ff0060" d="M129 290h1"/><path stroke="#ff0080" d="M129 291h1"/><path stroke="#00e0ff" d="M129 292h1"/><path stroke="#0000c0" d="M129 293h1"/><path stroke="#0000a0" d="M151 295h1"/><path stroke="#00e040" d="M151 296h1"/><path stroke="#ff4000" d="M151 297h1"/><path stroke="#ffff00" d="M151 298h1"/><path stroke="#0000ff" d="M151 299h1"/><path stroke="#0000a0" d="M164 293h1"/><path stroke="#0000a0" d="M164 294h1"/><path stroke="#0000a0" d="M164 295h1"/><path stroke="#0000a0" d="M164 296h1"/><path stroke="#000070" d="M297 287h1"/><path stroke="#000070" d="M297 288h1"/><path stroke="#000070" d="M297 289h1"/><path stroke="#000070" d="M297 290h1"/><path stroke="#000070" d="M297 291h1"/><path stroke="#000070" d="M297 302h1"/><path stroke="#000070" d="M297 303h1"/><path stroke="#000070" d="M297 304h1"/><path stroke="#0000c0" d="M297 292h1"/><path stroke="#00d0e0" d="M297 293h1"/><path stroke="#40e0a0" d="M297 294h1"/><path stroke="#ff2020" d="M297 295h1"/><path stroke="#ff0040" d="M297 296h1"/><path stroke="#ff0040" d="M297 297h1"/><path stroke="#ff0060" d="M297 298h1"/><path stroke="#2020ff" d="M297 299h1"/><path stroke="#0000ff" d="M297 300h1"/><path stroke="#0000c0" d="M297 301h1"/><path stroke="#0060e0" d="M298 293h1"/><path stroke="#c0e040" d="M298 294h1"/><path stroke="#ffff00" d="M298 295h1"/><path stroke="#ff40a0" d="M298 296h1"/><path stroke="#ff00c0" d="M298 297h1"/><path stroke="#e000c0" d="M298 298h1"/><path stroke="#4000ff" d="M298 299h1"/><path stroke="#0000ff" d="M298 300h1"/><path stroke="#0000a0" d="M298 301h1"/><path stroke="#0000ff" d="M299 296h1"/><path stroke="#0000a0" d="M299 297h1"/><path stroke="#0060ff" d="M182 292h1"/><path stroke="#0060ff" d="M263 300h1"/><path stroke="#0060ff" d="M355 295h1"/><path stroke="#0060ff" d="M383 292h1"/><path stroke="#0060ff" d="M327 293h1"/><path stroke="#30d0ff" d="M222 294h1"/><path stroke="#0030e0" d="M222 293h1"/><path stroke="#0020c0" d="M222 295h1"/><path stroke="#30d0ff" d="M371 293h1"/><path stroke="#0030e0" d="M371 292h1"/><path stroke="#0020c0" d="M371 294h1"/><path stroke="#20e080" d="M519 291h1"/><path stroke="#0030e0" d="M519 292h1"/><path stroke="#0000a0" d="M519 290h1"/><path stroke="#0040ff" d="M561 292h1"/><path stroke="#0040ff" d="M561 293h1"/><path stroke="#0030f0" d="M560 293h1"/><path stroke="#0020ff" d="M313 295h1"/><path stroke="#0010c0" d="M314 295h1"/></g></g><rect x="20" y="370" width="598" height="1" fill="#808080"/><rect x="20" y="380" width="598" height="1" fill="#808080"/><rect x="20" y="390" width="598" height="1" fill="#808080"/><rect x="19" y="266" width="1" height="90" fill="#808080"/><path stroke="#00ffff" transform="translate(.5,0)" d="M20 399v1M21 399v1M22 396v4M23 398v2M26 399v1M27 399v1M28 398v2M29 399v1M32 399v1M33 399v1M34 399v1M37 398v2M38 399v1M44 399v1M48 399v1M49 398v2M50 398v2M61 399v1M62 399v1M63 399v1M64 399v1M65 399v1M66 398v2M67 398v2M68 399v1M69 399v1M70 398v2M72 399v1M73 398v2M74 398v2M75 399v1M76 398v2M77 398v2M78 398v2M79 399v1M80 399v1M81 398v2M82 399v1M83 399v1M84 399v1M85 399v1M86 397v3M94 399v1M95 399v1M96 398v2M97 398v2M98 399v1M101 399v1M102 399v1M103 398v2M104 399v1M112 399v1M113 398v2M119 399v1M120 399v1M125 399v1M126 398v2M127 398v2M128 398v2M130 399v1M131 399v1M132 398v2M133 398v2M134 399v1M135 398v2M136 399v1M137 399v1M138 399v1M139 399v1M140 398v2M141 399v1M142 399v1M144 399v1M145 397v3M146 398v2M148 399v1M149 398v2M150 399v1M157 399v1M158 399v1M159 399v1M160 398v2M161 399v1M162 399v1M163 398v2M164 398v2M165 399v1M169 399v1M170 399v1M173 399v1M174 399v1M175 399v1M176 399v1M177 398v2M179 399v1M180 399v1M181 398v2M182 393v7M184 399v1M185 398v2M186 399v1M188 399v1M189 398v2M190 398v2M191 398v2M192 399v1M193 399v1M194 398v2M195 399v1M196 399v1M197 398v2M200 398v2M201 399v1M202 399v1M203 399v1M204 399v1M205 398v2M206 399v1M207 399v1M208 399v1M209 398v2M210 399v1M211 399v1M214 399v1M215 399v1M216 399v1M217 398v2M218 399v1M219 399v1M222 392v8M223 396v4M224 398v2M227 399v1M228 399v1M231 399v1M233 399v1M234 399v1M237 399v1M238 399v1M239 398v2M240 399v1M241 399v1M242 399v1M243 399v1M244 399v1M245 399v1M246 398v2M247 399v1M248 399v1M249 399v1M250 399v1M253 399v1M254 398v2M255 399v1M256 399v1M258 399v1M259 399v1M260 399v1M261 399v1M263 396v4M265 399v1M266 399v1M267 398v2M268 399v1M269 399v1M270 399v1M271 399v1M274 399v1M275 399v1M277 399v1M280 399v1M281 399v1M283 399v1M284 398v2M287 399v1M288 399v1M289 399v1M291 399v1M292 398v2M296 399v1M297 398v2M298 398v2M299 396v4M300 399v1M301 399v1M302 399v1M303 398v2M304 398v2M305 399v1M306 399v1M310 398v2M311 399v1M313 399v1M314 398v2M315 399v1M316 398v2M317 399v1M318 399v1M320 398v2M322 398v2M323 398v2M324 398v2M326 398v2M327 399v1M328 398v2M329 398v2M330 399v1M331 399v1M332 399v1M333 399v1M337 398v2M338 399v1M339 399v1M340 399v1M344 399v1M345 398v2M348 398v2M355 395v5M358 399v1M359 399v1M361 399v1M363 398v2M364 399v1M365 399v1M366 398v2M367 397v3M368 398v2M369 399v1M371 392v8M372 398v2M373 398v2M374 399v1M377 399v1M381 399v1M382 399v1M383 396v4M387 399v1M388 399v1M389 399v1M390 399v1M392 399v1M393 398v2M400 399v1M401 398v2M403 399v1M404 399v1M405 398v2M406 399v1M407 398v2M408 399v1M409 399v1M410 399v1M411 398v2M412 399v1M417 398v2M418 398v2M419 398v2M422 399v1M423 399v1M425 398v2M426 399v1M427 398v2M428 399v1M429 399v1M430 399v1M431 398v2M436 398v2M437 399v1M438 398v2M439 399v1M440 399v1M441 398v2M445 399v1M446 398v2M448 399v1M449 399v1M450 399v1M451 399v1M452 398v2M453 399v1M454 398v2M455 399v1M456 399v1M457 398v2M466 399v1M467 399v1M470 399v1M471 399v1M472 398v2M473 397v3M474 399v1M475 399v1M480 399v1M481 399v1M486 398v2M488 399v1M489 399v1M496 398v2M497 399v1M498 398v2M499 398v2M501 399v1M502 399v1M505 399v1M508 399v1M509 399v1M510 399v1M511 399v1M514 399v1M515 399v1M516 399v1M518 399v1M519 391v9M520 399v1M521 399v1M522 399v1M523 399v1M524 399v1M525 398v2M531 398v2M532 398v2M533 399v1M534 399v1M535 398v2M536 399v1M537 398v2M538 399v1M543 399v1M544 399v1M551 398v2M552 399v1M553 399v1M557 399v1M558 398v2M559 398v2M560 396v4M561 396v4M562 399v1M563 399v1M564 398v2M567 399v1M568 399v1M569 399v1M573 398v2M577 399v1M578 399v1M579 399v1M580 399v1M582 399v1M583 399v1M584 398v2M585 398v2M586 399v1M587 398v2M588 399v1M589 399v1M590 399v1M591 399v1M592 399v1M593 399v1M596 399v1M598 399v1M599 398v2M606 398v2M607 399v1M608 398v2M609 398v2M610 398v2M611 399v1M612 399v1M614 399v1M615 399v1M616 399v1M617 399v1"/><rect x="43" y="389" width="1" height="11" fill="#ffff00"/><rect x="129" y="383" width="1" height="17" fill="#ffff00"/><rect x="151" y="384" width="1" height="16" fill="#ffff00"/><rect x="297" y="380" width="1" height="20" fill="#ffff00"/><rect x="298" y="378" width="1" height="22" fill="#ffff00"/><rect x="0" y="399" width="20" height="1" fill="#ffffff"/><rect x="622" y="399" width="7" height="1" fill="#ffffff"/><rect x="628" y="0" width="1" height="400" fill="#ffffff"/><rect x="16" y="90" width="2" height="1" fill="#ffff00"/><rect x="624" y="90" width="2" height="1" fill="#ffff00"/><rect x="16" y="100" width="2" height="1" fill="#ffff00"/><rect x="624" y="100" width="2" height="1" fill="#ffff00"/><rect x="16" y="110" width="2" height="1" fill="#ffff00"/><rect x="624" y="110" width="2" height="1" fill="#ffff00"/><rect x="16" y="120" width="2" height="1" fill="#ffff00"/><rect x="624" y="120" width="2" height="1" fill="#ffff00"/><rect x="14" y="130" width="4" height="1" fill="#ffff00"/><rect x="624" y="130" width="4" height="1" fill="#ffff00"/><rect x="16" y="140" width="2" height="1" fill="#ffff00"/><rect x="624" y="140" width="2" height="1" fill="#ffff00"/><rect x="16" y="150" width="2" height="1" fill="#ffff00"/><rect x="624" y="150" width="2" height="1" fill="#ffff00"/><rect x="16" y="160" width="2" height="1" fill="#ffff00"/><rect x="624" y="160" width="2" height="1" fill="#ffff00"/><rect x="16" y="170" width="2" height="1" fill="#ffff00"/><rect x="624" y="170" width="2" height="1" fill="#ffff00"/><rect x="14" y="180" width="4" height="1" fill="#ffff00"/><rect x="624" y="180" width="4" height="1" fill="#ffff00"/><rect x="16" y="190" width="2" height="1" fill="#ffff00"/><rect x="624" y="190" width="2" height="1" fill="#ffff00"/><rect x="16" y="200" width="2" height="1" fill="#ffff00"/><rect x="624" y="200" width="2" height="1" fill="#ffff00"/><rect x="16" y="210" width="2" height="1" fill="#ffff00"/><rect x="624" y="210" width="2" height="1" fill="#ffff00"/><rect x="16" y="220" width="2" height="1" fill="#ffff00"/><rect x="624" y="220" width="2" height="1" fill="#ffff00"/><rect x="14" y="230" width="4" height="1" fill="#ffff00"/><rect x="624" y="230" width="4" height="1" fill="#ffff00"/><rect x="16" y="240" width="2" height="1" fill="#ffff00"/><rect x="624" y="240" width="2" height="1" fill="#ffff00"/><rect x="16" y="250" width="2" height="1" fill="#ffff00"/><rect x="624" y="250" width="2" height="1" fill="#ffff00"/><rect x="16" y="260" width="2" height="1" fill="#ffff00"/><rect x="624" y="260" width="2" height="1" fill="#ffff00"/><rect x="16" y="270" width="2" height="1" fill="#ffff00"/><rect x="624" y="270" width="2" height="1" fill="#ffff00"/><rect x="14" y="280" width="4" height="1" fill="#ffff00"/><rect x="624" y="280" width="4" height="1" fill="#ffff00"/><rect x="16" y="290" width="2" height="1" fill="#ffff00"/><rect x="624" y="290" width="2" height="1" fill="#ffff00"/><rect x="16" y="300" width="2" height="1" fill="#ffff00"/><rect x="624" y="300" width="2" height="1" fill="#ffff00"/><rect x="16" y="310" width="2" height="1" fill="#ffff00"/><rect x="624" y="310" width="2" height="1" fill="#ffff00"/><rect x="16" y="320" width="2" height="1" fill="#ffff00"/><rect x="624" y="320" width="2" height="1" fill="#ffff00"/><rect x="14" y="330" width="4" height="1" fill="#ffff00"/><rect x="624" y="330" width="4" height="1" fill="#ffff00"/><rect x="16" y="340" width="2" height="1" fill="#ffff00"/><rect x="624" y="340" width="2" height="1" fill="#ffff00"/><rect x="16" y="350" width="2" height="1" fill="#ffff00"/><rect x="624" y="350" width="2" height="1" fill="#ffff00"/><rect x="16" y="360" width="2" height="1" fill="#ffff00"/><rect x="624" y="360" width="2" height="1" fill="#ffff00"/><rect x="16" y="370" width="2" height="1" fill="#ffff00"/><rect x="624" y="370" width="2" height="1" fill="#ffff00"/><rect x="14" y="380" width="4" height="1" fill="#ffff00"/><rect x="624" y="380" width="4" height="1" fill="#ffff00"/><rect x="16" y="390" width="2" height="1" fill="#ffff00"/><rect x="624" y="390" width="2" height="1" fill="#ffff00"/><rect x="56" y="80" width="24" height="12" fill="#000000"/><rect x="79" y="92" width="1" height="3" fill="#ffff00"/><rect x="116" y="80" width="24" height="12" fill="#000000"/><rect x="139" y="92" width="1" height="3" fill="#ffff00"/><rect x="176" y="80" width="24" height="12" fill="#000000"/><rect x="199" y="92" width="1" height="3" fill="#ffff00"/><rect x="236" y="80" width="24" height="12" fill="#000000"/><rect x="259" y="92" width="1" height="3" fill="#ffff00"/><rect x="296" y="80" width="24" height="12" fill="#000000"/><rect x="319" y="92" width="1" height="3" fill="#ffff00"/><rect x="356" y="80" width="24" height="12" fill="#000000"/><rect x="379" y="92" width="1" height="3" fill="#ffff00"/><rect x="416" y="80" width="24" height="12" fill="#000000"/><rect x="439" y="92" width="1" height="3" fill="#ffff00"/><rect x="476" y="80" width="24" height="12" fill="#000000"/><rect x="499" y="92" width="1" height="3" fill="#ffff00"/><rect x="536" y="80" width="24" height="12" fill="#000000"/><rect x="559" y="92" width="1" height="3" fill="#ffff00"/><rect x="596" y="80" width="24" height="12" fill="#000000"/><rect x="619" y="92" width="1" height="3" fill="#ffff00"/>
</svg>
<div class="g" style="left:10px;top:0px;font-size:14px;line-height:16px;word-spacing:5.7px">H R O F F T</div>
<div class="g" style="left:124px;top:3px;font-size:12px;line-height:12px;letter-spacing:-0.9px">1.0.0</div>
<div style="left:9px;top:19px">0404191740.png</div>
<div style="left:9px;top:39px">04.04.19 17:40</div>
<div style="left:124px;top:24px">meteor</div>
<div style="left:139px;top:39px">4</div>
<div style="left:180px;top:4px">Observer           : Masayuki Kobayashi</div>
<div style="left:180px;top:16px">Receiving Location : Ogata-vill. Akita-Pref. JAPAN (139.96E, 40.02N)</div>
<div style="left:180px;top:28px">Receiver           : ICOM IC-575 53.7492(@LCD)MHz USB</div>
<div style="left:180px;top:40px">Receiving antenna  : A504HB(yagi 4el)</div>
<div style="left:0px;top:74px;letter-spacing:0.8px">kHz</div>
<div class="t" style="left:56px">1741</div><div class="t" style="left:116px">1742</div><div class="t" style="left:176px">1743</div><div class="t" style="left:236px">1744</div><div class="t" style="left:296px">1745</div><div class="t" style="left:356px">1746</div><div class="t" style="left:416px">1747</div><div class="t" style="left:476px">1748</div><div class="t" style="left:536px">1749</div><div class="t" style="left:596px">1750</div>
<div class="f" style="top:124px">1.1</div><div class="f" style="top:174px">1.0</div><div class="f" style="top:224px">0.9</div><div class="f" style="top:274px">0.8</div><div class="f" style="top:324px">0.7</div><div class="f" style="top:374px">0.6</div>
</body></html>
